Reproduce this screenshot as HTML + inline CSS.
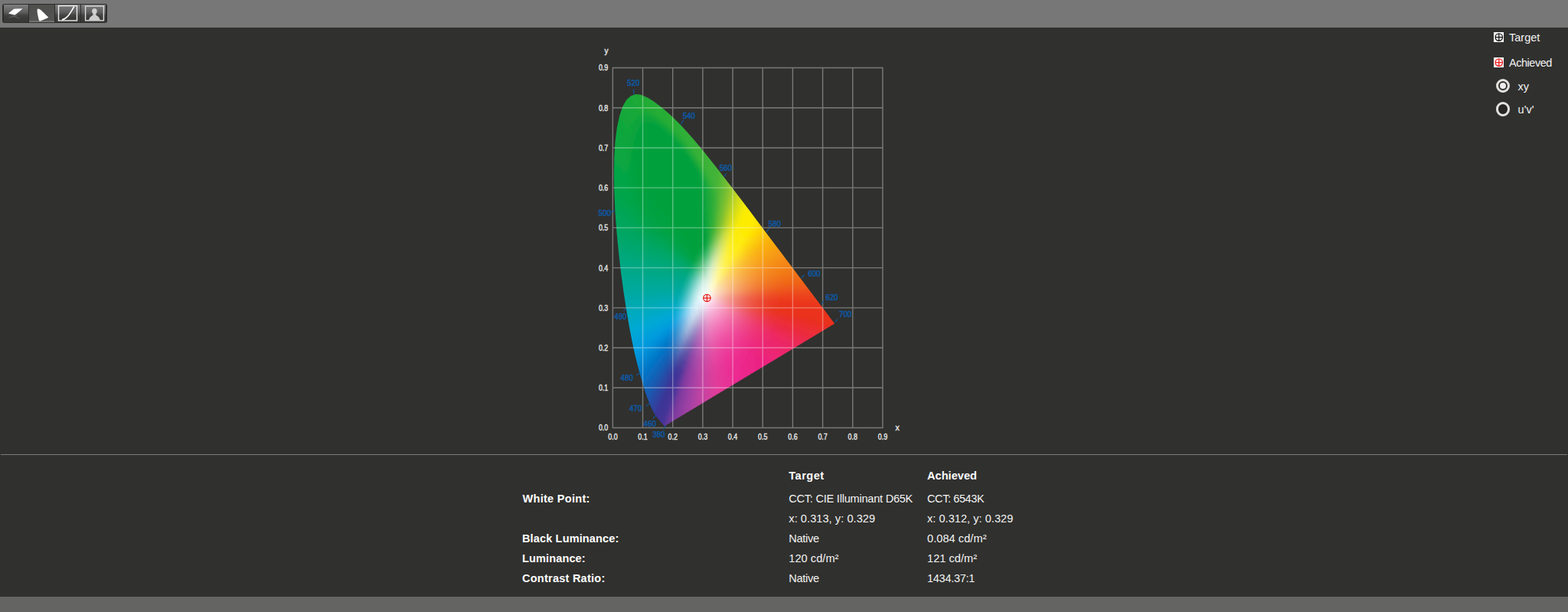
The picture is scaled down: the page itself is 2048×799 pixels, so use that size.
<!DOCTYPE html>
<html lang="en">
<head>
<meta charset="utf-8">
<title>Calibration Results</title>
<style>
html,body{margin:0;padding:0}
body{width:2048px;height:799px;overflow:hidden;background:#30302e;position:relative;font-family:"Liberation Sans","DejaVu Sans",sans-serif;color:#fff}
.hdr{position:absolute;left:0;top:0;width:2048px;height:36px;background:#777}
.ftr{position:absolute;left:0;top:779px;width:2048px;height:20px;background:#646463}
.sep{position:absolute;left:1px;top:593px;width:2046px;height:1px;background:#7c7c7c}
.chart{position:absolute;left:770px;top:50px}
.chart text{font-family:"Liberation Sans","DejaVu Sans",sans-serif}
.ax text{font-size:11.1px;fill:#e8e8e8;stroke:#e8e8e8;stroke-width:.4px}
.wl text{font-size:11.4px;fill:#0f57a0;stroke:#0f57a0;stroke-width:.6px}
.tb{position:absolute;left:3px;top:4.5px;width:136.7px;height:25.3px;border-radius:3px;background:#2c2c2b}
.tb i{position:absolute;top:1.4px;height:22.8px;background:linear-gradient(#7e7e7e 0%,#6c6c6c 25%,#5c5c5c 45%,#434341 60%,#3b3b3a 75%,#383837 100%)}
.tb i.on{background:linear-gradient(#4e4e4c 0%,#545452 85%,#5e5e5c 92%,#8a8a8a 100%)}
.lg{position:absolute;font-size:14.5px;color:#f2f2f2;white-space:nowrap}
.ic{position:absolute}
.rd{position:absolute;width:12.4px;height:12.4px;border:3px solid #e4e2de;border-radius:50%;box-sizing:content-box}
.rd.off{background:#262625}
.rd b{position:absolute;left:2px;top:2px;width:8.4px;height:8.4px;border-radius:50%;background:#ededed}
.t{position:absolute;font-size:14.5px;line-height:20px;color:#f4f4f4;white-space:nowrap}
.b{font-weight:bold;color:#fff}
</style>
</head>
<body>
<div class="hdr"></div>
<div class="tb">
<i style="left:1.7px;width:32.5px"></i><i class="on" style="left:35.3px;width:32.9px"></i><i style="left:69px;width:33px"></i><i style="left:103.2px;width:32.3px"></i>
<svg width="137" height="26" viewBox="3 4.5 137 26" style="position:absolute;left:0;top:0">
<path d="M11 16.9 L17.6 11.6 Q18.3 11 19.3 11 L29.6 10.7 L20.4 18.6 Q19.6 19.2 18.6 19 Z" fill="#fff"/>
<path d="M15.5 19.8 L25.5 23.6 M22.5 19.6 L11.5 22.6" stroke="#6a6a6a" stroke-width="1" fill="none" opacity=".8"/>
<path d="M49.6 10.9 C52.5 10.6 58.5 17.5 63 21.8 Q63.2 22.6 62 23 L52.6 27 Q51.2 27.2 50.9 26 C49.6 21 48.2 14.5 48.7 12 Q48.9 11 49.6 10.9Z" fill="#fff"/>
<rect x="76.5" y="7.1" width="24" height="19.3" fill="none" stroke="#ececec" stroke-width="1.4"/>
<path d="M81 25.4 C87.5 23.8 91.5 17.5 96.8 7.8" fill="none" stroke="#fff" stroke-width="1.6"/>
<rect x="111.6" y="7.5" width="23.8" height="18.8" fill="none" stroke="#dcdcdc" stroke-width="1.4"/>
<ellipse cx="123.4" cy="14.1" rx="3.3" ry="3.6" fill="#cfcfcf"/>
<path d="M115.8 26.2 C116.8 22.4 118.6 20.6 121.4 19.2 L121.6 16.5 H125.2 L125.4 19.2 C128.2 20.6 130 22.4 131 26.2Z" fill="#cdcdcd"/>
</svg>
</div>
<svg class="chart" width="420" height="545" viewBox="770 50 420 545">
<defs><clipPath id="loc"><path d="M868.6 555.9 L868.5 555.9 L868.5 555.9 L868.5 555.9 L868.5 555.9 L868.4 555.9 L868.4 555.9 L868.4 555.9 L868.3 555.9 L868.3 556.0 L868.2 556.0 L868.2 556.0 L868.2 556.0 L868.1 556.0 L868.0 556.0 L868.0 556.0 L867.9 556.0 L867.8 556.0 L867.7 556.0 L867.6 555.9 L867.5 555.8 L867.3 555.7 L867.2 555.6 L867.0 555.4 L866.7 555.2 L866.5 554.9 L866.2 554.6 L865.9 554.2 L865.6 553.8 L865.2 553.3 L864.8 552.8 L864.3 552.3 L863.8 551.6 L863.1 550.9 L862.5 550.1 L861.7 549.3 L860.9 548.3 L860.0 547.2 L859.0 546.0 L857.9 544.6 L856.7 543.0 L855.5 541.2 L854.2 539.0 L852.6 536.2 L850.9 532.7 L849.0 528.3 L846.8 523.1 L844.5 516.8 L842.0 509.2 L839.2 500.0 L836.1 489.2 L832.7 476.6 L829.1 461.9 L825.4 444.9 L821.8 425.8 L818.1 404.5 L814.5 381.0 L811.1 355.9 L808.1 329.9 L805.5 303.5 L803.5 277.3 L802.3 251.9 L801.8 227.9 L802.2 205.5 L803.5 184.9 L805.8 166.7 L809.1 151.4 L813.2 139.2 L818.1 130.6 L823.6 125.4 L829.5 123.1 L835.6 123.3 L841.9 125.5 L848.3 128.8 L854.7 133.0 L861.0 137.7 L867.0 142.5 L873.0 147.7 L878.8 153.0 L884.6 158.7 L890.3 164.6 L896.0 170.7 L901.6 177.0 L907.3 183.5 L912.9 190.2 L918.5 197.0 L924.1 203.9 L929.7 210.9 L935.3 218.0 L940.9 225.2 L946.5 232.4 L952.1 239.7 L957.7 246.9 L963.2 254.2 L968.8 261.5 L974.3 268.8 L979.8 276.1 L985.2 283.3 L990.6 290.4 L995.9 297.4 L1001.1 304.4 L1006.2 311.2 L1011.3 317.9 L1016.2 324.4 L1021.0 330.8 L1025.6 337.0 L1030.2 342.9 L1034.5 348.7 L1038.5 354.1 L1042.3 359.2 L1046.0 364.0 L1049.4 368.6 L1052.7 372.9 L1055.8 377.0 L1058.6 380.7 L1061.1 384.1 L1063.5 387.2 L1065.7 390.2 L1067.7 392.8 L1069.6 395.3 L1071.2 397.5 L1072.7 399.5 L1074.1 401.3 L1075.4 403.0 L1076.6 404.6 L1077.7 406.0 L1078.7 407.3 L1079.6 408.6 L1080.5 409.7 L1081.3 410.8 L1082.0 411.8 L1082.7 412.7 L1083.3 413.5 L1083.8 414.2 L1084.3 414.8 L1084.7 415.4 L1085.1 415.9 L1085.5 416.4 L1085.8 416.8 L1086.1 417.2 L1086.3 417.5 L1086.5 417.7 L1086.7 418.0 L1086.8 418.2 L1087.0 418.4 L1087.1 418.5 L1087.2 418.7 L1087.3 418.8 L1087.4 419.0 L1087.5 419.1 L1087.6 419.3 L1087.8 419.4 L1087.8 419.6 L1087.9 419.7 L1088.0 419.7 L1088.0 419.8 L1088.1 419.8 L1088.1 419.9 L1088.1 419.9 L1088.1 419.9 L1088.1 419.9 L1090.1 422.6 L868.6 555.9Z"/></clipPath>
<filter id="vb" x="-5%" y="-5%" width="110%" height="110%"><feGaussianBlur stdDeviation="0 2"/></filter>
<linearGradient id="g0" gradientUnits="userSpaceOnUse" x1="823" x2="839"><stop offset="0" stop-color="#1aa938"/><stop offset="0.333" stop-color="#1caa37"/><stop offset="0.667" stop-color="#1eab36"/><stop offset="1" stop-color="#21ab35"/></linearGradient><linearGradient id="g1" gradientUnits="userSpaceOnUse" x1="819" x2="847"><stop offset="0" stop-color="#18a938"/><stop offset="0.2" stop-color="#1aa938"/><stop offset="0.4" stop-color="#1caa37"/><stop offset="0.6" stop-color="#1fab36"/><stop offset="0.8" stop-color="#21ac35"/><stop offset="1" stop-color="#24ac34"/></linearGradient><linearGradient id="g2" gradientUnits="userSpaceOnUse" x1="816" x2="853"><stop offset="0" stop-color="#17a839"/><stop offset="0.143" stop-color="#18a938"/><stop offset="0.286" stop-color="#1aa938"/><stop offset="0.429" stop-color="#1caa37"/><stop offset="0.571" stop-color="#1fab36"/><stop offset="0.714" stop-color="#21ab35"/><stop offset="0.857" stop-color="#24ac34"/><stop offset="1" stop-color="#25ad35"/></linearGradient><linearGradient id="g3" gradientUnits="userSpaceOnUse" x1="814" x2="857"><stop offset="0" stop-color="#16a839"/><stop offset="0.125" stop-color="#17a839"/><stop offset="0.25" stop-color="#19a938"/><stop offset="0.375" stop-color="#1baa37"/><stop offset="0.5" stop-color="#1daa36"/><stop offset="0.625" stop-color="#20ab35"/><stop offset="0.75" stop-color="#23ac34"/><stop offset="0.875" stop-color="#24ac34"/><stop offset="1" stop-color="#26ad35"/></linearGradient><linearGradient id="g4" gradientUnits="userSpaceOnUse" x1="812" x2="861"><stop offset="0" stop-color="#15a83a"/><stop offset="0.111" stop-color="#16a839"/><stop offset="0.222" stop-color="#18a938"/><stop offset="0.333" stop-color="#1aa938"/><stop offset="0.444" stop-color="#1caa37"/><stop offset="0.556" stop-color="#1eab36"/><stop offset="0.667" stop-color="#21ab35"/><stop offset="0.778" stop-color="#24ac34"/><stop offset="0.889" stop-color="#25ad35"/><stop offset="1" stop-color="#27ad35"/></linearGradient><linearGradient id="g5" gradientUnits="userSpaceOnUse" x1="810" x2="865"><stop offset="0" stop-color="#14a73a"/><stop offset="0.1" stop-color="#15a83a"/><stop offset="0.2" stop-color="#17a839"/><stop offset="0.3" stop-color="#18a938"/><stop offset="0.4" stop-color="#1aa937"/><stop offset="0.5" stop-color="#1daa36"/><stop offset="0.6" stop-color="#20ab35"/><stop offset="0.7" stop-color="#22ac34"/><stop offset="0.8" stop-color="#24ac34"/><stop offset="0.9" stop-color="#26ad35"/><stop offset="1" stop-color="#28ad35"/></linearGradient><linearGradient id="g6" gradientUnits="userSpaceOnUse" x1="809" x2="869"><stop offset="0" stop-color="#13a73a"/><stop offset="0.1" stop-color="#15a83a"/><stop offset="0.2" stop-color="#16a839"/><stop offset="0.3" stop-color="#18a938"/><stop offset="0.4" stop-color="#1aa937"/><stop offset="0.5" stop-color="#1daa36"/><stop offset="0.6" stop-color="#20ab35"/><stop offset="0.7" stop-color="#23ac34"/><stop offset="0.8" stop-color="#25ad35"/><stop offset="0.9" stop-color="#27ad35"/><stop offset="1" stop-color="#28ae36"/></linearGradient><linearGradient id="g7" gradientUnits="userSpaceOnUse" x1="808" x2="873"><stop offset="0" stop-color="#13a73b"/><stop offset="0.0909" stop-color="#14a73a"/><stop offset="0.182" stop-color="#15a839"/><stop offset="0.273" stop-color="#17a839"/><stop offset="0.364" stop-color="#19a938"/><stop offset="0.455" stop-color="#1baa37"/><stop offset="0.545" stop-color="#1eaa36"/><stop offset="0.636" stop-color="#22ac35"/><stop offset="0.727" stop-color="#24ac34"/><stop offset="0.818" stop-color="#26ad35"/><stop offset="0.909" stop-color="#28ad35"/><stop offset="1" stop-color="#29ae36"/></linearGradient><linearGradient id="g8" gradientUnits="userSpaceOnUse" x1="807" x2="876"><stop offset="0" stop-color="#12a73b"/><stop offset="0.0833" stop-color="#13a73a"/><stop offset="0.167" stop-color="#15a83a"/><stop offset="0.25" stop-color="#16a839"/><stop offset="0.333" stop-color="#18a938"/><stop offset="0.417" stop-color="#17a838"/><stop offset="0.5" stop-color="#17a838"/><stop offset="0.583" stop-color="#1baa36"/><stop offset="0.667" stop-color="#23ac34"/><stop offset="0.75" stop-color="#25ad35"/><stop offset="0.833" stop-color="#26ad35"/><stop offset="0.917" stop-color="#28ae36"/><stop offset="1" stop-color="#2aae36"/></linearGradient><linearGradient id="g9" gradientUnits="userSpaceOnUse" x1="806" x2="879"><stop offset="0" stop-color="#11a73b"/><stop offset="0.0769" stop-color="#12a73b"/><stop offset="0.154" stop-color="#14a73a"/><stop offset="0.231" stop-color="#15a83a"/><stop offset="0.308" stop-color="#17a839"/><stop offset="0.385" stop-color="#15a739"/><stop offset="0.462" stop-color="#13a739"/><stop offset="0.538" stop-color="#14a739"/><stop offset="0.615" stop-color="#1aa937"/><stop offset="0.692" stop-color="#23ac34"/><stop offset="0.769" stop-color="#25ad35"/><stop offset="0.846" stop-color="#27ad35"/><stop offset="0.923" stop-color="#29ae36"/><stop offset="1" stop-color="#2bae36"/></linearGradient><linearGradient id="g10" gradientUnits="userSpaceOnUse" x1="805" x2="882"><stop offset="0" stop-color="#11a73b"/><stop offset="0.0769" stop-color="#12a73b"/><stop offset="0.154" stop-color="#13a73a"/><stop offset="0.231" stop-color="#15a83a"/><stop offset="0.308" stop-color="#15a839"/><stop offset="0.385" stop-color="#11a63a"/><stop offset="0.462" stop-color="#0fa53a"/><stop offset="0.538" stop-color="#0fa53a"/><stop offset="0.615" stop-color="#15a738"/><stop offset="0.692" stop-color="#1fab36"/><stop offset="0.769" stop-color="#26ad35"/><stop offset="0.846" stop-color="#28ad35"/><stop offset="0.923" stop-color="#2aae36"/><stop offset="1" stop-color="#2baf37"/></linearGradient><linearGradient id="g11" gradientUnits="userSpaceOnUse" x1="805" x2="886"><stop offset="0" stop-color="#10a63b"/><stop offset="0.0714" stop-color="#11a73b"/><stop offset="0.143" stop-color="#13a73b"/><stop offset="0.214" stop-color="#14a83a"/><stop offset="0.286" stop-color="#13a73a"/><stop offset="0.357" stop-color="#0fa53b"/><stop offset="0.429" stop-color="#0ca43b"/><stop offset="0.5" stop-color="#0aa43b"/><stop offset="0.571" stop-color="#0da53a"/><stop offset="0.643" stop-color="#15a738"/><stop offset="0.714" stop-color="#21ab36"/><stop offset="0.786" stop-color="#27ad35"/><stop offset="0.857" stop-color="#29ae36"/><stop offset="0.929" stop-color="#2bae36"/><stop offset="1" stop-color="#2caf37"/></linearGradient><linearGradient id="g12" gradientUnits="userSpaceOnUse" x1="804" x2="889"><stop offset="0" stop-color="#10a63c"/><stop offset="0.0667" stop-color="#11a73b"/><stop offset="0.133" stop-color="#12a73b"/><stop offset="0.2" stop-color="#13a73a"/><stop offset="0.267" stop-color="#12a73a"/><stop offset="0.333" stop-color="#0ea53b"/><stop offset="0.4" stop-color="#09a33c"/><stop offset="0.467" stop-color="#07a23c"/><stop offset="0.533" stop-color="#07a23c"/><stop offset="0.6" stop-color="#0ba43b"/><stop offset="0.667" stop-color="#15a738"/><stop offset="0.733" stop-color="#21ab36"/><stop offset="0.8" stop-color="#28ad35"/><stop offset="0.867" stop-color="#29ae36"/><stop offset="0.933" stop-color="#2bae36"/><stop offset="1" stop-color="#2daf37"/></linearGradient><linearGradient id="g13" gradientUnits="userSpaceOnUse" x1="803" x2="892"><stop offset="0" stop-color="#0fa63c"/><stop offset="0.0667" stop-color="#10a63b"/><stop offset="0.133" stop-color="#11a73b"/><stop offset="0.2" stop-color="#13a73a"/><stop offset="0.267" stop-color="#11a63b"/><stop offset="0.333" stop-color="#0ba43c"/><stop offset="0.4" stop-color="#06a23c"/><stop offset="0.467" stop-color="#03a13d"/><stop offset="0.533" stop-color="#02a13d"/><stop offset="0.6" stop-color="#07a23c"/><stop offset="0.667" stop-color="#10a63a"/><stop offset="0.733" stop-color="#1eaa37"/><stop offset="0.8" stop-color="#28ad35"/><stop offset="0.867" stop-color="#2aae36"/><stop offset="0.933" stop-color="#2caf37"/><stop offset="1" stop-color="#2eaf37"/></linearGradient><linearGradient id="g14" gradientUnits="userSpaceOnUse" x1="802" x2="895"><stop offset="0" stop-color="#0fa63c"/><stop offset="0.0625" stop-color="#10a63c"/><stop offset="0.125" stop-color="#11a73b"/><stop offset="0.188" stop-color="#12a73b"/><stop offset="0.25" stop-color="#10a63b"/><stop offset="0.312" stop-color="#0ba43c"/><stop offset="0.375" stop-color="#06a23d"/><stop offset="0.438" stop-color="#01a03e"/><stop offset="0.5" stop-color="#00a03e"/><stop offset="0.562" stop-color="#00a03e"/><stop offset="0.625" stop-color="#05a23d"/><stop offset="0.688" stop-color="#10a63a"/><stop offset="0.75" stop-color="#1faa37"/><stop offset="0.812" stop-color="#29ae36"/><stop offset="0.875" stop-color="#2bae36"/><stop offset="0.938" stop-color="#2daf37"/><stop offset="1" stop-color="#30b037"/></linearGradient><linearGradient id="g15" gradientUnits="userSpaceOnUse" x1="802" x2="898"><stop offset="0" stop-color="#0ea63d"/><stop offset="0.0625" stop-color="#0fa63c"/><stop offset="0.125" stop-color="#10a63b"/><stop offset="0.188" stop-color="#12a73b"/><stop offset="0.25" stop-color="#0ea53b"/><stop offset="0.312" stop-color="#09a33c"/><stop offset="0.375" stop-color="#02a13d"/><stop offset="0.438" stop-color="#00a03e"/><stop offset="0.5" stop-color="#00a03e"/><stop offset="0.562" stop-color="#00a03e"/><stop offset="0.625" stop-color="#01a03e"/><stop offset="0.688" stop-color="#0da43b"/><stop offset="0.75" stop-color="#1daa38"/><stop offset="0.812" stop-color="#29ae36"/><stop offset="0.875" stop-color="#2baf37"/><stop offset="0.938" stop-color="#2eaf37"/><stop offset="1" stop-color="#31b037"/></linearGradient><linearGradient id="g16" gradientUnits="userSpaceOnUse" x1="801" x2="900"><stop offset="0" stop-color="#0da63e"/><stop offset="0.0588" stop-color="#0fa63c"/><stop offset="0.118" stop-color="#10a63c"/><stop offset="0.176" stop-color="#11a73b"/><stop offset="0.235" stop-color="#0fa63b"/><stop offset="0.294" stop-color="#09a33c"/><stop offset="0.353" stop-color="#03a13d"/><stop offset="0.412" stop-color="#00a03e"/><stop offset="0.471" stop-color="#00a03e"/><stop offset="0.529" stop-color="#00a03e"/><stop offset="0.588" stop-color="#00a03e"/><stop offset="0.647" stop-color="#00a03e"/><stop offset="0.706" stop-color="#0ca43b"/><stop offset="0.765" stop-color="#1ca938"/><stop offset="0.824" stop-color="#2aae36"/><stop offset="0.882" stop-color="#2caf37"/><stop offset="0.941" stop-color="#2faf37"/><stop offset="1" stop-color="#32b037"/></linearGradient><linearGradient id="g17" gradientUnits="userSpaceOnUse" x1="801" x2="903"><stop offset="0" stop-color="#0da63e"/><stop offset="0.0588" stop-color="#0ea63d"/><stop offset="0.118" stop-color="#0fa63c"/><stop offset="0.176" stop-color="#11a63b"/><stop offset="0.235" stop-color="#0da53c"/><stop offset="0.294" stop-color="#07a33d"/><stop offset="0.353" stop-color="#00a03e"/><stop offset="0.412" stop-color="#00a03e"/><stop offset="0.471" stop-color="#00a03e"/><stop offset="0.529" stop-color="#00a03e"/><stop offset="0.588" stop-color="#00a03e"/><stop offset="0.647" stop-color="#00a03e"/><stop offset="0.706" stop-color="#09a33c"/><stop offset="0.765" stop-color="#1aa939"/><stop offset="0.824" stop-color="#2bae36"/><stop offset="0.882" stop-color="#2daf37"/><stop offset="0.941" stop-color="#30b037"/><stop offset="1" stop-color="#34b037"/></linearGradient><linearGradient id="g18" gradientUnits="userSpaceOnUse" x1="801" x2="905"><stop offset="0" stop-color="#0ca63f"/><stop offset="0.0556" stop-color="#0da63e"/><stop offset="0.111" stop-color="#0fa63c"/><stop offset="0.167" stop-color="#10a63c"/><stop offset="0.222" stop-color="#0da53c"/><stop offset="0.278" stop-color="#07a33d"/><stop offset="0.333" stop-color="#00a03e"/><stop offset="0.389" stop-color="#00a03e"/><stop offset="0.444" stop-color="#00a03e"/><stop offset="0.5" stop-color="#00a03e"/><stop offset="0.556" stop-color="#00a03e"/><stop offset="0.611" stop-color="#00a03e"/><stop offset="0.667" stop-color="#00a03e"/><stop offset="0.722" stop-color="#09a33c"/><stop offset="0.778" stop-color="#1ba939"/><stop offset="0.833" stop-color="#2bae36"/><stop offset="0.889" stop-color="#2daf37"/><stop offset="0.944" stop-color="#31b037"/><stop offset="1" stop-color="#34b137"/></linearGradient><linearGradient id="g19" gradientUnits="userSpaceOnUse" x1="800" x2="908"><stop offset="0" stop-color="#0ba640"/><stop offset="0.0556" stop-color="#0da63e"/><stop offset="0.111" stop-color="#0ea63d"/><stop offset="0.167" stop-color="#10a63c"/><stop offset="0.222" stop-color="#0ca53c"/><stop offset="0.278" stop-color="#06a23d"/><stop offset="0.333" stop-color="#00a03e"/><stop offset="0.389" stop-color="#00a03e"/><stop offset="0.444" stop-color="#00a03e"/><stop offset="0.5" stop-color="#00a03e"/><stop offset="0.556" stop-color="#00a03e"/><stop offset="0.611" stop-color="#00a03e"/><stop offset="0.667" stop-color="#00a03e"/><stop offset="0.722" stop-color="#06a23d"/><stop offset="0.778" stop-color="#19a839"/><stop offset="0.833" stop-color="#2caf37"/><stop offset="0.889" stop-color="#2faf37"/><stop offset="0.944" stop-color="#32b037"/><stop offset="1" stop-color="#36b137"/></linearGradient><linearGradient id="g20" gradientUnits="userSpaceOnUse" x1="800" x2="911"><stop offset="0" stop-color="#0ba640"/><stop offset="0.0526" stop-color="#0ca63f"/><stop offset="0.105" stop-color="#0ea63d"/><stop offset="0.158" stop-color="#0fa63c"/><stop offset="0.211" stop-color="#0ca53c"/><stop offset="0.263" stop-color="#06a23d"/><stop offset="0.316" stop-color="#00a03e"/><stop offset="0.368" stop-color="#00a03e"/><stop offset="0.421" stop-color="#00a03e"/><stop offset="0.474" stop-color="#00a03e"/><stop offset="0.526" stop-color="#00a03e"/><stop offset="0.579" stop-color="#00a03e"/><stop offset="0.632" stop-color="#00a03e"/><stop offset="0.684" stop-color="#00a03e"/><stop offset="0.737" stop-color="#09a33c"/><stop offset="0.789" stop-color="#1ca939"/><stop offset="0.842" stop-color="#2daf37"/><stop offset="0.895" stop-color="#30b037"/><stop offset="0.947" stop-color="#34b137"/><stop offset="1" stop-color="#37b137"/></linearGradient><linearGradient id="g21" gradientUnits="userSpaceOnUse" x1="800" x2="914"><stop offset="0" stop-color="#0aa641"/><stop offset="0.0526" stop-color="#0ca63f"/><stop offset="0.105" stop-color="#0da63e"/><stop offset="0.158" stop-color="#0fa63c"/><stop offset="0.211" stop-color="#0aa43c"/><stop offset="0.263" stop-color="#04a23d"/><stop offset="0.316" stop-color="#00a03e"/><stop offset="0.368" stop-color="#00a03e"/><stop offset="0.421" stop-color="#00a03e"/><stop offset="0.474" stop-color="#00a03e"/><stop offset="0.526" stop-color="#00a03e"/><stop offset="0.579" stop-color="#00a03e"/><stop offset="0.632" stop-color="#00a03e"/><stop offset="0.684" stop-color="#00a03e"/><stop offset="0.737" stop-color="#07a23d"/><stop offset="0.789" stop-color="#1ca939"/><stop offset="0.842" stop-color="#2eaf37"/><stop offset="0.895" stop-color="#32b037"/><stop offset="0.947" stop-color="#35b137"/><stop offset="1" stop-color="#39b237"/></linearGradient><linearGradient id="g22" gradientUnits="userSpaceOnUse" x1="800" x2="915"><stop offset="0" stop-color="#0aa641"/><stop offset="0.05" stop-color="#0ba640"/><stop offset="0.1" stop-color="#0ca63f"/><stop offset="0.15" stop-color="#0ea63d"/><stop offset="0.2" stop-color="#0ba43d"/><stop offset="0.25" stop-color="#05a23d"/><stop offset="0.3" stop-color="#00a03e"/><stop offset="0.35" stop-color="#00a03e"/><stop offset="0.4" stop-color="#00a03e"/><stop offset="0.45" stop-color="#00a03e"/><stop offset="0.5" stop-color="#00a03e"/><stop offset="0.55" stop-color="#00a03e"/><stop offset="0.6" stop-color="#00a03e"/><stop offset="0.65" stop-color="#00a03e"/><stop offset="0.7" stop-color="#00a03e"/><stop offset="0.75" stop-color="#06a23d"/><stop offset="0.8" stop-color="#1aa93a"/><stop offset="0.85" stop-color="#2eaf37"/><stop offset="0.9" stop-color="#32b037"/><stop offset="0.95" stop-color="#36b137"/><stop offset="1" stop-color="#39b237"/></linearGradient><linearGradient id="g23" gradientUnits="userSpaceOnUse" x1="799" x2="918"><stop offset="0" stop-color="#09a642"/><stop offset="0.05" stop-color="#0aa641"/><stop offset="0.1" stop-color="#0ca63f"/><stop offset="0.15" stop-color="#0da63e"/><stop offset="0.2" stop-color="#0aa43d"/><stop offset="0.25" stop-color="#05a23d"/><stop offset="0.3" stop-color="#00a03e"/><stop offset="0.35" stop-color="#00a03e"/><stop offset="0.4" stop-color="#00a03e"/><stop offset="0.45" stop-color="#00a03e"/><stop offset="0.5" stop-color="#00a03e"/><stop offset="0.55" stop-color="#00a03e"/><stop offset="0.6" stop-color="#00a03e"/><stop offset="0.65" stop-color="#00a03e"/><stop offset="0.7" stop-color="#00a03e"/><stop offset="0.75" stop-color="#04a13d"/><stop offset="0.8" stop-color="#19a83a"/><stop offset="0.85" stop-color="#30b037"/><stop offset="0.9" stop-color="#34b037"/><stop offset="0.95" stop-color="#37b137"/><stop offset="1" stop-color="#3ab237"/></linearGradient><linearGradient id="g24" gradientUnits="userSpaceOnUse" x1="799" x2="921"><stop offset="0" stop-color="#09a642"/><stop offset="0.0476" stop-color="#0aa641"/><stop offset="0.0952" stop-color="#0ba640"/><stop offset="0.143" stop-color="#0ca63f"/><stop offset="0.19" stop-color="#0aa43d"/><stop offset="0.238" stop-color="#05a23d"/><stop offset="0.286" stop-color="#00a03e"/><stop offset="0.333" stop-color="#00a03e"/><stop offset="0.381" stop-color="#00a03e"/><stop offset="0.429" stop-color="#00a03e"/><stop offset="0.476" stop-color="#00a03e"/><stop offset="0.524" stop-color="#00a03e"/><stop offset="0.571" stop-color="#00a03e"/><stop offset="0.619" stop-color="#00a03e"/><stop offset="0.667" stop-color="#00a03e"/><stop offset="0.714" stop-color="#00a03e"/><stop offset="0.762" stop-color="#08a33d"/><stop offset="0.81" stop-color="#1eaa39"/><stop offset="0.857" stop-color="#32b037"/><stop offset="0.905" stop-color="#35b137"/><stop offset="0.952" stop-color="#39b237"/><stop offset="1" stop-color="#3cb237"/></linearGradient><linearGradient id="g25" gradientUnits="userSpaceOnUse" x1="799" x2="923"><stop offset="0" stop-color="#08a643"/><stop offset="0.0476" stop-color="#09a642"/><stop offset="0.0952" stop-color="#0ba640"/><stop offset="0.143" stop-color="#0ca63f"/><stop offset="0.19" stop-color="#09a43e"/><stop offset="0.238" stop-color="#04a23d"/><stop offset="0.286" stop-color="#00a03e"/><stop offset="0.333" stop-color="#00a03e"/><stop offset="0.381" stop-color="#00a03e"/><stop offset="0.429" stop-color="#00a03e"/><stop offset="0.476" stop-color="#00a03e"/><stop offset="0.524" stop-color="#00a03e"/><stop offset="0.571" stop-color="#00a03e"/><stop offset="0.619" stop-color="#00a03e"/><stop offset="0.667" stop-color="#00a03e"/><stop offset="0.714" stop-color="#00a03e"/><stop offset="0.762" stop-color="#05a23d"/><stop offset="0.81" stop-color="#1ca93a"/><stop offset="0.857" stop-color="#33b037"/><stop offset="0.905" stop-color="#36b137"/><stop offset="0.952" stop-color="#3ab237"/><stop offset="1" stop-color="#3db237"/></linearGradient><linearGradient id="g26" gradientUnits="userSpaceOnUse" x1="799" x2="926"><stop offset="0" stop-color="#08a643"/><stop offset="0.0455" stop-color="#09a642"/><stop offset="0.0909" stop-color="#0aa641"/><stop offset="0.136" stop-color="#0ba640"/><stop offset="0.182" stop-color="#09a43e"/><stop offset="0.227" stop-color="#04a23e"/><stop offset="0.273" stop-color="#00a03e"/><stop offset="0.318" stop-color="#00a03e"/><stop offset="0.364" stop-color="#00a03e"/><stop offset="0.409" stop-color="#00a03e"/><stop offset="0.455" stop-color="#00a03e"/><stop offset="0.5" stop-color="#00a03e"/><stop offset="0.545" stop-color="#00a03e"/><stop offset="0.591" stop-color="#00a03e"/><stop offset="0.636" stop-color="#00a03e"/><stop offset="0.682" stop-color="#00a03e"/><stop offset="0.727" stop-color="#00a03e"/><stop offset="0.773" stop-color="#0aa33c"/><stop offset="0.818" stop-color="#22ab39"/><stop offset="0.864" stop-color="#35b137"/><stop offset="0.909" stop-color="#38b137"/><stop offset="0.955" stop-color="#3bb237"/><stop offset="1" stop-color="#3eb337"/></linearGradient><linearGradient id="g27" gradientUnits="userSpaceOnUse" x1="799" x2="928"><stop offset="0" stop-color="#07a544"/><stop offset="0.0455" stop-color="#08a643"/><stop offset="0.0909" stop-color="#09a642"/><stop offset="0.136" stop-color="#0ba640"/><stop offset="0.182" stop-color="#08a43f"/><stop offset="0.227" stop-color="#04a23e"/><stop offset="0.273" stop-color="#00a03e"/><stop offset="0.318" stop-color="#00a03e"/><stop offset="0.364" stop-color="#00a03e"/><stop offset="0.409" stop-color="#00a03e"/><stop offset="0.455" stop-color="#00a03e"/><stop offset="0.5" stop-color="#00a03e"/><stop offset="0.545" stop-color="#00a03e"/><stop offset="0.591" stop-color="#00a03e"/><stop offset="0.636" stop-color="#00a03e"/><stop offset="0.682" stop-color="#00a03e"/><stop offset="0.727" stop-color="#00a03e"/><stop offset="0.773" stop-color="#07a23d"/><stop offset="0.818" stop-color="#20aa39"/><stop offset="0.864" stop-color="#35b137"/><stop offset="0.909" stop-color="#39b237"/><stop offset="0.955" stop-color="#3cb237"/><stop offset="1" stop-color="#3fb337"/></linearGradient><linearGradient id="g28" gradientUnits="userSpaceOnUse" x1="799" x2="930"><stop offset="0" stop-color="#07a544"/><stop offset="0.0455" stop-color="#08a643"/><stop offset="0.0909" stop-color="#09a642"/><stop offset="0.136" stop-color="#0aa641"/><stop offset="0.182" stop-color="#07a43f"/><stop offset="0.227" stop-color="#03a13e"/><stop offset="0.273" stop-color="#00a03e"/><stop offset="0.318" stop-color="#00a03e"/><stop offset="0.364" stop-color="#00a03e"/><stop offset="0.409" stop-color="#00a03e"/><stop offset="0.455" stop-color="#00a03e"/><stop offset="0.5" stop-color="#00a03e"/><stop offset="0.545" stop-color="#00a03e"/><stop offset="0.591" stop-color="#00a03e"/><stop offset="0.636" stop-color="#00a03e"/><stop offset="0.682" stop-color="#00a03e"/><stop offset="0.727" stop-color="#00a03e"/><stop offset="0.773" stop-color="#05a23d"/><stop offset="0.818" stop-color="#1faa3a"/><stop offset="0.864" stop-color="#36b137"/><stop offset="0.909" stop-color="#3ab237"/><stop offset="0.955" stop-color="#3db337"/><stop offset="1" stop-color="#40b337"/></linearGradient><linearGradient id="g29" gradientUnits="userSpaceOnUse" x1="799" x2="933"><stop offset="0" stop-color="#06a545"/><stop offset="0.0435" stop-color="#07a544"/><stop offset="0.087" stop-color="#08a643"/><stop offset="0.13" stop-color="#09a642"/><stop offset="0.174" stop-color="#07a43f"/><stop offset="0.217" stop-color="#03a23e"/><stop offset="0.261" stop-color="#00a03e"/><stop offset="0.304" stop-color="#00a03e"/><stop offset="0.348" stop-color="#00a03e"/><stop offset="0.391" stop-color="#00a03e"/><stop offset="0.435" stop-color="#00a03e"/><stop offset="0.478" stop-color="#00a03e"/><stop offset="0.522" stop-color="#00a03e"/><stop offset="0.565" stop-color="#00a03e"/><stop offset="0.609" stop-color="#00a03e"/><stop offset="0.652" stop-color="#00a03e"/><stop offset="0.696" stop-color="#00a03e"/><stop offset="0.739" stop-color="#00a03e"/><stop offset="0.783" stop-color="#0ba43c"/><stop offset="0.826" stop-color="#26ac39"/><stop offset="0.87" stop-color="#38b137"/><stop offset="0.913" stop-color="#3cb237"/><stop offset="0.957" stop-color="#3fb337"/><stop offset="1" stop-color="#41b337"/></linearGradient><linearGradient id="g30" gradientUnits="userSpaceOnUse" x1="798" x2="935"><stop offset="0" stop-color="#06a545"/><stop offset="0.0435" stop-color="#07a544"/><stop offset="0.087" stop-color="#08a643"/><stop offset="0.13" stop-color="#09a642"/><stop offset="0.174" stop-color="#07a440"/><stop offset="0.217" stop-color="#03a23e"/><stop offset="0.261" stop-color="#00a03e"/><stop offset="0.304" stop-color="#00a03e"/><stop offset="0.348" stop-color="#00a03e"/><stop offset="0.391" stop-color="#00a03e"/><stop offset="0.435" stop-color="#00a03e"/><stop offset="0.478" stop-color="#00a03e"/><stop offset="0.522" stop-color="#00a03e"/><stop offset="0.565" stop-color="#00a03e"/><stop offset="0.609" stop-color="#00a03e"/><stop offset="0.652" stop-color="#00a03e"/><stop offset="0.696" stop-color="#00a03e"/><stop offset="0.739" stop-color="#00a03e"/><stop offset="0.783" stop-color="#08a33d"/><stop offset="0.826" stop-color="#25ac39"/><stop offset="0.87" stop-color="#39b237"/><stop offset="0.913" stop-color="#3db237"/><stop offset="0.957" stop-color="#40b337"/><stop offset="1" stop-color="#42b437"/></linearGradient><linearGradient id="g31" gradientUnits="userSpaceOnUse" x1="798" x2="938"><stop offset="0" stop-color="#05a546"/><stop offset="0.0417" stop-color="#06a545"/><stop offset="0.0833" stop-color="#07a544"/><stop offset="0.125" stop-color="#08a643"/><stop offset="0.167" stop-color="#07a441"/><stop offset="0.208" stop-color="#04a23f"/><stop offset="0.25" stop-color="#00a03e"/><stop offset="0.292" stop-color="#00a03e"/><stop offset="0.333" stop-color="#00a03e"/><stop offset="0.375" stop-color="#00a03e"/><stop offset="0.417" stop-color="#00a03e"/><stop offset="0.458" stop-color="#00a03e"/><stop offset="0.5" stop-color="#00a03e"/><stop offset="0.542" stop-color="#00a03e"/><stop offset="0.583" stop-color="#00a03e"/><stop offset="0.625" stop-color="#00a03e"/><stop offset="0.667" stop-color="#00a03e"/><stop offset="0.708" stop-color="#00a03e"/><stop offset="0.75" stop-color="#00a03e"/><stop offset="0.792" stop-color="#0fa53c"/><stop offset="0.833" stop-color="#2dae38"/><stop offset="0.875" stop-color="#3bb237"/><stop offset="0.917" stop-color="#3eb337"/><stop offset="0.958" stop-color="#41b337"/><stop offset="1" stop-color="#44b437"/></linearGradient><linearGradient id="g32" gradientUnits="userSpaceOnUse" x1="798" x2="940"><stop offset="0" stop-color="#05a546"/><stop offset="0.0417" stop-color="#06a545"/><stop offset="0.0833" stop-color="#07a544"/><stop offset="0.125" stop-color="#08a643"/><stop offset="0.167" stop-color="#06a441"/><stop offset="0.208" stop-color="#03a23f"/><stop offset="0.25" stop-color="#00a03e"/><stop offset="0.292" stop-color="#00a03e"/><stop offset="0.333" stop-color="#00a03e"/><stop offset="0.375" stop-color="#00a03e"/><stop offset="0.417" stop-color="#00a03e"/><stop offset="0.458" stop-color="#00a03e"/><stop offset="0.5" stop-color="#00a03e"/><stop offset="0.542" stop-color="#00a03e"/><stop offset="0.583" stop-color="#00a03e"/><stop offset="0.625" stop-color="#00a03e"/><stop offset="0.667" stop-color="#00a03e"/><stop offset="0.708" stop-color="#00a03e"/><stop offset="0.75" stop-color="#00a03e"/><stop offset="0.792" stop-color="#0ea43c"/><stop offset="0.833" stop-color="#2dae38"/><stop offset="0.875" stop-color="#3cb237"/><stop offset="0.917" stop-color="#3fb337"/><stop offset="0.958" stop-color="#42b437"/><stop offset="1" stop-color="#4ab536"/></linearGradient><linearGradient id="g33" gradientUnits="userSpaceOnUse" x1="798" x2="942"><stop offset="0" stop-color="#04a547"/><stop offset="0.0417" stop-color="#05a546"/><stop offset="0.0833" stop-color="#06a545"/><stop offset="0.125" stop-color="#07a544"/><stop offset="0.167" stop-color="#06a441"/><stop offset="0.208" stop-color="#03a23f"/><stop offset="0.25" stop-color="#00a03e"/><stop offset="0.292" stop-color="#00a03e"/><stop offset="0.333" stop-color="#00a03e"/><stop offset="0.375" stop-color="#00a03e"/><stop offset="0.417" stop-color="#00a03e"/><stop offset="0.458" stop-color="#00a03e"/><stop offset="0.5" stop-color="#00a03e"/><stop offset="0.542" stop-color="#00a03e"/><stop offset="0.583" stop-color="#00a03e"/><stop offset="0.625" stop-color="#00a03e"/><stop offset="0.667" stop-color="#00a03e"/><stop offset="0.708" stop-color="#00a03e"/><stop offset="0.75" stop-color="#00a03e"/><stop offset="0.792" stop-color="#0ea43c"/><stop offset="0.833" stop-color="#2eae38"/><stop offset="0.875" stop-color="#3db237"/><stop offset="0.917" stop-color="#40b337"/><stop offset="0.958" stop-color="#43b437"/><stop offset="1" stop-color="#52b736"/></linearGradient><linearGradient id="g34" gradientUnits="userSpaceOnUse" x1="798" x2="944"><stop offset="0" stop-color="#04a547"/><stop offset="0.04" stop-color="#05a546"/><stop offset="0.08" stop-color="#06a545"/><stop offset="0.12" stop-color="#07a544"/><stop offset="0.16" stop-color="#06a442"/><stop offset="0.2" stop-color="#03a23f"/><stop offset="0.24" stop-color="#00a03e"/><stop offset="0.28" stop-color="#00a03e"/><stop offset="0.32" stop-color="#00a03e"/><stop offset="0.36" stop-color="#00a03e"/><stop offset="0.4" stop-color="#00a03e"/><stop offset="0.44" stop-color="#00a03e"/><stop offset="0.48" stop-color="#00a03e"/><stop offset="0.52" stop-color="#00a03e"/><stop offset="0.56" stop-color="#00a03e"/><stop offset="0.6" stop-color="#00a03e"/><stop offset="0.64" stop-color="#00a03e"/><stop offset="0.68" stop-color="#00a03e"/><stop offset="0.72" stop-color="#00a03e"/><stop offset="0.76" stop-color="#00a03e"/><stop offset="0.8" stop-color="#16a73b"/><stop offset="0.84" stop-color="#32af38"/><stop offset="0.88" stop-color="#3eb337"/><stop offset="0.92" stop-color="#41b337"/><stop offset="0.96" stop-color="#45b437"/><stop offset="1" stop-color="#5ab935"/></linearGradient><linearGradient id="g35" gradientUnits="userSpaceOnUse" x1="798" x2="947"><stop offset="0" stop-color="#03a548"/><stop offset="0.04" stop-color="#04a547"/><stop offset="0.08" stop-color="#05a546"/><stop offset="0.12" stop-color="#06a545"/><stop offset="0.16" stop-color="#05a442"/><stop offset="0.2" stop-color="#03a23f"/><stop offset="0.24" stop-color="#00a03e"/><stop offset="0.28" stop-color="#00a03e"/><stop offset="0.32" stop-color="#00a03e"/><stop offset="0.36" stop-color="#00a03e"/><stop offset="0.4" stop-color="#00a03e"/><stop offset="0.44" stop-color="#00a03e"/><stop offset="0.48" stop-color="#00a03e"/><stop offset="0.52" stop-color="#00a03e"/><stop offset="0.56" stop-color="#00a03e"/><stop offset="0.6" stop-color="#00a03e"/><stop offset="0.64" stop-color="#00a03e"/><stop offset="0.68" stop-color="#00a03e"/><stop offset="0.72" stop-color="#00a03e"/><stop offset="0.76" stop-color="#00a03e"/><stop offset="0.8" stop-color="#1ba83b"/><stop offset="0.84" stop-color="#36b038"/><stop offset="0.88" stop-color="#40b337"/><stop offset="0.92" stop-color="#43b437"/><stop offset="0.96" stop-color="#51b736"/><stop offset="1" stop-color="#65bb34"/></linearGradient><linearGradient id="g36" gradientUnits="userSpaceOnUse" x1="798" x2="949"><stop offset="0" stop-color="#03a548"/><stop offset="0.0385" stop-color="#04a547"/><stop offset="0.0769" stop-color="#04a547"/><stop offset="0.115" stop-color="#05a546"/><stop offset="0.154" stop-color="#05a443"/><stop offset="0.192" stop-color="#03a240"/><stop offset="0.231" stop-color="#00a03e"/><stop offset="0.269" stop-color="#00a03e"/><stop offset="0.308" stop-color="#00a03e"/><stop offset="0.346" stop-color="#00a03e"/><stop offset="0.385" stop-color="#00a03e"/><stop offset="0.423" stop-color="#00a03e"/><stop offset="0.462" stop-color="#00a03e"/><stop offset="0.5" stop-color="#00a03e"/><stop offset="0.538" stop-color="#00a03e"/><stop offset="0.577" stop-color="#00a03e"/><stop offset="0.615" stop-color="#00a03e"/><stop offset="0.654" stop-color="#00a03e"/><stop offset="0.692" stop-color="#00a03e"/><stop offset="0.731" stop-color="#00a03e"/><stop offset="0.769" stop-color="#05a23d"/><stop offset="0.808" stop-color="#23ab3a"/><stop offset="0.846" stop-color="#3ab137"/><stop offset="0.885" stop-color="#41b337"/><stop offset="0.923" stop-color="#44b437"/><stop offset="0.962" stop-color="#5ab935"/><stop offset="1" stop-color="#6ebd33"/></linearGradient><linearGradient id="g37" gradientUnits="userSpaceOnUse" x1="798" x2="951"><stop offset="0" stop-color="#02a549"/><stop offset="0.0385" stop-color="#03a548"/><stop offset="0.0769" stop-color="#04a547"/><stop offset="0.115" stop-color="#05a546"/><stop offset="0.154" stop-color="#05a444"/><stop offset="0.192" stop-color="#03a240"/><stop offset="0.231" stop-color="#00a03e"/><stop offset="0.269" stop-color="#00a03e"/><stop offset="0.308" stop-color="#00a03e"/><stop offset="0.346" stop-color="#00a03e"/><stop offset="0.385" stop-color="#00a03e"/><stop offset="0.423" stop-color="#00a03e"/><stop offset="0.462" stop-color="#00a03e"/><stop offset="0.5" stop-color="#00a03e"/><stop offset="0.538" stop-color="#00a03e"/><stop offset="0.577" stop-color="#00a03e"/><stop offset="0.615" stop-color="#00a03e"/><stop offset="0.654" stop-color="#00a03e"/><stop offset="0.692" stop-color="#00a03e"/><stop offset="0.731" stop-color="#00a03e"/><stop offset="0.769" stop-color="#08a23d"/><stop offset="0.808" stop-color="#24ab3a"/><stop offset="0.846" stop-color="#3ab237"/><stop offset="0.885" stop-color="#42b437"/><stop offset="0.923" stop-color="#4db636"/><stop offset="0.962" stop-color="#62ba34"/><stop offset="1" stop-color="#76be33"/></linearGradient><linearGradient id="g38" gradientUnits="userSpaceOnUse" x1="798" x2="954"><stop offset="0" stop-color="#02a549"/><stop offset="0.0385" stop-color="#03a548"/><stop offset="0.0769" stop-color="#03a548"/><stop offset="0.115" stop-color="#04a547"/><stop offset="0.154" stop-color="#04a444"/><stop offset="0.192" stop-color="#03a240"/><stop offset="0.231" stop-color="#00a03e"/><stop offset="0.269" stop-color="#00a03e"/><stop offset="0.308" stop-color="#00a03e"/><stop offset="0.346" stop-color="#00a03e"/><stop offset="0.385" stop-color="#00a03e"/><stop offset="0.423" stop-color="#00a03e"/><stop offset="0.462" stop-color="#00a03e"/><stop offset="0.5" stop-color="#00a03e"/><stop offset="0.538" stop-color="#00a03e"/><stop offset="0.577" stop-color="#00a03e"/><stop offset="0.615" stop-color="#00a03e"/><stop offset="0.654" stop-color="#00a03e"/><stop offset="0.692" stop-color="#00a03e"/><stop offset="0.731" stop-color="#00a03e"/><stop offset="0.769" stop-color="#0ca43c"/><stop offset="0.808" stop-color="#2aad39"/><stop offset="0.846" stop-color="#3eb237"/><stop offset="0.885" stop-color="#44b437"/><stop offset="0.923" stop-color="#58b835"/><stop offset="0.962" stop-color="#6ebd33"/><stop offset="1" stop-color="#84c230"/></linearGradient><linearGradient id="g39" gradientUnits="userSpaceOnUse" x1="798" x2="956"><stop offset="0" stop-color="#01a54a"/><stop offset="0.037" stop-color="#02a549"/><stop offset="0.0741" stop-color="#03a548"/><stop offset="0.111" stop-color="#04a547"/><stop offset="0.148" stop-color="#04a445"/><stop offset="0.185" stop-color="#03a341"/><stop offset="0.222" stop-color="#00a03e"/><stop offset="0.259" stop-color="#00a03e"/><stop offset="0.296" stop-color="#00a03e"/><stop offset="0.333" stop-color="#00a03e"/><stop offset="0.37" stop-color="#00a03e"/><stop offset="0.407" stop-color="#00a03e"/><stop offset="0.444" stop-color="#00a03e"/><stop offset="0.481" stop-color="#00a03e"/><stop offset="0.519" stop-color="#00a03e"/><stop offset="0.556" stop-color="#00a03e"/><stop offset="0.593" stop-color="#00a03e"/><stop offset="0.63" stop-color="#00a03e"/><stop offset="0.667" stop-color="#00a03e"/><stop offset="0.704" stop-color="#00a03e"/><stop offset="0.741" stop-color="#05a13d"/><stop offset="0.778" stop-color="#14a63c"/><stop offset="0.815" stop-color="#30af39"/><stop offset="0.852" stop-color="#41b337"/><stop offset="0.889" stop-color="#4cb636"/><stop offset="0.926" stop-color="#62ba34"/><stop offset="0.963" stop-color="#76bf33"/><stop offset="1" stop-color="#91c62d"/></linearGradient><linearGradient id="g40" gradientUnits="userSpaceOnUse" x1="798" x2="958"><stop offset="0" stop-color="#01a54a"/><stop offset="0.037" stop-color="#02a549"/><stop offset="0.0741" stop-color="#02a549"/><stop offset="0.111" stop-color="#03a548"/><stop offset="0.148" stop-color="#04a445"/><stop offset="0.185" stop-color="#03a342"/><stop offset="0.222" stop-color="#00a03e"/><stop offset="0.259" stop-color="#00a03e"/><stop offset="0.296" stop-color="#00a03e"/><stop offset="0.333" stop-color="#00a03e"/><stop offset="0.37" stop-color="#00a03e"/><stop offset="0.407" stop-color="#00a03e"/><stop offset="0.444" stop-color="#00a03e"/><stop offset="0.481" stop-color="#00a03e"/><stop offset="0.519" stop-color="#00a03e"/><stop offset="0.556" stop-color="#00a03e"/><stop offset="0.593" stop-color="#00a03e"/><stop offset="0.63" stop-color="#00a03e"/><stop offset="0.667" stop-color="#00a03e"/><stop offset="0.704" stop-color="#00a03e"/><stop offset="0.741" stop-color="#07a23d"/><stop offset="0.778" stop-color="#17a73b"/><stop offset="0.815" stop-color="#32af38"/><stop offset="0.852" stop-color="#42b337"/><stop offset="0.889" stop-color="#54b736"/><stop offset="0.926" stop-color="#6abc34"/><stop offset="0.963" stop-color="#80c131"/><stop offset="1" stop-color="#9fcb29"/></linearGradient><linearGradient id="g41" gradientUnits="userSpaceOnUse" x1="798" x2="961"><stop offset="0" stop-color="#01a54a"/><stop offset="0.0357" stop-color="#01a54a"/><stop offset="0.0714" stop-color="#02a549"/><stop offset="0.107" stop-color="#03a548"/><stop offset="0.143" stop-color="#03a546"/><stop offset="0.179" stop-color="#03a343"/><stop offset="0.214" stop-color="#01a13f"/><stop offset="0.25" stop-color="#00a03e"/><stop offset="0.286" stop-color="#00a03e"/><stop offset="0.321" stop-color="#00a03e"/><stop offset="0.357" stop-color="#00a03e"/><stop offset="0.393" stop-color="#00a03e"/><stop offset="0.429" stop-color="#00a03e"/><stop offset="0.464" stop-color="#00a03e"/><stop offset="0.5" stop-color="#00a03e"/><stop offset="0.536" stop-color="#00a03e"/><stop offset="0.571" stop-color="#00a03e"/><stop offset="0.607" stop-color="#00a03e"/><stop offset="0.643" stop-color="#00a03e"/><stop offset="0.679" stop-color="#00a03e"/><stop offset="0.714" stop-color="#01a03e"/><stop offset="0.75" stop-color="#10a53c"/><stop offset="0.786" stop-color="#25ab3a"/><stop offset="0.821" stop-color="#3ab138"/><stop offset="0.857" stop-color="#4cb636"/><stop offset="0.893" stop-color="#63ba34"/><stop offset="0.929" stop-color="#78bf32"/><stop offset="0.964" stop-color="#94c72c"/><stop offset="1" stop-color="#b1d124"/></linearGradient><linearGradient id="g42" gradientUnits="userSpaceOnUse" x1="799" x2="963"><stop offset="0" stop-color="#00a54b"/><stop offset="0.0357" stop-color="#01a54a"/><stop offset="0.0714" stop-color="#02a549"/><stop offset="0.107" stop-color="#02a549"/><stop offset="0.143" stop-color="#03a446"/><stop offset="0.179" stop-color="#02a343"/><stop offset="0.214" stop-color="#01a13f"/><stop offset="0.25" stop-color="#00a03e"/><stop offset="0.286" stop-color="#00a03e"/><stop offset="0.321" stop-color="#00a03e"/><stop offset="0.357" stop-color="#00a03e"/><stop offset="0.393" stop-color="#00a03e"/><stop offset="0.429" stop-color="#00a03e"/><stop offset="0.464" stop-color="#00a03e"/><stop offset="0.5" stop-color="#00a03e"/><stop offset="0.536" stop-color="#00a03e"/><stop offset="0.571" stop-color="#00a03e"/><stop offset="0.607" stop-color="#00a03e"/><stop offset="0.643" stop-color="#00a03e"/><stop offset="0.679" stop-color="#00a03e"/><stop offset="0.714" stop-color="#05a13d"/><stop offset="0.75" stop-color="#14a63c"/><stop offset="0.786" stop-color="#29ac39"/><stop offset="0.821" stop-color="#3db238"/><stop offset="0.857" stop-color="#55b736"/><stop offset="0.893" stop-color="#6bbc34"/><stop offset="0.929" stop-color="#82c231"/><stop offset="0.964" stop-color="#a2cc28"/><stop offset="1" stop-color="#bfd520"/></linearGradient><linearGradient id="g43" gradientUnits="userSpaceOnUse" x1="799" x2="965"><stop offset="0" stop-color="#00a54c"/><stop offset="0.0357" stop-color="#00a54b"/><stop offset="0.0714" stop-color="#01a54a"/><stop offset="0.107" stop-color="#02a549"/><stop offset="0.143" stop-color="#02a447"/><stop offset="0.179" stop-color="#02a343"/><stop offset="0.214" stop-color="#01a13f"/><stop offset="0.25" stop-color="#01a13f"/><stop offset="0.286" stop-color="#00a03e"/><stop offset="0.321" stop-color="#00a03e"/><stop offset="0.357" stop-color="#00a03e"/><stop offset="0.393" stop-color="#00a03e"/><stop offset="0.429" stop-color="#00a03e"/><stop offset="0.464" stop-color="#00a03e"/><stop offset="0.5" stop-color="#00a03e"/><stop offset="0.536" stop-color="#00a03e"/><stop offset="0.571" stop-color="#00a03e"/><stop offset="0.607" stop-color="#00a03e"/><stop offset="0.643" stop-color="#00a03e"/><stop offset="0.679" stop-color="#00a03e"/><stop offset="0.714" stop-color="#08a23d"/><stop offset="0.75" stop-color="#18a73b"/><stop offset="0.786" stop-color="#2dad39"/><stop offset="0.821" stop-color="#3fb338"/><stop offset="0.857" stop-color="#5db935"/><stop offset="0.893" stop-color="#74be33"/><stop offset="0.929" stop-color="#90c62d"/><stop offset="0.964" stop-color="#b0d025"/><stop offset="1" stop-color="#cbd91d"/></linearGradient><linearGradient id="g44" gradientUnits="userSpaceOnUse" x1="799" x2="968"><stop offset="0" stop-color="#00a54d"/><stop offset="0.0345" stop-color="#00a54b"/><stop offset="0.069" stop-color="#01a54a"/><stop offset="0.103" stop-color="#01a54a"/><stop offset="0.138" stop-color="#02a548"/><stop offset="0.172" stop-color="#02a344"/><stop offset="0.207" stop-color="#01a140"/><stop offset="0.241" stop-color="#01a13f"/><stop offset="0.276" stop-color="#00a03e"/><stop offset="0.31" stop-color="#00a03e"/><stop offset="0.345" stop-color="#00a03e"/><stop offset="0.379" stop-color="#00a03e"/><stop offset="0.414" stop-color="#00a03e"/><stop offset="0.448" stop-color="#00a03e"/><stop offset="0.483" stop-color="#00a03e"/><stop offset="0.517" stop-color="#00a03e"/><stop offset="0.552" stop-color="#00a03e"/><stop offset="0.586" stop-color="#00a03e"/><stop offset="0.621" stop-color="#00a03e"/><stop offset="0.655" stop-color="#00a03e"/><stop offset="0.69" stop-color="#01a03e"/><stop offset="0.724" stop-color="#12a53c"/><stop offset="0.759" stop-color="#22aa3a"/><stop offset="0.793" stop-color="#38b038"/><stop offset="0.828" stop-color="#52b736"/><stop offset="0.862" stop-color="#6cbc33"/><stop offset="0.897" stop-color="#85c330"/><stop offset="0.931" stop-color="#a5cd27"/><stop offset="0.966" stop-color="#c3d61f"/><stop offset="1" stop-color="#d7de16"/></linearGradient><linearGradient id="g45" gradientUnits="userSpaceOnUse" x1="799" x2="970"><stop offset="0" stop-color="#00a54f"/><stop offset="0.0345" stop-color="#00a54d"/><stop offset="0.069" stop-color="#00a54b"/><stop offset="0.103" stop-color="#01a54a"/><stop offset="0.138" stop-color="#01a548"/><stop offset="0.172" stop-color="#02a345"/><stop offset="0.207" stop-color="#01a241"/><stop offset="0.241" stop-color="#01a140"/><stop offset="0.276" stop-color="#01a13f"/><stop offset="0.31" stop-color="#00a03e"/><stop offset="0.345" stop-color="#00a03e"/><stop offset="0.379" stop-color="#00a03e"/><stop offset="0.414" stop-color="#00a03e"/><stop offset="0.448" stop-color="#00a03e"/><stop offset="0.483" stop-color="#00a03e"/><stop offset="0.517" stop-color="#00a03e"/><stop offset="0.552" stop-color="#00a03e"/><stop offset="0.586" stop-color="#00a03e"/><stop offset="0.621" stop-color="#00a03e"/><stop offset="0.655" stop-color="#00a03e"/><stop offset="0.69" stop-color="#04a13d"/><stop offset="0.724" stop-color="#15a73b"/><stop offset="0.759" stop-color="#26ab3a"/><stop offset="0.793" stop-color="#3bb138"/><stop offset="0.828" stop-color="#5cb935"/><stop offset="0.862" stop-color="#75be33"/><stop offset="0.897" stop-color="#93c72c"/><stop offset="0.931" stop-color="#b3d123"/><stop offset="0.966" stop-color="#ceda1b"/><stop offset="1" stop-color="#e0e212"/></linearGradient><linearGradient id="g46" gradientUnits="userSpaceOnUse" x1="799" x2="972"><stop offset="0" stop-color="#00a550"/><stop offset="0.0345" stop-color="#00a54f"/><stop offset="0.069" stop-color="#00a54c"/><stop offset="0.103" stop-color="#00a54b"/><stop offset="0.138" stop-color="#01a549"/><stop offset="0.172" stop-color="#01a345"/><stop offset="0.207" stop-color="#01a241"/><stop offset="0.241" stop-color="#01a140"/><stop offset="0.276" stop-color="#01a13f"/><stop offset="0.31" stop-color="#00a03e"/><stop offset="0.345" stop-color="#00a03e"/><stop offset="0.379" stop-color="#00a03e"/><stop offset="0.414" stop-color="#00a03e"/><stop offset="0.448" stop-color="#00a03e"/><stop offset="0.483" stop-color="#00a03e"/><stop offset="0.517" stop-color="#00a03e"/><stop offset="0.552" stop-color="#00a03e"/><stop offset="0.586" stop-color="#00a03e"/><stop offset="0.621" stop-color="#00a03e"/><stop offset="0.655" stop-color="#00a03e"/><stop offset="0.69" stop-color="#07a23d"/><stop offset="0.724" stop-color="#19a83b"/><stop offset="0.759" stop-color="#2bad39"/><stop offset="0.793" stop-color="#44b337"/><stop offset="0.828" stop-color="#66bb34"/><stop offset="0.862" stop-color="#7ec032"/><stop offset="0.897" stop-color="#a1cc28"/><stop offset="0.931" stop-color="#c2d620"/><stop offset="0.966" stop-color="#d7de16"/><stop offset="1" stop-color="#e9e50d"/></linearGradient><linearGradient id="g47" gradientUnits="userSpaceOnUse" x1="799" x2="974"><stop offset="0" stop-color="#00a552"/><stop offset="0.0333" stop-color="#00a550"/><stop offset="0.0667" stop-color="#00a54e"/><stop offset="0.1" stop-color="#00a54c"/><stop offset="0.133" stop-color="#00a54a"/><stop offset="0.167" stop-color="#01a446"/><stop offset="0.2" stop-color="#01a243"/><stop offset="0.233" stop-color="#01a141"/><stop offset="0.267" stop-color="#01a140"/><stop offset="0.3" stop-color="#01a13f"/><stop offset="0.333" stop-color="#00a03e"/><stop offset="0.367" stop-color="#00a03e"/><stop offset="0.4" stop-color="#00a03e"/><stop offset="0.433" stop-color="#00a03e"/><stop offset="0.467" stop-color="#00a03e"/><stop offset="0.5" stop-color="#00a03e"/><stop offset="0.533" stop-color="#00a03e"/><stop offset="0.567" stop-color="#00a03e"/><stop offset="0.6" stop-color="#00a03e"/><stop offset="0.633" stop-color="#00a03e"/><stop offset="0.667" stop-color="#00a03e"/><stop offset="0.7" stop-color="#10a53c"/><stop offset="0.733" stop-color="#23aa3a"/><stop offset="0.767" stop-color="#34af39"/><stop offset="0.8" stop-color="#56b835"/><stop offset="0.833" stop-color="#73be33"/><stop offset="0.867" stop-color="#91c72d"/><stop offset="0.9" stop-color="#b3d124"/><stop offset="0.933" stop-color="#cedb1b"/><stop offset="0.967" stop-color="#e1e211"/><stop offset="1" stop-color="#f3e909"/></linearGradient><linearGradient id="g48" gradientUnits="userSpaceOnUse" x1="799" x2="977"><stop offset="0" stop-color="#00a553"/><stop offset="0.0333" stop-color="#00a552"/><stop offset="0.0667" stop-color="#00a550"/><stop offset="0.1" stop-color="#00a54e"/><stop offset="0.133" stop-color="#00a54a"/><stop offset="0.167" stop-color="#01a447"/><stop offset="0.2" stop-color="#01a243"/><stop offset="0.233" stop-color="#01a241"/><stop offset="0.267" stop-color="#01a140"/><stop offset="0.3" stop-color="#01a13f"/><stop offset="0.333" stop-color="#00a03e"/><stop offset="0.367" stop-color="#00a03e"/><stop offset="0.4" stop-color="#00a03e"/><stop offset="0.433" stop-color="#00a03e"/><stop offset="0.467" stop-color="#00a03e"/><stop offset="0.5" stop-color="#00a03e"/><stop offset="0.533" stop-color="#00a03e"/><stop offset="0.567" stop-color="#00a03e"/><stop offset="0.6" stop-color="#00a03e"/><stop offset="0.633" stop-color="#00a03e"/><stop offset="0.667" stop-color="#03a13e"/><stop offset="0.7" stop-color="#17a73b"/><stop offset="0.733" stop-color="#29ac3a"/><stop offset="0.767" stop-color="#40b237"/><stop offset="0.8" stop-color="#67bb34"/><stop offset="0.833" stop-color="#81c131"/><stop offset="0.867" stop-color="#a5cd27"/><stop offset="0.9" stop-color="#c6d71e"/><stop offset="0.933" stop-color="#dbe014"/><stop offset="0.967" stop-color="#eee70b"/><stop offset="1" stop-color="#faec05"/></linearGradient><linearGradient id="g49" gradientUnits="userSpaceOnUse" x1="799" x2="979"><stop offset="0" stop-color="#00a555"/><stop offset="0.0333" stop-color="#00a553"/><stop offset="0.0667" stop-color="#00a551"/><stop offset="0.1" stop-color="#00a54f"/><stop offset="0.133" stop-color="#00a54c"/><stop offset="0.167" stop-color="#00a448"/><stop offset="0.2" stop-color="#01a344"/><stop offset="0.233" stop-color="#01a242"/><stop offset="0.267" stop-color="#01a141"/><stop offset="0.3" stop-color="#01a13f"/><stop offset="0.333" stop-color="#00a03e"/><stop offset="0.367" stop-color="#00a03e"/><stop offset="0.4" stop-color="#00a03e"/><stop offset="0.433" stop-color="#00a03e"/><stop offset="0.467" stop-color="#00a03e"/><stop offset="0.5" stop-color="#00a03e"/><stop offset="0.533" stop-color="#00a03e"/><stop offset="0.567" stop-color="#00a03e"/><stop offset="0.6" stop-color="#00a03e"/><stop offset="0.633" stop-color="#00a03e"/><stop offset="0.667" stop-color="#07a23d"/><stop offset="0.7" stop-color="#1ba83b"/><stop offset="0.733" stop-color="#2eae39"/><stop offset="0.767" stop-color="#4cb536"/><stop offset="0.8" stop-color="#70bd33"/><stop offset="0.833" stop-color="#8fc62d"/><stop offset="0.867" stop-color="#b4d223"/><stop offset="0.9" stop-color="#d1db1a"/><stop offset="0.933" stop-color="#e5e310"/><stop offset="0.967" stop-color="#f7eb06"/><stop offset="1" stop-color="#fbec04"/></linearGradient><linearGradient id="g50" gradientUnits="userSpaceOnUse" x1="800" x2="981"><stop offset="0" stop-color="#00a556"/><stop offset="0.0323" stop-color="#00a554"/><stop offset="0.0645" stop-color="#00a553"/><stop offset="0.0968" stop-color="#00a551"/><stop offset="0.129" stop-color="#00a54e"/><stop offset="0.161" stop-color="#00a449"/><stop offset="0.194" stop-color="#00a345"/><stop offset="0.226" stop-color="#01a243"/><stop offset="0.258" stop-color="#01a241"/><stop offset="0.29" stop-color="#01a140"/><stop offset="0.323" stop-color="#01a13f"/><stop offset="0.355" stop-color="#00a03e"/><stop offset="0.387" stop-color="#00a03e"/><stop offset="0.419" stop-color="#00a03e"/><stop offset="0.452" stop-color="#00a03e"/><stop offset="0.484" stop-color="#00a03e"/><stop offset="0.516" stop-color="#00a03e"/><stop offset="0.548" stop-color="#00a03e"/><stop offset="0.581" stop-color="#00a03e"/><stop offset="0.613" stop-color="#00a03e"/><stop offset="0.645" stop-color="#00a03e"/><stop offset="0.677" stop-color="#12a63c"/><stop offset="0.71" stop-color="#27ac3a"/><stop offset="0.742" stop-color="#3cb138"/><stop offset="0.774" stop-color="#64bb34"/><stop offset="0.806" stop-color="#80c131"/><stop offset="0.839" stop-color="#a5cd27"/><stop offset="0.871" stop-color="#c8d81e"/><stop offset="0.903" stop-color="#dde014"/><stop offset="0.935" stop-color="#f0e80a"/><stop offset="0.968" stop-color="#fbec04"/><stop offset="1" stop-color="#fcec03"/></linearGradient><linearGradient id="g51" gradientUnits="userSpaceOnUse" x1="800" x2="983"><stop offset="0" stop-color="#00a658"/><stop offset="0.0323" stop-color="#00a556"/><stop offset="0.0645" stop-color="#00a554"/><stop offset="0.0968" stop-color="#00a552"/><stop offset="0.129" stop-color="#00a54f"/><stop offset="0.161" stop-color="#00a44a"/><stop offset="0.194" stop-color="#00a346"/><stop offset="0.226" stop-color="#00a243"/><stop offset="0.258" stop-color="#01a242"/><stop offset="0.29" stop-color="#01a141"/><stop offset="0.323" stop-color="#01a13f"/><stop offset="0.355" stop-color="#00a03e"/><stop offset="0.387" stop-color="#00a03e"/><stop offset="0.419" stop-color="#00a03e"/><stop offset="0.452" stop-color="#00a03e"/><stop offset="0.484" stop-color="#00a03e"/><stop offset="0.516" stop-color="#00a03e"/><stop offset="0.548" stop-color="#00a03e"/><stop offset="0.581" stop-color="#00a03e"/><stop offset="0.613" stop-color="#00a03e"/><stop offset="0.645" stop-color="#01a03e"/><stop offset="0.677" stop-color="#17a73b"/><stop offset="0.71" stop-color="#2cad39"/><stop offset="0.742" stop-color="#48b437"/><stop offset="0.774" stop-color="#6ebd33"/><stop offset="0.806" stop-color="#8fc62d"/><stop offset="0.839" stop-color="#b5d223"/><stop offset="0.871" stop-color="#d2dc19"/><stop offset="0.903" stop-color="#e6e40f"/><stop offset="0.935" stop-color="#f9ec05"/><stop offset="0.968" stop-color="#fbec04"/><stop offset="1" stop-color="#fdeb02"/></linearGradient><linearGradient id="g52" gradientUnits="userSpaceOnUse" x1="800" x2="986"><stop offset="0" stop-color="#00a659"/><stop offset="0.0323" stop-color="#00a557"/><stop offset="0.0645" stop-color="#00a556"/><stop offset="0.0968" stop-color="#00a554"/><stop offset="0.129" stop-color="#00a551"/><stop offset="0.161" stop-color="#00a44c"/><stop offset="0.194" stop-color="#00a347"/><stop offset="0.226" stop-color="#00a244"/><stop offset="0.258" stop-color="#01a243"/><stop offset="0.29" stop-color="#01a241"/><stop offset="0.323" stop-color="#01a140"/><stop offset="0.355" stop-color="#01a13f"/><stop offset="0.387" stop-color="#00a03e"/><stop offset="0.419" stop-color="#00a03e"/><stop offset="0.452" stop-color="#00a03e"/><stop offset="0.484" stop-color="#00a03e"/><stop offset="0.516" stop-color="#00a03e"/><stop offset="0.548" stop-color="#00a03e"/><stop offset="0.581" stop-color="#00a03e"/><stop offset="0.613" stop-color="#00a03e"/><stop offset="0.645" stop-color="#07a23d"/><stop offset="0.677" stop-color="#1ea93b"/><stop offset="0.71" stop-color="#34af39"/><stop offset="0.742" stop-color="#5bb935"/><stop offset="0.774" stop-color="#7bc032"/><stop offset="0.806" stop-color="#a4cc28"/><stop offset="0.839" stop-color="#c9d81e"/><stop offset="0.871" stop-color="#dfe113"/><stop offset="0.903" stop-color="#f3e908"/><stop offset="0.935" stop-color="#fbec04"/><stop offset="0.968" stop-color="#fcec03"/><stop offset="1" stop-color="#feeb01"/></linearGradient><linearGradient id="g53" gradientUnits="userSpaceOnUse" x1="800" x2="988"><stop offset="0" stop-color="#00a65a"/><stop offset="0.0312" stop-color="#00a659"/><stop offset="0.0625" stop-color="#00a557"/><stop offset="0.0938" stop-color="#00a556"/><stop offset="0.125" stop-color="#00a553"/><stop offset="0.156" stop-color="#00a44f"/><stop offset="0.188" stop-color="#00a44a"/><stop offset="0.219" stop-color="#00a346"/><stop offset="0.25" stop-color="#00a244"/><stop offset="0.281" stop-color="#01a242"/><stop offset="0.312" stop-color="#01a241"/><stop offset="0.344" stop-color="#01a140"/><stop offset="0.375" stop-color="#00a03e"/><stop offset="0.406" stop-color="#00a03e"/><stop offset="0.438" stop-color="#00a03e"/><stop offset="0.469" stop-color="#00a03e"/><stop offset="0.5" stop-color="#00a03e"/><stop offset="0.531" stop-color="#00a03e"/><stop offset="0.562" stop-color="#00a03e"/><stop offset="0.594" stop-color="#00a03e"/><stop offset="0.625" stop-color="#00a03e"/><stop offset="0.656" stop-color="#14a63c"/><stop offset="0.688" stop-color="#2bad39"/><stop offset="0.719" stop-color="#48b437"/><stop offset="0.75" stop-color="#70bd33"/><stop offset="0.781" stop-color="#93c72c"/><stop offset="0.812" stop-color="#bad422"/><stop offset="0.844" stop-color="#d6de17"/><stop offset="0.875" stop-color="#ece60c"/><stop offset="0.906" stop-color="#faec05"/><stop offset="0.938" stop-color="#fcec03"/><stop offset="0.969" stop-color="#fdeb02"/><stop offset="1" stop-color="#feeb01"/></linearGradient><linearGradient id="g54" gradientUnits="userSpaceOnUse" x1="800" x2="990"><stop offset="0" stop-color="#00a65c"/><stop offset="0.0312" stop-color="#00a65a"/><stop offset="0.0625" stop-color="#00a659"/><stop offset="0.0938" stop-color="#00a557"/><stop offset="0.125" stop-color="#00a555"/><stop offset="0.156" stop-color="#00a550"/><stop offset="0.188" stop-color="#00a44b"/><stop offset="0.219" stop-color="#00a347"/><stop offset="0.25" stop-color="#00a345"/><stop offset="0.281" stop-color="#00a243"/><stop offset="0.312" stop-color="#01a242"/><stop offset="0.344" stop-color="#01a140"/><stop offset="0.375" stop-color="#01a13f"/><stop offset="0.406" stop-color="#00a03e"/><stop offset="0.438" stop-color="#00a03e"/><stop offset="0.469" stop-color="#00a03e"/><stop offset="0.5" stop-color="#00a03e"/><stop offset="0.531" stop-color="#00a03e"/><stop offset="0.562" stop-color="#00a03e"/><stop offset="0.594" stop-color="#00a03e"/><stop offset="0.625" stop-color="#00a03e"/><stop offset="0.656" stop-color="#19a83b"/><stop offset="0.688" stop-color="#30ae39"/><stop offset="0.719" stop-color="#56b735"/><stop offset="0.75" stop-color="#7abf32"/><stop offset="0.781" stop-color="#a3cc28"/><stop offset="0.812" stop-color="#cad91e"/><stop offset="0.844" stop-color="#e1e212"/><stop offset="0.875" stop-color="#f6ea07"/><stop offset="0.906" stop-color="#fbec04"/><stop offset="0.938" stop-color="#fdeb02"/><stop offset="0.969" stop-color="#feeb01"/><stop offset="1" stop-color="#ffea00"/></linearGradient><linearGradient id="g55" gradientUnits="userSpaceOnUse" x1="801" x2="992"><stop offset="0" stop-color="#00a65d"/><stop offset="0.0312" stop-color="#00a65c"/><stop offset="0.0625" stop-color="#00a65a"/><stop offset="0.0938" stop-color="#00a659"/><stop offset="0.125" stop-color="#00a556"/><stop offset="0.156" stop-color="#00a552"/><stop offset="0.188" stop-color="#00a44d"/><stop offset="0.219" stop-color="#00a349"/><stop offset="0.25" stop-color="#00a346"/><stop offset="0.281" stop-color="#00a244"/><stop offset="0.312" stop-color="#01a242"/><stop offset="0.344" stop-color="#01a140"/><stop offset="0.375" stop-color="#01a13f"/><stop offset="0.406" stop-color="#00a03e"/><stop offset="0.438" stop-color="#00a03e"/><stop offset="0.469" stop-color="#00a03e"/><stop offset="0.5" stop-color="#00a03e"/><stop offset="0.531" stop-color="#00a03e"/><stop offset="0.562" stop-color="#00a03e"/><stop offset="0.594" stop-color="#00a03e"/><stop offset="0.625" stop-color="#06a23d"/><stop offset="0.656" stop-color="#20aa3a"/><stop offset="0.688" stop-color="#38b038"/><stop offset="0.719" stop-color="#67bb34"/><stop offset="0.75" stop-color="#8ac42f"/><stop offset="0.781" stop-color="#b5d225"/><stop offset="0.812" stop-color="#d5dd1a"/><stop offset="0.844" stop-color="#ece60d"/><stop offset="0.875" stop-color="#fbec05"/><stop offset="0.906" stop-color="#fcec03"/><stop offset="0.938" stop-color="#fdeb02"/><stop offset="0.969" stop-color="#ffeb00"/><stop offset="1" stop-color="#fee401"/></linearGradient><linearGradient id="g56" gradientUnits="userSpaceOnUse" x1="801" x2="995"><stop offset="0" stop-color="#00a65f"/><stop offset="0.0303" stop-color="#00a65d"/><stop offset="0.0606" stop-color="#00a65c"/><stop offset="0.0909" stop-color="#00a65a"/><stop offset="0.121" stop-color="#00a558"/><stop offset="0.152" stop-color="#00a554"/><stop offset="0.182" stop-color="#00a44f"/><stop offset="0.212" stop-color="#00a34b"/><stop offset="0.242" stop-color="#00a348"/><stop offset="0.273" stop-color="#00a345"/><stop offset="0.303" stop-color="#00a243"/><stop offset="0.333" stop-color="#01a242"/><stop offset="0.364" stop-color="#01a140"/><stop offset="0.394" stop-color="#00a03e"/><stop offset="0.424" stop-color="#00a03e"/><stop offset="0.455" stop-color="#00a03e"/><stop offset="0.485" stop-color="#00a03e"/><stop offset="0.515" stop-color="#00a03e"/><stop offset="0.545" stop-color="#00a03e"/><stop offset="0.576" stop-color="#00a03e"/><stop offset="0.606" stop-color="#00a03e"/><stop offset="0.636" stop-color="#17a73b"/><stop offset="0.667" stop-color="#31ae39"/><stop offset="0.697" stop-color="#5ab835"/><stop offset="0.727" stop-color="#7ec032"/><stop offset="0.758" stop-color="#accf29"/><stop offset="0.788" stop-color="#d0dc20"/><stop offset="0.818" stop-color="#e7e512"/><stop offset="0.848" stop-color="#faec06"/><stop offset="0.879" stop-color="#fcec03"/><stop offset="0.909" stop-color="#fdeb02"/><stop offset="0.939" stop-color="#ffeb00"/><stop offset="0.97" stop-color="#ffe501"/><stop offset="1" stop-color="#fedd03"/></linearGradient><linearGradient id="g57" gradientUnits="userSpaceOnUse" x1="801" x2="997"><stop offset="0" stop-color="#00a660"/><stop offset="0.0303" stop-color="#00a65f"/><stop offset="0.0606" stop-color="#00a65d"/><stop offset="0.0909" stop-color="#00a65c"/><stop offset="0.121" stop-color="#00a65a"/><stop offset="0.152" stop-color="#00a556"/><stop offset="0.182" stop-color="#00a452"/><stop offset="0.212" stop-color="#00a44d"/><stop offset="0.242" stop-color="#00a34a"/><stop offset="0.273" stop-color="#00a347"/><stop offset="0.303" stop-color="#00a244"/><stop offset="0.333" stop-color="#01a242"/><stop offset="0.364" stop-color="#01a141"/><stop offset="0.394" stop-color="#01a13f"/><stop offset="0.424" stop-color="#00a03e"/><stop offset="0.455" stop-color="#00a03e"/><stop offset="0.485" stop-color="#00a03e"/><stop offset="0.515" stop-color="#00a03e"/><stop offset="0.545" stop-color="#00a03e"/><stop offset="0.576" stop-color="#00a03e"/><stop offset="0.606" stop-color="#00a03e"/><stop offset="0.636" stop-color="#1da93b"/><stop offset="0.667" stop-color="#38b038"/><stop offset="0.697" stop-color="#69bc34"/><stop offset="0.727" stop-color="#91c731"/><stop offset="0.758" stop-color="#bed62a"/><stop offset="0.788" stop-color="#dbe01d"/><stop offset="0.818" stop-color="#f2e90d"/><stop offset="0.848" stop-color="#fbec05"/><stop offset="0.879" stop-color="#fdec03"/><stop offset="0.909" stop-color="#feeb01"/><stop offset="0.939" stop-color="#ffe801"/><stop offset="0.97" stop-color="#fedf03"/><stop offset="1" stop-color="#fdd704"/></linearGradient><linearGradient id="g58" gradientUnits="userSpaceOnUse" x1="801" x2="999"><stop offset="0" stop-color="#00a661"/><stop offset="0.0303" stop-color="#00a660"/><stop offset="0.0606" stop-color="#00a65f"/><stop offset="0.0909" stop-color="#00a65d"/><stop offset="0.121" stop-color="#00a65c"/><stop offset="0.152" stop-color="#00a558"/><stop offset="0.182" stop-color="#00a554"/><stop offset="0.212" stop-color="#00a44f"/><stop offset="0.242" stop-color="#00a44c"/><stop offset="0.273" stop-color="#00a349"/><stop offset="0.303" stop-color="#00a345"/><stop offset="0.333" stop-color="#00a243"/><stop offset="0.364" stop-color="#01a241"/><stop offset="0.394" stop-color="#01a13f"/><stop offset="0.424" stop-color="#00a03e"/><stop offset="0.455" stop-color="#00a03e"/><stop offset="0.485" stop-color="#00a03e"/><stop offset="0.515" stop-color="#00a03e"/><stop offset="0.545" stop-color="#00a03e"/><stop offset="0.576" stop-color="#00a03e"/><stop offset="0.606" stop-color="#05a23d"/><stop offset="0.636" stop-color="#23ab3a"/><stop offset="0.667" stop-color="#45b337"/><stop offset="0.697" stop-color="#76bf36"/><stop offset="0.727" stop-color="#a4ce33"/><stop offset="0.758" stop-color="#cedc2b"/><stop offset="0.788" stop-color="#e6e51a"/><stop offset="0.818" stop-color="#faec09"/><stop offset="0.848" stop-color="#fcec05"/><stop offset="0.879" stop-color="#fdeb02"/><stop offset="0.909" stop-color="#ffeb00"/><stop offset="0.939" stop-color="#fee202"/><stop offset="0.97" stop-color="#fdd904"/><stop offset="1" stop-color="#fdd006"/></linearGradient><linearGradient id="g59" gradientUnits="userSpaceOnUse" x1="802" x2="1002"><stop offset="0" stop-color="#00a663"/><stop offset="0.0294" stop-color="#00a662"/><stop offset="0.0588" stop-color="#00a660"/><stop offset="0.0882" stop-color="#00a65f"/><stop offset="0.118" stop-color="#00a65d"/><stop offset="0.147" stop-color="#00a55a"/><stop offset="0.176" stop-color="#00a556"/><stop offset="0.206" stop-color="#00a452"/><stop offset="0.235" stop-color="#00a44f"/><stop offset="0.265" stop-color="#00a34b"/><stop offset="0.294" stop-color="#00a348"/><stop offset="0.324" stop-color="#00a244"/><stop offset="0.353" stop-color="#01a242"/><stop offset="0.382" stop-color="#01a140"/><stop offset="0.412" stop-color="#00a03f"/><stop offset="0.441" stop-color="#00a03e"/><stop offset="0.471" stop-color="#00a03e"/><stop offset="0.5" stop-color="#00a03e"/><stop offset="0.529" stop-color="#00a03e"/><stop offset="0.559" stop-color="#00a03e"/><stop offset="0.588" stop-color="#00a03e"/><stop offset="0.618" stop-color="#1ca83b"/><stop offset="0.647" stop-color="#3ab138"/><stop offset="0.676" stop-color="#70be39"/><stop offset="0.706" stop-color="#9ecc39"/><stop offset="0.735" stop-color="#cadb33"/><stop offset="0.765" stop-color="#e3e421"/><stop offset="0.794" stop-color="#faec0d"/><stop offset="0.824" stop-color="#fcec06"/><stop offset="0.853" stop-color="#fdeb03"/><stop offset="0.882" stop-color="#ffeb01"/><stop offset="0.912" stop-color="#fee302"/><stop offset="0.941" stop-color="#feda04"/><stop offset="0.971" stop-color="#fdd106"/><stop offset="1" stop-color="#fcc807"/></linearGradient><linearGradient id="g60" gradientUnits="userSpaceOnUse" x1="802" x2="1004"><stop offset="0" stop-color="#00a664"/><stop offset="0.0294" stop-color="#00a663"/><stop offset="0.0588" stop-color="#00a662"/><stop offset="0.0882" stop-color="#00a660"/><stop offset="0.118" stop-color="#00a65f"/><stop offset="0.147" stop-color="#00a55c"/><stop offset="0.176" stop-color="#00a558"/><stop offset="0.206" stop-color="#00a454"/><stop offset="0.235" stop-color="#00a451"/><stop offset="0.265" stop-color="#00a44e"/><stop offset="0.294" stop-color="#00a34a"/><stop offset="0.324" stop-color="#00a346"/><stop offset="0.353" stop-color="#00a243"/><stop offset="0.382" stop-color="#01a241"/><stop offset="0.412" stop-color="#01a13f"/><stop offset="0.441" stop-color="#00a03e"/><stop offset="0.471" stop-color="#00a03e"/><stop offset="0.5" stop-color="#00a03e"/><stop offset="0.529" stop-color="#00a03e"/><stop offset="0.559" stop-color="#00a03e"/><stop offset="0.588" stop-color="#01a03e"/><stop offset="0.618" stop-color="#22aa3a"/><stop offset="0.647" stop-color="#4cb63a"/><stop offset="0.676" stop-color="#80c340"/><stop offset="0.706" stop-color="#b2d33e"/><stop offset="0.735" stop-color="#d7e032"/><stop offset="0.765" stop-color="#eee81c"/><stop offset="0.794" stop-color="#fbec0b"/><stop offset="0.824" stop-color="#fdec06"/><stop offset="0.853" stop-color="#feeb03"/><stop offset="0.882" stop-color="#ffe702"/><stop offset="0.912" stop-color="#fedd04"/><stop offset="0.941" stop-color="#fdd305"/><stop offset="0.971" stop-color="#fcca07"/><stop offset="1" stop-color="#fbc109"/></linearGradient><linearGradient id="g61" gradientUnits="userSpaceOnUse" x1="802" x2="1006"><stop offset="0" stop-color="#00a667"/><stop offset="0.0294" stop-color="#00a665"/><stop offset="0.0588" stop-color="#00a663"/><stop offset="0.0882" stop-color="#00a662"/><stop offset="0.118" stop-color="#00a660"/><stop offset="0.147" stop-color="#00a65e"/><stop offset="0.176" stop-color="#00a55b"/><stop offset="0.206" stop-color="#00a557"/><stop offset="0.235" stop-color="#00a453"/><stop offset="0.265" stop-color="#00a450"/><stop offset="0.294" stop-color="#00a44c"/><stop offset="0.324" stop-color="#00a348"/><stop offset="0.353" stop-color="#00a244"/><stop offset="0.382" stop-color="#01a242"/><stop offset="0.412" stop-color="#01a140"/><stop offset="0.441" stop-color="#00a03e"/><stop offset="0.471" stop-color="#00a03e"/><stop offset="0.5" stop-color="#00a03e"/><stop offset="0.529" stop-color="#00a03e"/><stop offset="0.559" stop-color="#00a03e"/><stop offset="0.588" stop-color="#06a23d"/><stop offset="0.618" stop-color="#2bad3b"/><stop offset="0.647" stop-color="#61bc40"/><stop offset="0.676" stop-color="#94ca47"/><stop offset="0.706" stop-color="#c5da43"/><stop offset="0.735" stop-color="#e2e42f"/><stop offset="0.765" stop-color="#f9ed15"/><stop offset="0.794" stop-color="#fcec0a"/><stop offset="0.824" stop-color="#feec06"/><stop offset="0.853" stop-color="#ffeb03"/><stop offset="0.882" stop-color="#fee004"/><stop offset="0.912" stop-color="#fdd605"/><stop offset="0.941" stop-color="#fccc07"/><stop offset="0.971" stop-color="#fcc308"/><stop offset="1" stop-color="#fbbb0a"/></linearGradient><linearGradient id="g62" gradientUnits="userSpaceOnUse" x1="802" x2="1008"><stop offset="0" stop-color="#00a669"/><stop offset="0.0286" stop-color="#00a667"/><stop offset="0.0571" stop-color="#00a665"/><stop offset="0.0857" stop-color="#00a664"/><stop offset="0.114" stop-color="#00a662"/><stop offset="0.143" stop-color="#00a660"/><stop offset="0.171" stop-color="#00a55e"/><stop offset="0.2" stop-color="#00a55a"/><stop offset="0.229" stop-color="#00a557"/><stop offset="0.257" stop-color="#00a454"/><stop offset="0.286" stop-color="#00a450"/><stop offset="0.314" stop-color="#00a44c"/><stop offset="0.343" stop-color="#00a348"/><stop offset="0.371" stop-color="#00a244"/><stop offset="0.4" stop-color="#01a241"/><stop offset="0.429" stop-color="#01a13f"/><stop offset="0.457" stop-color="#00a03e"/><stop offset="0.486" stop-color="#00a03e"/><stop offset="0.514" stop-color="#00a03e"/><stop offset="0.543" stop-color="#00a03e"/><stop offset="0.571" stop-color="#00a03e"/><stop offset="0.6" stop-color="#1ea93c"/><stop offset="0.629" stop-color="#4eb743"/><stop offset="0.657" stop-color="#88c74c"/><stop offset="0.686" stop-color="#bad74d"/><stop offset="0.714" stop-color="#dce33d"/><stop offset="0.743" stop-color="#f3eb22"/><stop offset="0.771" stop-color="#fbed0e"/><stop offset="0.8" stop-color="#fdec09"/><stop offset="0.829" stop-color="#ffeb06"/><stop offset="0.857" stop-color="#fee205"/><stop offset="0.886" stop-color="#fdd806"/><stop offset="0.914" stop-color="#fcce07"/><stop offset="0.943" stop-color="#fcc508"/><stop offset="0.971" stop-color="#fbbc0a"/><stop offset="1" stop-color="#fab40c"/></linearGradient><linearGradient id="g63" gradientUnits="userSpaceOnUse" x1="803" x2="1011"><stop offset="0" stop-color="#00a66b"/><stop offset="0.0286" stop-color="#00a669"/><stop offset="0.0571" stop-color="#00a668"/><stop offset="0.0857" stop-color="#00a666"/><stop offset="0.114" stop-color="#00a664"/><stop offset="0.143" stop-color="#00a662"/><stop offset="0.171" stop-color="#00a65f"/><stop offset="0.2" stop-color="#00a55c"/><stop offset="0.229" stop-color="#00a559"/><stop offset="0.257" stop-color="#00a556"/><stop offset="0.286" stop-color="#00a452"/><stop offset="0.314" stop-color="#00a44e"/><stop offset="0.343" stop-color="#00a349"/><stop offset="0.371" stop-color="#00a244"/><stop offset="0.4" stop-color="#01a242"/><stop offset="0.429" stop-color="#01a13f"/><stop offset="0.457" stop-color="#00a03e"/><stop offset="0.486" stop-color="#00a03e"/><stop offset="0.514" stop-color="#00a03e"/><stop offset="0.543" stop-color="#00a03e"/><stop offset="0.571" stop-color="#03a13e"/><stop offset="0.6" stop-color="#34b043"/><stop offset="0.629" stop-color="#72c24e"/><stop offset="0.657" stop-color="#a5d156"/><stop offset="0.686" stop-color="#d2e04e"/><stop offset="0.714" stop-color="#eae833"/><stop offset="0.743" stop-color="#fbed18"/><stop offset="0.771" stop-color="#fdec0d"/><stop offset="0.8" stop-color="#feec09"/><stop offset="0.829" stop-color="#fee507"/><stop offset="0.857" stop-color="#fdda08"/><stop offset="0.886" stop-color="#fdcf08"/><stop offset="0.914" stop-color="#fcc509"/><stop offset="0.943" stop-color="#fbbc0a"/><stop offset="0.971" stop-color="#fab30c"/><stop offset="1" stop-color="#faae0d"/></linearGradient><linearGradient id="g64" gradientUnits="userSpaceOnUse" x1="803" x2="1013"><stop offset="0" stop-color="#00a76d"/><stop offset="0.0286" stop-color="#00a76c"/><stop offset="0.0571" stop-color="#00a66a"/><stop offset="0.0857" stop-color="#00a668"/><stop offset="0.114" stop-color="#00a666"/><stop offset="0.143" stop-color="#00a664"/><stop offset="0.171" stop-color="#00a662"/><stop offset="0.2" stop-color="#00a65f"/><stop offset="0.229" stop-color="#00a55c"/><stop offset="0.257" stop-color="#00a559"/><stop offset="0.286" stop-color="#00a555"/><stop offset="0.314" stop-color="#00a451"/><stop offset="0.343" stop-color="#00a44c"/><stop offset="0.371" stop-color="#00a347"/><stop offset="0.4" stop-color="#01a243"/><stop offset="0.429" stop-color="#01a140"/><stop offset="0.457" stop-color="#00a03e"/><stop offset="0.486" stop-color="#00a03e"/><stop offset="0.514" stop-color="#00a03e"/><stop offset="0.543" stop-color="#00a03e"/><stop offset="0.571" stop-color="#0fa541"/><stop offset="0.6" stop-color="#47b74c"/><stop offset="0.629" stop-color="#89c959"/><stop offset="0.657" stop-color="#bbd95e"/><stop offset="0.686" stop-color="#dee44c"/><stop offset="0.714" stop-color="#f5ec2c"/><stop offset="0.743" stop-color="#fced14"/><stop offset="0.771" stop-color="#feec0e"/><stop offset="0.8" stop-color="#ffea0a"/><stop offset="0.829" stop-color="#fede0a"/><stop offset="0.857" stop-color="#fdd30a"/><stop offset="0.886" stop-color="#fcc80a"/><stop offset="0.914" stop-color="#fbbe0b"/><stop offset="0.943" stop-color="#fab40c"/><stop offset="0.971" stop-color="#faaf0d"/><stop offset="1" stop-color="#f9aa0e"/></linearGradient><linearGradient id="g65" gradientUnits="userSpaceOnUse" x1="803" x2="1015"><stop offset="0" stop-color="#00a770"/><stop offset="0.0278" stop-color="#00a76e"/><stop offset="0.0556" stop-color="#00a76c"/><stop offset="0.0833" stop-color="#00a66b"/><stop offset="0.111" stop-color="#00a669"/><stop offset="0.139" stop-color="#00a667"/><stop offset="0.167" stop-color="#00a665"/><stop offset="0.194" stop-color="#00a663"/><stop offset="0.222" stop-color="#00a660"/><stop offset="0.25" stop-color="#00a55d"/><stop offset="0.278" stop-color="#00a559"/><stop offset="0.306" stop-color="#00a555"/><stop offset="0.333" stop-color="#00a450"/><stop offset="0.361" stop-color="#00a34b"/><stop offset="0.389" stop-color="#00a345"/><stop offset="0.417" stop-color="#01a242"/><stop offset="0.444" stop-color="#01a13f"/><stop offset="0.472" stop-color="#00a03e"/><stop offset="0.5" stop-color="#00a03e"/><stop offset="0.528" stop-color="#00a03e"/><stop offset="0.556" stop-color="#05a242"/><stop offset="0.583" stop-color="#3ab34e"/><stop offset="0.611" stop-color="#7bc75d"/><stop offset="0.639" stop-color="#afd667"/><stop offset="0.667" stop-color="#d9e35c"/><stop offset="0.694" stop-color="#efeb3b"/><stop offset="0.722" stop-color="#fcee1e"/><stop offset="0.75" stop-color="#fded12"/><stop offset="0.778" stop-color="#ffec0e"/><stop offset="0.806" stop-color="#fee00d"/><stop offset="0.833" stop-color="#fdd50c"/><stop offset="0.861" stop-color="#fcca0c"/><stop offset="0.889" stop-color="#fbbf0c"/><stop offset="0.917" stop-color="#fab50d"/><stop offset="0.944" stop-color="#faaf0d"/><stop offset="0.972" stop-color="#f9aa0e"/><stop offset="1" stop-color="#f8a60f"/></linearGradient><linearGradient id="g66" gradientUnits="userSpaceOnUse" x1="803" x2="1017"><stop offset="0" stop-color="#00a772"/><stop offset="0.0278" stop-color="#00a770"/><stop offset="0.0556" stop-color="#00a76f"/><stop offset="0.0833" stop-color="#00a76d"/><stop offset="0.111" stop-color="#00a76c"/><stop offset="0.139" stop-color="#00a66a"/><stop offset="0.167" stop-color="#00a668"/><stop offset="0.194" stop-color="#00a666"/><stop offset="0.222" stop-color="#00a663"/><stop offset="0.25" stop-color="#00a660"/><stop offset="0.278" stop-color="#00a55d"/><stop offset="0.306" stop-color="#00a558"/><stop offset="0.333" stop-color="#00a454"/><stop offset="0.361" stop-color="#00a44e"/><stop offset="0.389" stop-color="#00a348"/><stop offset="0.417" stop-color="#01a243"/><stop offset="0.444" stop-color="#01a13f"/><stop offset="0.472" stop-color="#00a03e"/><stop offset="0.5" stop-color="#00a03e"/><stop offset="0.528" stop-color="#01a03e"/><stop offset="0.556" stop-color="#10a64a"/><stop offset="0.583" stop-color="#51bb5a"/><stop offset="0.611" stop-color="#93ce6a"/><stop offset="0.639" stop-color="#c4de71"/><stop offset="0.667" stop-color="#e3e858"/><stop offset="0.694" stop-color="#faef32"/><stop offset="0.722" stop-color="#fced19"/><stop offset="0.75" stop-color="#feed14"/><stop offset="0.778" stop-color="#fee511"/><stop offset="0.806" stop-color="#fdd910"/><stop offset="0.833" stop-color="#fccd0f"/><stop offset="0.861" stop-color="#fbc20e"/><stop offset="0.889" stop-color="#fab70e"/><stop offset="0.917" stop-color="#fab00e"/><stop offset="0.944" stop-color="#f9ab0e"/><stop offset="0.972" stop-color="#f8a60f"/><stop offset="1" stop-color="#f8a210"/></linearGradient><linearGradient id="g67" gradientUnits="userSpaceOnUse" x1="804" x2="1020"><stop offset="0" stop-color="#00a774"/><stop offset="0.0278" stop-color="#00a773"/><stop offset="0.0556" stop-color="#00a771"/><stop offset="0.0833" stop-color="#00a770"/><stop offset="0.111" stop-color="#00a76e"/><stop offset="0.139" stop-color="#00a76c"/><stop offset="0.167" stop-color="#00a66a"/><stop offset="0.194" stop-color="#00a668"/><stop offset="0.222" stop-color="#00a666"/><stop offset="0.25" stop-color="#00a663"/><stop offset="0.278" stop-color="#00a660"/><stop offset="0.306" stop-color="#00a55b"/><stop offset="0.333" stop-color="#00a556"/><stop offset="0.361" stop-color="#00a450"/><stop offset="0.389" stop-color="#00a34a"/><stop offset="0.417" stop-color="#00a243"/><stop offset="0.444" stop-color="#01a13f"/><stop offset="0.472" stop-color="#00a03e"/><stop offset="0.5" stop-color="#00a03e"/><stop offset="0.528" stop-color="#09a445"/><stop offset="0.556" stop-color="#30b157"/><stop offset="0.583" stop-color="#75c76b"/><stop offset="0.611" stop-color="#afd87a"/><stop offset="0.639" stop-color="#dae56e"/><stop offset="0.667" stop-color="#f1ed49"/><stop offset="0.694" stop-color="#fcee27"/><stop offset="0.722" stop-color="#feed1a"/><stop offset="0.75" stop-color="#ffe815"/><stop offset="0.778" stop-color="#fedc14"/><stop offset="0.806" stop-color="#fccf12"/><stop offset="0.833" stop-color="#fbc311"/><stop offset="0.861" stop-color="#fab810"/><stop offset="0.889" stop-color="#fab010"/><stop offset="0.917" stop-color="#f9ab0f"/><stop offset="0.944" stop-color="#f8a610"/><stop offset="0.972" stop-color="#f8a110"/><stop offset="1" stop-color="#f79d11"/></linearGradient><linearGradient id="g68" gradientUnits="userSpaceOnUse" x1="804" x2="1022"><stop offset="0" stop-color="#00a776"/><stop offset="0.027" stop-color="#00a775"/><stop offset="0.0541" stop-color="#00a774"/><stop offset="0.0811" stop-color="#00a772"/><stop offset="0.108" stop-color="#00a771"/><stop offset="0.135" stop-color="#00a76f"/><stop offset="0.162" stop-color="#00a76d"/><stop offset="0.189" stop-color="#00a66b"/><stop offset="0.216" stop-color="#00a669"/><stop offset="0.243" stop-color="#00a667"/><stop offset="0.27" stop-color="#00a664"/><stop offset="0.297" stop-color="#00a660"/><stop offset="0.324" stop-color="#00a55c"/><stop offset="0.351" stop-color="#00a556"/><stop offset="0.378" stop-color="#00a450"/><stop offset="0.405" stop-color="#00a348"/><stop offset="0.432" stop-color="#01a242"/><stop offset="0.459" stop-color="#00a03e"/><stop offset="0.486" stop-color="#00a03e"/><stop offset="0.514" stop-color="#09a345"/><stop offset="0.541" stop-color="#24ad59"/><stop offset="0.568" stop-color="#68c46e"/><stop offset="0.595" stop-color="#a7d680"/><stop offset="0.622" stop-color="#d3e47d"/><stop offset="0.649" stop-color="#ecec5b"/><stop offset="0.676" stop-color="#fcf035"/><stop offset="0.703" stop-color="#fdee20"/><stop offset="0.73" stop-color="#ffeb1a"/><stop offset="0.757" stop-color="#fede18"/><stop offset="0.784" stop-color="#fdd116"/><stop offset="0.811" stop-color="#fcc515"/><stop offset="0.838" stop-color="#fbb913"/><stop offset="0.865" stop-color="#fab112"/><stop offset="0.892" stop-color="#f9ab11"/><stop offset="0.919" stop-color="#f8a611"/><stop offset="0.946" stop-color="#f8a111"/><stop offset="0.973" stop-color="#f79d12"/><stop offset="1" stop-color="#f79913"/></linearGradient><linearGradient id="g69" gradientUnits="userSpaceOnUse" x1="805" x2="1024"><stop offset="0" stop-color="#00a778"/><stop offset="0.027" stop-color="#00a777"/><stop offset="0.0541" stop-color="#00a776"/><stop offset="0.0811" stop-color="#00a774"/><stop offset="0.108" stop-color="#00a773"/><stop offset="0.135" stop-color="#00a771"/><stop offset="0.162" stop-color="#00a770"/><stop offset="0.189" stop-color="#00a76e"/><stop offset="0.216" stop-color="#00a76c"/><stop offset="0.243" stop-color="#00a66a"/><stop offset="0.27" stop-color="#00a667"/><stop offset="0.297" stop-color="#00a664"/><stop offset="0.324" stop-color="#00a65f"/><stop offset="0.351" stop-color="#00a559"/><stop offset="0.378" stop-color="#00a453"/><stop offset="0.405" stop-color="#00a34a"/><stop offset="0.432" stop-color="#00a243"/><stop offset="0.459" stop-color="#00a03e"/><stop offset="0.486" stop-color="#02a140"/><stop offset="0.514" stop-color="#18a950"/><stop offset="0.541" stop-color="#3eb769"/><stop offset="0.568" stop-color="#87ce7e"/><stop offset="0.595" stop-color="#bfdf8d"/><stop offset="0.622" stop-color="#e2e978"/><stop offset="0.649" stop-color="#f8f04f"/><stop offset="0.676" stop-color="#fdef2b"/><stop offset="0.703" stop-color="#ffee22"/><stop offset="0.73" stop-color="#fee31e"/><stop offset="0.757" stop-color="#fdd61c"/><stop offset="0.784" stop-color="#fcc819"/><stop offset="0.811" stop-color="#fbbc17"/><stop offset="0.838" stop-color="#fab215"/><stop offset="0.865" stop-color="#f9ac14"/><stop offset="0.892" stop-color="#f8a612"/><stop offset="0.919" stop-color="#f8a112"/><stop offset="0.946" stop-color="#f79d12"/><stop offset="0.973" stop-color="#f79913"/><stop offset="1" stop-color="#f69514"/></linearGradient><linearGradient id="g70" gradientUnits="userSpaceOnUse" x1="805" x2="1027"><stop offset="0" stop-color="#00a87b"/><stop offset="0.027" stop-color="#00a779"/><stop offset="0.0541" stop-color="#00a778"/><stop offset="0.0811" stop-color="#00a777"/><stop offset="0.108" stop-color="#00a776"/><stop offset="0.135" stop-color="#00a774"/><stop offset="0.162" stop-color="#00a772"/><stop offset="0.189" stop-color="#00a771"/><stop offset="0.216" stop-color="#00a76f"/><stop offset="0.243" stop-color="#00a76d"/><stop offset="0.27" stop-color="#00a66a"/><stop offset="0.297" stop-color="#00a667"/><stop offset="0.324" stop-color="#00a663"/><stop offset="0.351" stop-color="#00a55d"/><stop offset="0.378" stop-color="#00a556"/><stop offset="0.405" stop-color="#00a44d"/><stop offset="0.432" stop-color="#00a244"/><stop offset="0.459" stop-color="#01a13f"/><stop offset="0.486" stop-color="#0ca547"/><stop offset="0.514" stop-color="#2cb05f"/><stop offset="0.541" stop-color="#61c37a"/><stop offset="0.568" stop-color="#a8d98e"/><stop offset="0.595" stop-color="#d4e690"/><stop offset="0.622" stop-color="#edee6d"/><stop offset="0.649" stop-color="#fcf142"/><stop offset="0.676" stop-color="#feee2a"/><stop offset="0.703" stop-color="#fee725"/><stop offset="0.73" stop-color="#fdd922"/><stop offset="0.757" stop-color="#fccb1f"/><stop offset="0.784" stop-color="#fbbe1c"/><stop offset="0.811" stop-color="#fab419"/><stop offset="0.838" stop-color="#f9ad17"/><stop offset="0.865" stop-color="#f8a715"/><stop offset="0.892" stop-color="#f8a114"/><stop offset="0.919" stop-color="#f79c13"/><stop offset="0.946" stop-color="#f79713"/><stop offset="0.973" stop-color="#f69414"/><stop offset="1" stop-color="#f69015"/></linearGradient><linearGradient id="g71" gradientUnits="userSpaceOnUse" x1="805" x2="1029"><stop offset="0" stop-color="#00a87d"/><stop offset="0.0263" stop-color="#00a87c"/><stop offset="0.0526" stop-color="#00a87b"/><stop offset="0.0789" stop-color="#00a77a"/><stop offset="0.105" stop-color="#00a778"/><stop offset="0.132" stop-color="#00a777"/><stop offset="0.158" stop-color="#00a776"/><stop offset="0.184" stop-color="#00a774"/><stop offset="0.211" stop-color="#00a772"/><stop offset="0.237" stop-color="#00a770"/><stop offset="0.263" stop-color="#00a76e"/><stop offset="0.289" stop-color="#00a76c"/><stop offset="0.316" stop-color="#00a669"/><stop offset="0.342" stop-color="#00a664"/><stop offset="0.368" stop-color="#00a55d"/><stop offset="0.395" stop-color="#00a555"/><stop offset="0.421" stop-color="#00a34b"/><stop offset="0.447" stop-color="#01a242"/><stop offset="0.474" stop-color="#0ca447"/><stop offset="0.5" stop-color="#2cb05f"/><stop offset="0.526" stop-color="#52bf7c"/><stop offset="0.553" stop-color="#9cd693"/><stop offset="0.579" stop-color="#cee69e"/><stop offset="0.605" stop-color="#eaed7f"/><stop offset="0.632" stop-color="#fcf252"/><stop offset="0.658" stop-color="#feef32"/><stop offset="0.684" stop-color="#ffe92c"/><stop offset="0.711" stop-color="#fddb28"/><stop offset="0.737" stop-color="#fccd25"/><stop offset="0.763" stop-color="#fbc021"/><stop offset="0.789" stop-color="#fab51e"/><stop offset="0.816" stop-color="#f9ae1b"/><stop offset="0.842" stop-color="#f8a718"/><stop offset="0.868" stop-color="#f8a116"/><stop offset="0.895" stop-color="#f79c15"/><stop offset="0.921" stop-color="#f69714"/><stop offset="0.947" stop-color="#f69314"/><stop offset="0.974" stop-color="#f58f15"/><stop offset="1" stop-color="#f58c16"/></linearGradient><linearGradient id="g72" gradientUnits="userSpaceOnUse" x1="806" x2="1031"><stop offset="0" stop-color="#00a87f"/><stop offset="0.0263" stop-color="#00a87e"/><stop offset="0.0526" stop-color="#00a87d"/><stop offset="0.0789" stop-color="#00a87c"/><stop offset="0.105" stop-color="#00a87b"/><stop offset="0.132" stop-color="#00a779"/><stop offset="0.158" stop-color="#00a778"/><stop offset="0.184" stop-color="#00a777"/><stop offset="0.211" stop-color="#00a775"/><stop offset="0.237" stop-color="#00a773"/><stop offset="0.263" stop-color="#00a771"/><stop offset="0.289" stop-color="#00a76f"/><stop offset="0.316" stop-color="#00a76c"/><stop offset="0.342" stop-color="#00a668"/><stop offset="0.368" stop-color="#00a662"/><stop offset="0.395" stop-color="#00a559"/><stop offset="0.421" stop-color="#00a44e"/><stop offset="0.447" stop-color="#03a345"/><stop offset="0.474" stop-color="#1caa53"/><stop offset="0.5" stop-color="#43b971"/><stop offset="0.526" stop-color="#74cb8e"/><stop offset="0.553" stop-color="#bae0a3"/><stop offset="0.579" stop-color="#deeb9b"/><stop offset="0.605" stop-color="#f5f172"/><stop offset="0.632" stop-color="#fdf148"/><stop offset="0.658" stop-color="#ffef35"/><stop offset="0.684" stop-color="#fee130"/><stop offset="0.711" stop-color="#fdd22c"/><stop offset="0.737" stop-color="#fbc428"/><stop offset="0.763" stop-color="#fab824"/><stop offset="0.789" stop-color="#f9b020"/><stop offset="0.816" stop-color="#f9a91c"/><stop offset="0.842" stop-color="#f8a219"/><stop offset="0.868" stop-color="#f79c17"/><stop offset="0.895" stop-color="#f69716"/><stop offset="0.921" stop-color="#f69215"/><stop offset="0.947" stop-color="#f58e16"/><stop offset="0.974" stop-color="#f58b16"/><stop offset="1" stop-color="#f58916"/></linearGradient><linearGradient id="g73" gradientUnits="userSpaceOnUse" x1="806" x2="1034"><stop offset="0" stop-color="#00a881"/><stop offset="0.0263" stop-color="#00a880"/><stop offset="0.0526" stop-color="#00a880"/><stop offset="0.0789" stop-color="#00a87e"/><stop offset="0.105" stop-color="#00a87d"/><stop offset="0.132" stop-color="#00a87c"/><stop offset="0.158" stop-color="#00a87b"/><stop offset="0.184" stop-color="#00a779"/><stop offset="0.211" stop-color="#00a778"/><stop offset="0.237" stop-color="#00a776"/><stop offset="0.263" stop-color="#00a774"/><stop offset="0.289" stop-color="#00a772"/><stop offset="0.316" stop-color="#00a770"/><stop offset="0.342" stop-color="#00a76c"/><stop offset="0.368" stop-color="#00a666"/><stop offset="0.395" stop-color="#00a55e"/><stop offset="0.421" stop-color="#00a452"/><stop offset="0.447" stop-color="#0da74d"/><stop offset="0.474" stop-color="#31b263"/><stop offset="0.5" stop-color="#5cc284"/><stop offset="0.526" stop-color="#97d7a0"/><stop offset="0.553" stop-color="#cee7b1"/><stop offset="0.579" stop-color="#ebef93"/><stop offset="0.605" stop-color="#fcf364"/><stop offset="0.632" stop-color="#fef040"/><stop offset="0.658" stop-color="#fee639"/><stop offset="0.684" stop-color="#fdd735"/><stop offset="0.711" stop-color="#fcc830"/><stop offset="0.737" stop-color="#faba2b"/><stop offset="0.763" stop-color="#f9b226"/><stop offset="0.789" stop-color="#f9aa21"/><stop offset="0.816" stop-color="#f8a31d"/><stop offset="0.842" stop-color="#f79c1a"/><stop offset="0.868" stop-color="#f69618"/><stop offset="0.895" stop-color="#f69117"/><stop offset="0.921" stop-color="#f58c17"/><stop offset="0.947" stop-color="#f58a16"/><stop offset="0.974" stop-color="#f48716"/><stop offset="1" stop-color="#f48516"/></linearGradient><linearGradient id="g74" gradientUnits="userSpaceOnUse" x1="806" x2="1036"><stop offset="0" stop-color="#00a884"/><stop offset="0.0256" stop-color="#00a883"/><stop offset="0.0513" stop-color="#00a882"/><stop offset="0.0769" stop-color="#00a881"/><stop offset="0.103" stop-color="#00a880"/><stop offset="0.128" stop-color="#00a87f"/><stop offset="0.154" stop-color="#00a87e"/><stop offset="0.179" stop-color="#00a87d"/><stop offset="0.205" stop-color="#00a87b"/><stop offset="0.231" stop-color="#00a77a"/><stop offset="0.256" stop-color="#00a778"/><stop offset="0.282" stop-color="#00a776"/><stop offset="0.308" stop-color="#00a774"/><stop offset="0.333" stop-color="#00a772"/><stop offset="0.359" stop-color="#00a76d"/><stop offset="0.385" stop-color="#00a667"/><stop offset="0.41" stop-color="#00a55c"/><stop offset="0.436" stop-color="#0ca856"/><stop offset="0.462" stop-color="#31b364"/><stop offset="0.487" stop-color="#5cc284"/><stop offset="0.513" stop-color="#89d3a3"/><stop offset="0.538" stop-color="#cbe7b7"/><stop offset="0.564" stop-color="#e8efa3"/><stop offset="0.59" stop-color="#fcf475"/><stop offset="0.615" stop-color="#fef14b"/><stop offset="0.641" stop-color="#fee842"/><stop offset="0.667" stop-color="#fdd93d"/><stop offset="0.692" stop-color="#fcc937"/><stop offset="0.718" stop-color="#fbbc32"/><stop offset="0.744" stop-color="#fab32c"/><stop offset="0.769" stop-color="#f9ab27"/><stop offset="0.795" stop-color="#f8a322"/><stop offset="0.821" stop-color="#f79c1e"/><stop offset="0.846" stop-color="#f6961b"/><stop offset="0.872" stop-color="#f59019"/><stop offset="0.897" stop-color="#f58c18"/><stop offset="0.923" stop-color="#f48917"/><stop offset="0.949" stop-color="#f48616"/><stop offset="0.974" stop-color="#f48416"/><stop offset="1" stop-color="#f38117"/></linearGradient><linearGradient id="g75" gradientUnits="userSpaceOnUse" x1="807" x2="1038"><stop offset="0" stop-color="#00a886"/><stop offset="0.0256" stop-color="#00a885"/><stop offset="0.0513" stop-color="#00a884"/><stop offset="0.0769" stop-color="#00a883"/><stop offset="0.103" stop-color="#00a883"/><stop offset="0.128" stop-color="#00a882"/><stop offset="0.154" stop-color="#00a881"/><stop offset="0.179" stop-color="#00a87f"/><stop offset="0.205" stop-color="#00a87e"/><stop offset="0.231" stop-color="#00a87d"/><stop offset="0.256" stop-color="#00a87b"/><stop offset="0.282" stop-color="#00a77a"/><stop offset="0.308" stop-color="#00a778"/><stop offset="0.333" stop-color="#00a776"/><stop offset="0.359" stop-color="#00a771"/><stop offset="0.385" stop-color="#00a66b"/><stop offset="0.41" stop-color="#02a763"/><stop offset="0.436" stop-color="#1dae65"/><stop offset="0.462" stop-color="#49bc76"/><stop offset="0.487" stop-color="#77cc98"/><stop offset="0.513" stop-color="#abdfb4"/><stop offset="0.538" stop-color="#d9ecbb"/><stop offset="0.564" stop-color="#f2f298"/><stop offset="0.59" stop-color="#fdf46a"/><stop offset="0.615" stop-color="#ffef4d"/><stop offset="0.641" stop-color="#fedf47"/><stop offset="0.667" stop-color="#fccf41"/><stop offset="0.692" stop-color="#fbc03b"/><stop offset="0.718" stop-color="#fab734"/><stop offset="0.744" stop-color="#f9ae2e"/><stop offset="0.769" stop-color="#f8a528"/><stop offset="0.795" stop-color="#f79e24"/><stop offset="0.821" stop-color="#f69720"/><stop offset="0.846" stop-color="#f5901d"/><stop offset="0.872" stop-color="#f58c1a"/><stop offset="0.897" stop-color="#f48818"/><stop offset="0.923" stop-color="#f48517"/><stop offset="0.949" stop-color="#f48217"/><stop offset="0.974" stop-color="#f38017"/><stop offset="1" stop-color="#f37e17"/></linearGradient><linearGradient id="g76" gradientUnits="userSpaceOnUse" x1="807" x2="1040"><stop offset="0" stop-color="#00a888"/><stop offset="0.0256" stop-color="#00a887"/><stop offset="0.0513" stop-color="#00a886"/><stop offset="0.0769" stop-color="#00a886"/><stop offset="0.103" stop-color="#00a885"/><stop offset="0.128" stop-color="#00a884"/><stop offset="0.154" stop-color="#00a883"/><stop offset="0.179" stop-color="#00a882"/><stop offset="0.205" stop-color="#00a881"/><stop offset="0.231" stop-color="#00a880"/><stop offset="0.256" stop-color="#00a87f"/><stop offset="0.282" stop-color="#00a87d"/><stop offset="0.308" stop-color="#00a87b"/><stop offset="0.333" stop-color="#00a77a"/><stop offset="0.359" stop-color="#00a776"/><stop offset="0.385" stop-color="#00a771"/><stop offset="0.41" stop-color="#0aaa6d"/><stop offset="0.436" stop-color="#2eb575"/><stop offset="0.462" stop-color="#5ec487"/><stop offset="0.487" stop-color="#8dd4a8"/><stop offset="0.513" stop-color="#c3e7c2"/><stop offset="0.538" stop-color="#e4f0b9"/><stop offset="0.564" stop-color="#fbf68d"/><stop offset="0.59" stop-color="#fef361"/><stop offset="0.615" stop-color="#fee753"/><stop offset="0.641" stop-color="#fdd64d"/><stop offset="0.667" stop-color="#fbc646"/><stop offset="0.692" stop-color="#fabb3e"/><stop offset="0.718" stop-color="#f9b137"/><stop offset="0.744" stop-color="#f8a830"/><stop offset="0.769" stop-color="#f7a02a"/><stop offset="0.795" stop-color="#f69825"/><stop offset="0.821" stop-color="#f59121"/><stop offset="0.846" stop-color="#f58c1d"/><stop offset="0.872" stop-color="#f4881a"/><stop offset="0.897" stop-color="#f48418"/><stop offset="0.923" stop-color="#f38117"/><stop offset="0.949" stop-color="#f37e17"/><stop offset="0.974" stop-color="#f37c17"/><stop offset="1" stop-color="#f27a17"/></linearGradient><linearGradient id="g77" gradientUnits="userSpaceOnUse" x1="808" x2="1042"><stop offset="0" stop-color="#00a88a"/><stop offset="0.0256" stop-color="#00a889"/><stop offset="0.0513" stop-color="#00a889"/><stop offset="0.0769" stop-color="#00a888"/><stop offset="0.103" stop-color="#00a887"/><stop offset="0.128" stop-color="#00a887"/><stop offset="0.154" stop-color="#00a886"/><stop offset="0.179" stop-color="#00a885"/><stop offset="0.205" stop-color="#00a884"/><stop offset="0.231" stop-color="#00a883"/><stop offset="0.256" stop-color="#00a882"/><stop offset="0.282" stop-color="#00a880"/><stop offset="0.308" stop-color="#00a87f"/><stop offset="0.333" stop-color="#00a87d"/><stop offset="0.359" stop-color="#00a87b"/><stop offset="0.385" stop-color="#01a776"/><stop offset="0.41" stop-color="#19af7b"/><stop offset="0.436" stop-color="#46be88"/><stop offset="0.462" stop-color="#79ce9b"/><stop offset="0.487" stop-color="#a5debb"/><stop offset="0.513" stop-color="#d9eecc"/><stop offset="0.538" stop-color="#f0f3b1"/><stop offset="0.564" stop-color="#fef583"/><stop offset="0.59" stop-color="#ffee60"/><stop offset="0.615" stop-color="#fddd59"/><stop offset="0.641" stop-color="#fccc51"/><stop offset="0.667" stop-color="#fbbf49"/><stop offset="0.692" stop-color="#f9b540"/><stop offset="0.718" stop-color="#f8ab39"/><stop offset="0.744" stop-color="#f7a231"/><stop offset="0.769" stop-color="#f69a2b"/><stop offset="0.795" stop-color="#f59226"/><stop offset="0.821" stop-color="#f58d21"/><stop offset="0.846" stop-color="#f4871d"/><stop offset="0.872" stop-color="#f4831a"/><stop offset="0.897" stop-color="#f38018"/><stop offset="0.923" stop-color="#f37d17"/><stop offset="0.949" stop-color="#f27a17"/><stop offset="0.974" stop-color="#f27817"/><stop offset="1" stop-color="#f27717"/></linearGradient><linearGradient id="g78" gradientUnits="userSpaceOnUse" x1="808" x2="1045"><stop offset="0" stop-color="#00a88c"/><stop offset="0.025" stop-color="#00a88c"/><stop offset="0.05" stop-color="#00a88b"/><stop offset="0.075" stop-color="#00a88a"/><stop offset="0.1" stop-color="#00a88a"/><stop offset="0.125" stop-color="#00a889"/><stop offset="0.15" stop-color="#00a889"/><stop offset="0.175" stop-color="#00a888"/><stop offset="0.2" stop-color="#00a887"/><stop offset="0.225" stop-color="#00a886"/><stop offset="0.25" stop-color="#00a885"/><stop offset="0.275" stop-color="#00a884"/><stop offset="0.3" stop-color="#00a883"/><stop offset="0.325" stop-color="#00a882"/><stop offset="0.35" stop-color="#00a880"/><stop offset="0.375" stop-color="#01a87d"/><stop offset="0.4" stop-color="#1ab084"/><stop offset="0.425" stop-color="#48bf94"/><stop offset="0.45" stop-color="#7cd0a5"/><stop offset="0.475" stop-color="#aadfbe"/><stop offset="0.5" stop-color="#d7efd3"/><stop offset="0.525" stop-color="#f0f4bc"/><stop offset="0.55" stop-color="#fef690"/><stop offset="0.575" stop-color="#ffee6b"/><stop offset="0.6" stop-color="#fddd63"/><stop offset="0.625" stop-color="#fccb5a"/><stop offset="0.65" stop-color="#fac051"/><stop offset="0.675" stop-color="#f9b548"/><stop offset="0.7" stop-color="#f8ab3f"/><stop offset="0.725" stop-color="#f7a237"/><stop offset="0.75" stop-color="#f69931"/><stop offset="0.775" stop-color="#f5922a"/><stop offset="0.8" stop-color="#f58c24"/><stop offset="0.825" stop-color="#f4861f"/><stop offset="0.85" stop-color="#f3821c"/><stop offset="0.875" stop-color="#f37e19"/><stop offset="0.9" stop-color="#f27a18"/><stop offset="0.925" stop-color="#f27817"/><stop offset="0.95" stop-color="#f27617"/><stop offset="0.975" stop-color="#f27417"/><stop offset="1" stop-color="#f17217"/></linearGradient><linearGradient id="g79" gradientUnits="userSpaceOnUse" x1="808" x2="1047"><stop offset="0" stop-color="#00a88e"/><stop offset="0.025" stop-color="#00a88e"/><stop offset="0.05" stop-color="#00a88d"/><stop offset="0.075" stop-color="#00a88d"/><stop offset="0.1" stop-color="#00a88c"/><stop offset="0.125" stop-color="#00a88c"/><stop offset="0.15" stop-color="#00a88b"/><stop offset="0.175" stop-color="#00a88b"/><stop offset="0.2" stop-color="#00a88a"/><stop offset="0.225" stop-color="#00a889"/><stop offset="0.25" stop-color="#00a888"/><stop offset="0.275" stop-color="#00a887"/><stop offset="0.3" stop-color="#00a886"/><stop offset="0.325" stop-color="#00a885"/><stop offset="0.35" stop-color="#00a884"/><stop offset="0.375" stop-color="#07aa85"/><stop offset="0.4" stop-color="#2ab692"/><stop offset="0.425" stop-color="#5dc7a5"/><stop offset="0.45" stop-color="#91d8b6"/><stop offset="0.475" stop-color="#bde6cd"/><stop offset="0.5" stop-color="#e0f1d4"/><stop offset="0.525" stop-color="#f8f7b5"/><stop offset="0.55" stop-color="#fff689"/><stop offset="0.575" stop-color="#fee672"/><stop offset="0.6" stop-color="#fcd369"/><stop offset="0.625" stop-color="#fbc65e"/><stop offset="0.65" stop-color="#faba54"/><stop offset="0.675" stop-color="#f8af4a"/><stop offset="0.7" stop-color="#f7a541"/><stop offset="0.725" stop-color="#f69c39"/><stop offset="0.75" stop-color="#f59431"/><stop offset="0.775" stop-color="#f58d2a"/><stop offset="0.8" stop-color="#f48724"/><stop offset="0.825" stop-color="#f3811f"/><stop offset="0.85" stop-color="#f37d1c"/><stop offset="0.875" stop-color="#f27919"/><stop offset="0.9" stop-color="#f27618"/><stop offset="0.925" stop-color="#f27417"/><stop offset="0.95" stop-color="#f17218"/><stop offset="0.975" stop-color="#f17018"/><stop offset="1" stop-color="#f16e18"/></linearGradient><linearGradient id="g80" gradientUnits="userSpaceOnUse" x1="808" x2="1049"><stop offset="0" stop-color="#00a990"/><stop offset="0.0244" stop-color="#00a990"/><stop offset="0.0488" stop-color="#00a890"/><stop offset="0.0732" stop-color="#00a88f"/><stop offset="0.0976" stop-color="#00a88f"/><stop offset="0.122" stop-color="#00a88f"/><stop offset="0.146" stop-color="#00a88e"/><stop offset="0.171" stop-color="#00a88e"/><stop offset="0.195" stop-color="#00a88d"/><stop offset="0.22" stop-color="#00a88c"/><stop offset="0.244" stop-color="#00a88c"/><stop offset="0.268" stop-color="#00a88b"/><stop offset="0.293" stop-color="#00a88a"/><stop offset="0.317" stop-color="#00a889"/><stop offset="0.341" stop-color="#00a888"/><stop offset="0.366" stop-color="#06aa8a"/><stop offset="0.39" stop-color="#29b698"/><stop offset="0.415" stop-color="#5cc7ac"/><stop offset="0.439" stop-color="#91d9c0"/><stop offset="0.463" stop-color="#bee7ce"/><stop offset="0.488" stop-color="#ddf1db"/><stop offset="0.512" stop-color="#f6f7c4"/><stop offset="0.537" stop-color="#fff79a"/><stop offset="0.561" stop-color="#fee77e"/><stop offset="0.585" stop-color="#fcd474"/><stop offset="0.61" stop-color="#fbc869"/><stop offset="0.634" stop-color="#fabc5e"/><stop offset="0.659" stop-color="#f8b153"/><stop offset="0.683" stop-color="#f7a649"/><stop offset="0.707" stop-color="#f69d3f"/><stop offset="0.732" stop-color="#f59536"/><stop offset="0.756" stop-color="#f48d2f"/><stop offset="0.78" stop-color="#f48628"/><stop offset="0.805" stop-color="#f38022"/><stop offset="0.829" stop-color="#f27b1e"/><stop offset="0.854" stop-color="#f2771b"/><stop offset="0.878" stop-color="#f17419"/><stop offset="0.902" stop-color="#f17118"/><stop offset="0.927" stop-color="#f16f18"/><stop offset="0.951" stop-color="#f16d18"/><stop offset="0.976" stop-color="#f06c18"/><stop offset="1" stop-color="#f06a18"/></linearGradient><linearGradient id="g81" gradientUnits="userSpaceOnUse" x1="809" x2="1051"><stop offset="0" stop-color="#00a993"/><stop offset="0.0244" stop-color="#00a992"/><stop offset="0.0488" stop-color="#00a992"/><stop offset="0.0732" stop-color="#00a992"/><stop offset="0.0976" stop-color="#00a991"/><stop offset="0.122" stop-color="#00a991"/><stop offset="0.146" stop-color="#00a991"/><stop offset="0.171" stop-color="#00a990"/><stop offset="0.195" stop-color="#00a890"/><stop offset="0.22" stop-color="#00a88f"/><stop offset="0.244" stop-color="#00a88f"/><stop offset="0.268" stop-color="#00a88e"/><stop offset="0.293" stop-color="#00a88e"/><stop offset="0.317" stop-color="#00a88d"/><stop offset="0.341" stop-color="#00a88c"/><stop offset="0.366" stop-color="#13af94"/><stop offset="0.39" stop-color="#40bea7"/><stop offset="0.415" stop-color="#76d0bd"/><stop offset="0.439" stop-color="#aae2d0"/><stop offset="0.463" stop-color="#d2eedd"/><stop offset="0.488" stop-color="#e8f4db"/><stop offset="0.512" stop-color="#fefab9"/><stop offset="0.537" stop-color="#fef092"/><stop offset="0.561" stop-color="#fddc84"/><stop offset="0.585" stop-color="#fbce78"/><stop offset="0.61" stop-color="#fac16c"/><stop offset="0.634" stop-color="#f9b560"/><stop offset="0.659" stop-color="#f8aa54"/><stop offset="0.683" stop-color="#f6a049"/><stop offset="0.707" stop-color="#f5973f"/><stop offset="0.732" stop-color="#f58f36"/><stop offset="0.756" stop-color="#f4872e"/><stop offset="0.78" stop-color="#f38027"/><stop offset="0.805" stop-color="#f27b22"/><stop offset="0.829" stop-color="#f2761e"/><stop offset="0.854" stop-color="#f1721b"/><stop offset="0.878" stop-color="#f16e19"/><stop offset="0.902" stop-color="#f06c18"/><stop offset="0.927" stop-color="#f06a18"/><stop offset="0.951" stop-color="#f06918"/><stop offset="0.976" stop-color="#f06718"/><stop offset="1" stop-color="#f06618"/></linearGradient><linearGradient id="g82" gradientUnits="userSpaceOnUse" x1="809" x2="1054"><stop offset="0" stop-color="#00a995"/><stop offset="0.0244" stop-color="#00a995"/><stop offset="0.0488" stop-color="#00a994"/><stop offset="0.0732" stop-color="#00a994"/><stop offset="0.0976" stop-color="#00a994"/><stop offset="0.122" stop-color="#00a994"/><stop offset="0.146" stop-color="#00a993"/><stop offset="0.171" stop-color="#00a993"/><stop offset="0.195" stop-color="#00a993"/><stop offset="0.22" stop-color="#00a992"/><stop offset="0.244" stop-color="#00a992"/><stop offset="0.268" stop-color="#00a992"/><stop offset="0.293" stop-color="#00a991"/><stop offset="0.317" stop-color="#00a991"/><stop offset="0.341" stop-color="#03aa91"/><stop offset="0.366" stop-color="#23b49f"/><stop offset="0.39" stop-color="#56c6b5"/><stop offset="0.415" stop-color="#8fd9cb"/><stop offset="0.439" stop-color="#c0e9de"/><stop offset="0.463" stop-color="#ddf2e5"/><stop offset="0.488" stop-color="#f5f8d7"/><stop offset="0.512" stop-color="#fff9b2"/><stop offset="0.537" stop-color="#fde495"/><stop offset="0.561" stop-color="#fcd488"/><stop offset="0.585" stop-color="#fac77b"/><stop offset="0.61" stop-color="#f9b96d"/><stop offset="0.634" stop-color="#f8ae60"/><stop offset="0.659" stop-color="#f7a353"/><stop offset="0.683" stop-color="#f69947"/><stop offset="0.707" stop-color="#f4903d"/><stop offset="0.732" stop-color="#f48834"/><stop offset="0.756" stop-color="#f3802c"/><stop offset="0.78" stop-color="#f27a26"/><stop offset="0.805" stop-color="#f17421"/><stop offset="0.829" stop-color="#f16f1d"/><stop offset="0.854" stop-color="#f06c1a"/><stop offset="0.878" stop-color="#f06919"/><stop offset="0.902" stop-color="#f06718"/><stop offset="0.927" stop-color="#f06518"/><stop offset="0.951" stop-color="#ef6419"/><stop offset="0.976" stop-color="#ef6219"/><stop offset="1" stop-color="#ef6119"/></linearGradient><linearGradient id="g83" gradientUnits="userSpaceOnUse" x1="809" x2="1056"><stop offset="0" stop-color="#00a997"/><stop offset="0.0238" stop-color="#00a997"/><stop offset="0.0476" stop-color="#00a997"/><stop offset="0.0714" stop-color="#00a997"/><stop offset="0.0952" stop-color="#00a996"/><stop offset="0.119" stop-color="#00a996"/><stop offset="0.143" stop-color="#00a996"/><stop offset="0.167" stop-color="#00a996"/><stop offset="0.19" stop-color="#00a996"/><stop offset="0.214" stop-color="#00a996"/><stop offset="0.238" stop-color="#00a995"/><stop offset="0.262" stop-color="#00a995"/><stop offset="0.286" stop-color="#00a995"/><stop offset="0.31" stop-color="#00a995"/><stop offset="0.333" stop-color="#03aa95"/><stop offset="0.357" stop-color="#22b4a2"/><stop offset="0.381" stop-color="#54c5b7"/><stop offset="0.405" stop-color="#8dd8ce"/><stop offset="0.429" stop-color="#bfe9e2"/><stop offset="0.452" stop-color="#e1f4ec"/><stop offset="0.476" stop-color="#f1f8e1"/><stop offset="0.5" stop-color="#fffac1"/><stop offset="0.524" stop-color="#fde5a3"/><stop offset="0.548" stop-color="#fcd695"/><stop offset="0.571" stop-color="#fac886"/><stop offset="0.595" stop-color="#f9bb77"/><stop offset="0.619" stop-color="#f8af69"/><stop offset="0.643" stop-color="#f7a45b"/><stop offset="0.667" stop-color="#f5994f"/><stop offset="0.69" stop-color="#f48f43"/><stop offset="0.714" stop-color="#f3873a"/><stop offset="0.738" stop-color="#f27f31"/><stop offset="0.762" stop-color="#f2782a"/><stop offset="0.786" stop-color="#f17224"/><stop offset="0.81" stop-color="#f06d20"/><stop offset="0.833" stop-color="#f0681c"/><stop offset="0.857" stop-color="#f0651a"/><stop offset="0.881" stop-color="#ef6319"/><stop offset="0.905" stop-color="#ef6119"/><stop offset="0.929" stop-color="#ef6019"/><stop offset="0.952" stop-color="#ef5f19"/><stop offset="0.976" stop-color="#ef5e19"/><stop offset="1" stop-color="#ef5d19"/></linearGradient><linearGradient id="g84" gradientUnits="userSpaceOnUse" x1="810" x2="1058"><stop offset="0" stop-color="#00a999"/><stop offset="0.0238" stop-color="#00a999"/><stop offset="0.0476" stop-color="#00a999"/><stop offset="0.0714" stop-color="#00a999"/><stop offset="0.0952" stop-color="#00a999"/><stop offset="0.119" stop-color="#00a999"/><stop offset="0.143" stop-color="#00a999"/><stop offset="0.167" stop-color="#00a999"/><stop offset="0.19" stop-color="#00a999"/><stop offset="0.214" stop-color="#00a999"/><stop offset="0.238" stop-color="#00a999"/><stop offset="0.262" stop-color="#00a999"/><stop offset="0.286" stop-color="#00a999"/><stop offset="0.31" stop-color="#00a998"/><stop offset="0.333" stop-color="#0cad9d"/><stop offset="0.357" stop-color="#36bbae"/><stop offset="0.381" stop-color="#6ecec4"/><stop offset="0.405" stop-color="#a6e1db"/><stop offset="0.429" stop-color="#d4f0ec"/><stop offset="0.452" stop-color="#e4f5ec"/><stop offset="0.476" stop-color="#fefcdc"/><stop offset="0.5" stop-color="#fef1be"/><stop offset="0.524" stop-color="#fcdda7"/><stop offset="0.548" stop-color="#fbcf97"/><stop offset="0.571" stop-color="#f9c187"/><stop offset="0.595" stop-color="#f8b476"/><stop offset="0.619" stop-color="#f7a867"/><stop offset="0.643" stop-color="#f59c5a"/><stop offset="0.667" stop-color="#f4914d"/><stop offset="0.69" stop-color="#f38842"/><stop offset="0.714" stop-color="#f27f38"/><stop offset="0.738" stop-color="#f17730"/><stop offset="0.762" stop-color="#f17029"/><stop offset="0.786" stop-color="#f06a24"/><stop offset="0.81" stop-color="#f0661f"/><stop offset="0.833" stop-color="#ef621c"/><stop offset="0.857" stop-color="#ef5f1a"/><stop offset="0.881" stop-color="#ef5d1a"/><stop offset="0.905" stop-color="#ee5c1a"/><stop offset="0.929" stop-color="#ee5b1a"/><stop offset="0.952" stop-color="#ee5a1a"/><stop offset="0.976" stop-color="#ee591a"/><stop offset="1" stop-color="#ee581a"/></linearGradient><linearGradient id="g85" gradientUnits="userSpaceOnUse" x1="810" x2="1061"><stop offset="0" stop-color="#00a99b"/><stop offset="0.0238" stop-color="#00a99b"/><stop offset="0.0476" stop-color="#00a99b"/><stop offset="0.0714" stop-color="#00a99b"/><stop offset="0.0952" stop-color="#00a99c"/><stop offset="0.119" stop-color="#00a99c"/><stop offset="0.143" stop-color="#00a99c"/><stop offset="0.167" stop-color="#00a99c"/><stop offset="0.19" stop-color="#00a99c"/><stop offset="0.214" stop-color="#00a99c"/><stop offset="0.238" stop-color="#00a99c"/><stop offset="0.262" stop-color="#00a99c"/><stop offset="0.286" stop-color="#00a99c"/><stop offset="0.31" stop-color="#00a99d"/><stop offset="0.333" stop-color="#19b1a6"/><stop offset="0.357" stop-color="#4bc2b9"/><stop offset="0.381" stop-color="#85d6d0"/><stop offset="0.405" stop-color="#bbe8e5"/><stop offset="0.429" stop-color="#e4f6f4"/><stop offset="0.452" stop-color="#e8f7ee"/><stop offset="0.476" stop-color="#fffbda"/><stop offset="0.5" stop-color="#fde6bc"/><stop offset="0.524" stop-color="#fbd6aa"/><stop offset="0.548" stop-color="#fac797"/><stop offset="0.571" stop-color="#f8b985"/><stop offset="0.595" stop-color="#f7ab74"/><stop offset="0.619" stop-color="#f59e65"/><stop offset="0.643" stop-color="#f49357"/><stop offset="0.667" stop-color="#f3884b"/><stop offset="0.69" stop-color="#f27e40"/><stop offset="0.714" stop-color="#f17537"/><stop offset="0.738" stop-color="#f06e2f"/><stop offset="0.762" stop-color="#f06828"/><stop offset="0.786" stop-color="#ef6223"/><stop offset="0.81" stop-color="#ef5e1f"/><stop offset="0.833" stop-color="#ee5b1c"/><stop offset="0.857" stop-color="#ee581b"/><stop offset="0.881" stop-color="#ee571a"/><stop offset="0.905" stop-color="#ee561a"/><stop offset="0.929" stop-color="#ee551a"/><stop offset="0.952" stop-color="#ee541a"/><stop offset="0.976" stop-color="#ee531a"/><stop offset="1" stop-color="#ed521b"/></linearGradient><linearGradient id="g86" gradientUnits="userSpaceOnUse" x1="811" x2="1062"><stop offset="0" stop-color="#00a99e"/><stop offset="0.0238" stop-color="#00a99e"/><stop offset="0.0476" stop-color="#00a99e"/><stop offset="0.0714" stop-color="#00a99e"/><stop offset="0.0952" stop-color="#00a99e"/><stop offset="0.119" stop-color="#00a99e"/><stop offset="0.143" stop-color="#00a99f"/><stop offset="0.167" stop-color="#00a99f"/><stop offset="0.19" stop-color="#00a99f"/><stop offset="0.214" stop-color="#00a9a0"/><stop offset="0.238" stop-color="#00a9a0"/><stop offset="0.262" stop-color="#00a9a0"/><stop offset="0.286" stop-color="#00a9a1"/><stop offset="0.31" stop-color="#05aba3"/><stop offset="0.333" stop-color="#29b7b1"/><stop offset="0.357" stop-color="#5fc9c5"/><stop offset="0.381" stop-color="#9adddb"/><stop offset="0.405" stop-color="#cdeeed"/><stop offset="0.429" stop-color="#e8f7f7"/><stop offset="0.452" stop-color="#fafcf2"/><stop offset="0.476" stop-color="#fef3db"/><stop offset="0.5" stop-color="#fcdfc0"/><stop offset="0.524" stop-color="#fbcfab"/><stop offset="0.548" stop-color="#f9c097"/><stop offset="0.571" stop-color="#f7b185"/><stop offset="0.595" stop-color="#f6a374"/><stop offset="0.619" stop-color="#f49664"/><stop offset="0.643" stop-color="#f38a57"/><stop offset="0.667" stop-color="#f27f4a"/><stop offset="0.69" stop-color="#f17540"/><stop offset="0.714" stop-color="#f06d36"/><stop offset="0.738" stop-color="#ef662f"/><stop offset="0.762" stop-color="#ef5f28"/><stop offset="0.786" stop-color="#ee5a23"/><stop offset="0.81" stop-color="#ee561f"/><stop offset="0.833" stop-color="#ee531d"/><stop offset="0.857" stop-color="#ed511b"/><stop offset="0.881" stop-color="#ed501b"/><stop offset="0.905" stop-color="#ed4f1b"/><stop offset="0.929" stop-color="#ed4f1b"/><stop offset="0.952" stop-color="#ed4e1b"/><stop offset="0.976" stop-color="#ed4e1b"/><stop offset="1" stop-color="#ed4d1b"/></linearGradient><linearGradient id="g87" gradientUnits="userSpaceOnUse" x1="811" x2="1065"><stop offset="0" stop-color="#00a9a1"/><stop offset="0.0233" stop-color="#00a9a1"/><stop offset="0.0465" stop-color="#00a9a1"/><stop offset="0.0698" stop-color="#00a9a1"/><stop offset="0.093" stop-color="#00a9a2"/><stop offset="0.116" stop-color="#00a9a2"/><stop offset="0.14" stop-color="#00a9a2"/><stop offset="0.163" stop-color="#00a9a3"/><stop offset="0.186" stop-color="#00a9a3"/><stop offset="0.209" stop-color="#00a9a4"/><stop offset="0.233" stop-color="#00a9a4"/><stop offset="0.256" stop-color="#00a9a5"/><stop offset="0.279" stop-color="#00a9a6"/><stop offset="0.302" stop-color="#06aba9"/><stop offset="0.326" stop-color="#2ab7b6"/><stop offset="0.349" stop-color="#60cac9"/><stop offset="0.372" stop-color="#9adddd"/><stop offset="0.395" stop-color="#cdeeee"/><stop offset="0.419" stop-color="#e9f8f8"/><stop offset="0.442" stop-color="#f7fcf8"/><stop offset="0.465" stop-color="#fef3e6"/><stop offset="0.488" stop-color="#fcdfc9"/><stop offset="0.512" stop-color="#facdb3"/><stop offset="0.535" stop-color="#f8bd9f"/><stop offset="0.558" stop-color="#f7ad8c"/><stop offset="0.581" stop-color="#f59e7a"/><stop offset="0.605" stop-color="#f4916b"/><stop offset="0.628" stop-color="#f3845c"/><stop offset="0.651" stop-color="#f17950"/><stop offset="0.674" stop-color="#f06f45"/><stop offset="0.698" stop-color="#ef673b"/><stop offset="0.721" stop-color="#ef5f32"/><stop offset="0.744" stop-color="#ee592b"/><stop offset="0.767" stop-color="#ed5426"/><stop offset="0.791" stop-color="#ed5022"/><stop offset="0.814" stop-color="#ed4d1f"/><stop offset="0.837" stop-color="#ec4a1d"/><stop offset="0.86" stop-color="#ec491c"/><stop offset="0.884" stop-color="#ec491c"/><stop offset="0.907" stop-color="#ec481c"/><stop offset="0.93" stop-color="#ec481c"/><stop offset="0.953" stop-color="#ec481c"/><stop offset="0.977" stop-color="#ec471c"/><stop offset="1" stop-color="#ec471c"/></linearGradient><linearGradient id="g88" gradientUnits="userSpaceOnUse" x1="812" x2="1067"><stop offset="0" stop-color="#00a9a4"/><stop offset="0.0233" stop-color="#00a9a4"/><stop offset="0.0465" stop-color="#00a9a4"/><stop offset="0.0698" stop-color="#00a9a5"/><stop offset="0.093" stop-color="#00a9a5"/><stop offset="0.116" stop-color="#00a9a6"/><stop offset="0.14" stop-color="#00a9a6"/><stop offset="0.163" stop-color="#00a9a7"/><stop offset="0.186" stop-color="#00a9a8"/><stop offset="0.209" stop-color="#00a9a8"/><stop offset="0.233" stop-color="#00a9a9"/><stop offset="0.256" stop-color="#00a9aa"/><stop offset="0.279" stop-color="#00a9ab"/><stop offset="0.302" stop-color="#11afb2"/><stop offset="0.326" stop-color="#3ebec1"/><stop offset="0.349" stop-color="#78d2d5"/><stop offset="0.372" stop-color="#b0e5e7"/><stop offset="0.395" stop-color="#def4f5"/><stop offset="0.419" stop-color="#ecf9fa"/><stop offset="0.442" stop-color="#fffcfa"/><stop offset="0.465" stop-color="#fce6e0"/><stop offset="0.488" stop-color="#fad0c6"/><stop offset="0.512" stop-color="#f8beb0"/><stop offset="0.535" stop-color="#f7ad9b"/><stop offset="0.558" stop-color="#f59e89"/><stop offset="0.581" stop-color="#f48f78"/><stop offset="0.605" stop-color="#f28268"/><stop offset="0.628" stop-color="#f1775a"/><stop offset="0.651" stop-color="#f06c4d"/><stop offset="0.674" stop-color="#ef6343"/><stop offset="0.698" stop-color="#ee5b39"/><stop offset="0.721" stop-color="#ee5531"/><stop offset="0.744" stop-color="#ed4f2a"/><stop offset="0.767" stop-color="#ec4b25"/><stop offset="0.791" stop-color="#ec4821"/><stop offset="0.814" stop-color="#ec451e"/><stop offset="0.837" stop-color="#ec441d"/><stop offset="0.86" stop-color="#ec431c"/><stop offset="0.884" stop-color="#ec431c"/><stop offset="0.907" stop-color="#ec431c"/><stop offset="0.93" stop-color="#ec431c"/><stop offset="0.953" stop-color="#ec431c"/><stop offset="0.977" stop-color="#ec431c"/><stop offset="1" stop-color="#ec431c"/></linearGradient><linearGradient id="g89" gradientUnits="userSpaceOnUse" x1="812" x2="1069"><stop offset="0" stop-color="#00a9a7"/><stop offset="0.0233" stop-color="#00a9a7"/><stop offset="0.0465" stop-color="#00a9a8"/><stop offset="0.0698" stop-color="#00a9a8"/><stop offset="0.093" stop-color="#00a9a9"/><stop offset="0.116" stop-color="#00a9aa"/><stop offset="0.14" stop-color="#00a9aa"/><stop offset="0.163" stop-color="#00a9ab"/><stop offset="0.186" stop-color="#00a9ac"/><stop offset="0.209" stop-color="#00a9ad"/><stop offset="0.233" stop-color="#00a9ae"/><stop offset="0.256" stop-color="#00aaaf"/><stop offset="0.279" stop-color="#01aab1"/><stop offset="0.302" stop-color="#1bb3ba"/><stop offset="0.326" stop-color="#4ec4cb"/><stop offset="0.349" stop-color="#89d7dd"/><stop offset="0.372" stop-color="#bfeaed"/><stop offset="0.395" stop-color="#e7f7f9"/><stop offset="0.419" stop-color="#f0fafc"/><stop offset="0.442" stop-color="#fef3f8"/><stop offset="0.465" stop-color="#fbdbdc"/><stop offset="0.488" stop-color="#f9c7c1"/><stop offset="0.512" stop-color="#f7b4ab"/><stop offset="0.535" stop-color="#f5a297"/><stop offset="0.558" stop-color="#f49285"/><stop offset="0.581" stop-color="#f28374"/><stop offset="0.605" stop-color="#f17765"/><stop offset="0.628" stop-color="#f06c57"/><stop offset="0.651" stop-color="#ef624b"/><stop offset="0.674" stop-color="#ee5a40"/><stop offset="0.698" stop-color="#ed5337"/><stop offset="0.721" stop-color="#ed4d2f"/><stop offset="0.744" stop-color="#ec4829"/><stop offset="0.767" stop-color="#ec4424"/><stop offset="0.791" stop-color="#eb4120"/><stop offset="0.814" stop-color="#eb3f1e"/><stop offset="0.837" stop-color="#eb3f1c"/><stop offset="0.86" stop-color="#eb3f1c"/><stop offset="0.884" stop-color="#eb3f1c"/><stop offset="0.907" stop-color="#eb3f1c"/><stop offset="0.93" stop-color="#eb3f1c"/><stop offset="0.953" stop-color="#eb3f1c"/><stop offset="0.977" stop-color="#eb401c"/><stop offset="1" stop-color="#eb401c"/></linearGradient><linearGradient id="g90" gradientUnits="userSpaceOnUse" x1="813" x2="1071"><stop offset="0" stop-color="#00a9aa"/><stop offset="0.0233" stop-color="#00a9ab"/><stop offset="0.0465" stop-color="#00a9ab"/><stop offset="0.0698" stop-color="#00a9ac"/><stop offset="0.093" stop-color="#00a9ad"/><stop offset="0.116" stop-color="#00a9ae"/><stop offset="0.14" stop-color="#00aaae"/><stop offset="0.163" stop-color="#00aaaf"/><stop offset="0.186" stop-color="#00aab1"/><stop offset="0.209" stop-color="#00aab2"/><stop offset="0.233" stop-color="#00aab3"/><stop offset="0.256" stop-color="#00aab5"/><stop offset="0.279" stop-color="#07acb8"/><stop offset="0.302" stop-color="#2cb9c5"/><stop offset="0.326" stop-color="#64cbd6"/><stop offset="0.349" stop-color="#9edfe6"/><stop offset="0.372" stop-color="#d1eff4"/><stop offset="0.395" stop-color="#e6f7fb"/><stop offset="0.419" stop-color="#f4f3f9"/><stop offset="0.442" stop-color="#fde5f1"/><stop offset="0.465" stop-color="#fbd0dd"/><stop offset="0.488" stop-color="#f9bec2"/><stop offset="0.512" stop-color="#f6aca9"/><stop offset="0.535" stop-color="#f49b91"/><stop offset="0.558" stop-color="#f38c7f"/><stop offset="0.581" stop-color="#f27e6f"/><stop offset="0.605" stop-color="#f07160"/><stop offset="0.628" stop-color="#ef6553"/><stop offset="0.651" stop-color="#ee5a47"/><stop offset="0.674" stop-color="#ed513d"/><stop offset="0.698" stop-color="#ec4a34"/><stop offset="0.721" stop-color="#ec432d"/><stop offset="0.744" stop-color="#eb3e27"/><stop offset="0.767" stop-color="#eb3c23"/><stop offset="0.791" stop-color="#eb3a1f"/><stop offset="0.814" stop-color="#eb391d"/><stop offset="0.837" stop-color="#eb391c"/><stop offset="0.86" stop-color="#eb391c"/><stop offset="0.884" stop-color="#eb3a1c"/><stop offset="0.907" stop-color="#eb3a1c"/><stop offset="0.93" stop-color="#eb3b1c"/><stop offset="0.953" stop-color="#eb3b1c"/><stop offset="0.977" stop-color="#eb3c1c"/><stop offset="1" stop-color="#eb3c1c"/></linearGradient><linearGradient id="g91" gradientUnits="userSpaceOnUse" x1="813" x2="1074"><stop offset="0" stop-color="#00a9ad"/><stop offset="0.0227" stop-color="#00a9ae"/><stop offset="0.0455" stop-color="#00aaaf"/><stop offset="0.0682" stop-color="#00aaaf"/><stop offset="0.0909" stop-color="#00aab0"/><stop offset="0.114" stop-color="#00aab1"/><stop offset="0.136" stop-color="#00aab2"/><stop offset="0.159" stop-color="#00aab4"/><stop offset="0.182" stop-color="#00aab5"/><stop offset="0.205" stop-color="#00aab6"/><stop offset="0.227" stop-color="#00aab8"/><stop offset="0.25" stop-color="#00aaba"/><stop offset="0.273" stop-color="#07acbe"/><stop offset="0.295" stop-color="#2db9ca"/><stop offset="0.318" stop-color="#63cbd9"/><stop offset="0.341" stop-color="#9ddee9"/><stop offset="0.364" stop-color="#ceeff5"/><stop offset="0.386" stop-color="#e3f3fb"/><stop offset="0.409" stop-color="#edecf5"/><stop offset="0.432" stop-color="#fce0ef"/><stop offset="0.455" stop-color="#fbcde1"/><stop offset="0.477" stop-color="#f9bccf"/><stop offset="0.5" stop-color="#f7acb7"/><stop offset="0.523" stop-color="#f59b9f"/><stop offset="0.545" stop-color="#f38c89"/><stop offset="0.568" stop-color="#f17e74"/><stop offset="0.591" stop-color="#f07163"/><stop offset="0.614" stop-color="#ef6756"/><stop offset="0.636" stop-color="#ee5c4a"/><stop offset="0.659" stop-color="#ed5340"/><stop offset="0.682" stop-color="#ec4b37"/><stop offset="0.705" stop-color="#ec452f"/><stop offset="0.727" stop-color="#eb3f29"/><stop offset="0.75" stop-color="#eb3b24"/><stop offset="0.773" stop-color="#ea3820"/><stop offset="0.795" stop-color="#ea351e"/><stop offset="0.818" stop-color="#ea341c"/><stop offset="0.841" stop-color="#ea341c"/><stop offset="0.864" stop-color="#ea341c"/><stop offset="0.886" stop-color="#ea341c"/><stop offset="0.909" stop-color="#ea351c"/><stop offset="0.932" stop-color="#ea361c"/><stop offset="0.955" stop-color="#ea361c"/><stop offset="0.977" stop-color="#ea371c"/><stop offset="1" stop-color="#ea381c"/></linearGradient><linearGradient id="g92" gradientUnits="userSpaceOnUse" x1="814" x2="1076"><stop offset="0" stop-color="#00aab1"/><stop offset="0.0227" stop-color="#00aab1"/><stop offset="0.0455" stop-color="#00aab2"/><stop offset="0.0682" stop-color="#00aab3"/><stop offset="0.0909" stop-color="#00aab4"/><stop offset="0.114" stop-color="#00aab5"/><stop offset="0.136" stop-color="#00aab7"/><stop offset="0.159" stop-color="#00aab8"/><stop offset="0.182" stop-color="#00aaba"/><stop offset="0.205" stop-color="#00aabc"/><stop offset="0.227" stop-color="#00aabe"/><stop offset="0.25" stop-color="#00aac0"/><stop offset="0.273" stop-color="#12b0c6"/><stop offset="0.295" stop-color="#3fbfd4"/><stop offset="0.318" stop-color="#79d2e3"/><stop offset="0.341" stop-color="#b0e4f1"/><stop offset="0.364" stop-color="#dbf1fa"/><stop offset="0.386" stop-color="#e3ecf6"/><stop offset="0.409" stop-color="#f2e3f1"/><stop offset="0.432" stop-color="#fbcee6"/><stop offset="0.455" stop-color="#fac1db"/><stop offset="0.477" stop-color="#f8b2cb"/><stop offset="0.5" stop-color="#f7a2b8"/><stop offset="0.523" stop-color="#f593a1"/><stop offset="0.545" stop-color="#f3858b"/><stop offset="0.568" stop-color="#f17777"/><stop offset="0.591" stop-color="#f06b65"/><stop offset="0.614" stop-color="#ee6054"/><stop offset="0.636" stop-color="#ed5646"/><stop offset="0.659" stop-color="#ed4f3c"/><stop offset="0.682" stop-color="#ec4834"/><stop offset="0.705" stop-color="#eb422d"/><stop offset="0.727" stop-color="#eb3d27"/><stop offset="0.75" stop-color="#ea3922"/><stop offset="0.773" stop-color="#ea361f"/><stop offset="0.795" stop-color="#ea351d"/><stop offset="0.818" stop-color="#ea341c"/><stop offset="0.841" stop-color="#ea341c"/><stop offset="0.864" stop-color="#ea341c"/><stop offset="0.886" stop-color="#ea341c"/><stop offset="0.909" stop-color="#ea341c"/><stop offset="0.932" stop-color="#ea341c"/><stop offset="0.955" stop-color="#ea341c"/><stop offset="0.977" stop-color="#ea341c"/><stop offset="1" stop-color="#ea341c"/></linearGradient><linearGradient id="g93" gradientUnits="userSpaceOnUse" x1="814" x2="1078"><stop offset="0" stop-color="#00aab4"/><stop offset="0.0227" stop-color="#00aab5"/><stop offset="0.0455" stop-color="#00aab6"/><stop offset="0.0682" stop-color="#00aab7"/><stop offset="0.0909" stop-color="#00aab8"/><stop offset="0.114" stop-color="#00aaba"/><stop offset="0.136" stop-color="#00aabb"/><stop offset="0.159" stop-color="#00aabd"/><stop offset="0.182" stop-color="#00aabf"/><stop offset="0.205" stop-color="#00aac0"/><stop offset="0.227" stop-color="#00aac2"/><stop offset="0.25" stop-color="#01aac5"/><stop offset="0.273" stop-color="#1bb2ce"/><stop offset="0.295" stop-color="#4cc3dc"/><stop offset="0.318" stop-color="#86d6ea"/><stop offset="0.341" stop-color="#bbe6f5"/><stop offset="0.364" stop-color="#dbecf8"/><stop offset="0.386" stop-color="#e0e3f1"/><stop offset="0.409" stop-color="#f1d7eb"/><stop offset="0.432" stop-color="#fac3e1"/><stop offset="0.455" stop-color="#f9b7d6"/><stop offset="0.477" stop-color="#f7a9c8"/><stop offset="0.5" stop-color="#f69ab8"/><stop offset="0.523" stop-color="#f58ca4"/><stop offset="0.545" stop-color="#f37e8f"/><stop offset="0.568" stop-color="#f1727b"/><stop offset="0.591" stop-color="#f06669"/><stop offset="0.614" stop-color="#ee5c59"/><stop offset="0.636" stop-color="#ed524a"/><stop offset="0.659" stop-color="#ec4a3c"/><stop offset="0.682" stop-color="#eb4331"/><stop offset="0.705" stop-color="#eb3f2b"/><stop offset="0.727" stop-color="#ea3b25"/><stop offset="0.75" stop-color="#ea3821"/><stop offset="0.773" stop-color="#ea351e"/><stop offset="0.795" stop-color="#ea341d"/><stop offset="0.818" stop-color="#ea331c"/><stop offset="0.841" stop-color="#ea331c"/><stop offset="0.864" stop-color="#ea341c"/><stop offset="0.886" stop-color="#ea341c"/><stop offset="0.909" stop-color="#ea341c"/><stop offset="0.932" stop-color="#ea341c"/><stop offset="0.955" stop-color="#ea341c"/><stop offset="0.977" stop-color="#ea341c"/><stop offset="1" stop-color="#ea341c"/></linearGradient><linearGradient id="g94" gradientUnits="userSpaceOnUse" x1="815" x2="1081"><stop offset="0" stop-color="#00aab7"/><stop offset="0.0222" stop-color="#00aab8"/><stop offset="0.0444" stop-color="#00aab9"/><stop offset="0.0667" stop-color="#00aabb"/><stop offset="0.0889" stop-color="#00aabc"/><stop offset="0.111" stop-color="#00aabe"/><stop offset="0.133" stop-color="#00aabf"/><stop offset="0.156" stop-color="#00aac1"/><stop offset="0.178" stop-color="#00aac3"/><stop offset="0.2" stop-color="#00a9c5"/><stop offset="0.222" stop-color="#00a9c7"/><stop offset="0.244" stop-color="#02aacb"/><stop offset="0.267" stop-color="#20b4d4"/><stop offset="0.289" stop-color="#52c4e2"/><stop offset="0.311" stop-color="#8ad5ee"/><stop offset="0.333" stop-color="#bde3f6"/><stop offset="0.356" stop-color="#d7e8f5"/><stop offset="0.378" stop-color="#dbd9ec"/><stop offset="0.4" stop-color="#edcee7"/><stop offset="0.422" stop-color="#f8bddd"/><stop offset="0.444" stop-color="#f8b1d5"/><stop offset="0.467" stop-color="#f7a4c9"/><stop offset="0.489" stop-color="#f697bb"/><stop offset="0.511" stop-color="#f589ac"/><stop offset="0.533" stop-color="#f37d9a"/><stop offset="0.556" stop-color="#f27186"/><stop offset="0.578" stop-color="#f06573"/><stop offset="0.6" stop-color="#ef5b63"/><stop offset="0.622" stop-color="#ee5255"/><stop offset="0.644" stop-color="#ed4a47"/><stop offset="0.667" stop-color="#ec433b"/><stop offset="0.689" stop-color="#eb3e30"/><stop offset="0.711" stop-color="#ea3927"/><stop offset="0.733" stop-color="#ea3622"/><stop offset="0.756" stop-color="#ea341f"/><stop offset="0.778" stop-color="#ea331d"/><stop offset="0.8" stop-color="#ea331c"/><stop offset="0.822" stop-color="#ea331c"/><stop offset="0.844" stop-color="#ea331c"/><stop offset="0.867" stop-color="#ea331c"/><stop offset="0.889" stop-color="#ea331c"/><stop offset="0.911" stop-color="#ea331c"/><stop offset="0.933" stop-color="#ea331c"/><stop offset="0.956" stop-color="#ea341c"/><stop offset="0.978" stop-color="#ea341c"/><stop offset="1" stop-color="#ea341c"/></linearGradient><linearGradient id="g95" gradientUnits="userSpaceOnUse" x1="815" x2="1083"><stop offset="0" stop-color="#00aaba"/><stop offset="0.0222" stop-color="#00aabc"/><stop offset="0.0444" stop-color="#00aabd"/><stop offset="0.0667" stop-color="#00aabe"/><stop offset="0.0889" stop-color="#00aac0"/><stop offset="0.111" stop-color="#00aac1"/><stop offset="0.133" stop-color="#00aac3"/><stop offset="0.156" stop-color="#00a9c5"/><stop offset="0.178" stop-color="#00a9c7"/><stop offset="0.2" stop-color="#00a9c9"/><stop offset="0.222" stop-color="#00a9cc"/><stop offset="0.244" stop-color="#06abd1"/><stop offset="0.267" stop-color="#2ab6dd"/><stop offset="0.289" stop-color="#5ec6e7"/><stop offset="0.311" stop-color="#95d6f1"/><stop offset="0.333" stop-color="#c4e1f3"/><stop offset="0.356" stop-color="#d3e0f0"/><stop offset="0.378" stop-color="#d6cee7"/><stop offset="0.4" stop-color="#ecc0e0"/><stop offset="0.422" stop-color="#f7b3d8"/><stop offset="0.444" stop-color="#f7a7d0"/><stop offset="0.467" stop-color="#f69bc5"/><stop offset="0.489" stop-color="#f58fb8"/><stop offset="0.511" stop-color="#f482aa"/><stop offset="0.533" stop-color="#f3769c"/><stop offset="0.556" stop-color="#f26b89"/><stop offset="0.578" stop-color="#f06078"/><stop offset="0.6" stop-color="#ef5767"/><stop offset="0.622" stop-color="#ee4e58"/><stop offset="0.644" stop-color="#ed474b"/><stop offset="0.667" stop-color="#ec4040"/><stop offset="0.689" stop-color="#eb3b36"/><stop offset="0.711" stop-color="#ea372d"/><stop offset="0.733" stop-color="#ea3425"/><stop offset="0.756" stop-color="#e9321f"/><stop offset="0.778" stop-color="#e9311d"/><stop offset="0.8" stop-color="#e9311c"/><stop offset="0.822" stop-color="#ea321c"/><stop offset="0.844" stop-color="#ea331c"/><stop offset="0.867" stop-color="#ea331c"/><stop offset="0.889" stop-color="#ea331c"/><stop offset="0.911" stop-color="#ea331c"/><stop offset="0.933" stop-color="#ea331c"/><stop offset="0.956" stop-color="#ea331c"/><stop offset="0.978" stop-color="#ea331c"/><stop offset="1" stop-color="#ea331c"/></linearGradient><linearGradient id="g96" gradientUnits="userSpaceOnUse" x1="815" x2="1086"><stop offset="0" stop-color="#00aabe"/><stop offset="0.0217" stop-color="#00aabf"/><stop offset="0.0435" stop-color="#00aac0"/><stop offset="0.0652" stop-color="#00aac1"/><stop offset="0.087" stop-color="#00aac3"/><stop offset="0.109" stop-color="#00a9c4"/><stop offset="0.13" stop-color="#00a9c6"/><stop offset="0.152" stop-color="#00a9c8"/><stop offset="0.174" stop-color="#00a9cb"/><stop offset="0.196" stop-color="#00a9ce"/><stop offset="0.217" stop-color="#00a8d1"/><stop offset="0.239" stop-color="#06aad7"/><stop offset="0.261" stop-color="#29b4df"/><stop offset="0.283" stop-color="#5cc2e8"/><stop offset="0.304" stop-color="#92d0ef"/><stop offset="0.326" stop-color="#c0ddf1"/><stop offset="0.348" stop-color="#cedaed"/><stop offset="0.37" stop-color="#cdc6e2"/><stop offset="0.391" stop-color="#e5b8dc"/><stop offset="0.413" stop-color="#f4add5"/><stop offset="0.435" stop-color="#f7a2ce"/><stop offset="0.457" stop-color="#f697c5"/><stop offset="0.478" stop-color="#f58bba"/><stop offset="0.5" stop-color="#f480ad"/><stop offset="0.522" stop-color="#f374a0"/><stop offset="0.543" stop-color="#f26994"/><stop offset="0.565" stop-color="#f15f83"/><stop offset="0.587" stop-color="#ef5673"/><stop offset="0.609" stop-color="#ee4e63"/><stop offset="0.63" stop-color="#ed4655"/><stop offset="0.652" stop-color="#ec404a"/><stop offset="0.674" stop-color="#ec3b3f"/><stop offset="0.696" stop-color="#eb3737"/><stop offset="0.717" stop-color="#ea332f"/><stop offset="0.739" stop-color="#ea3128"/><stop offset="0.761" stop-color="#e93023"/><stop offset="0.783" stop-color="#e9301f"/><stop offset="0.804" stop-color="#e9301c"/><stop offset="0.826" stop-color="#e9301c"/><stop offset="0.848" stop-color="#e9311c"/><stop offset="0.87" stop-color="#ea321c"/><stop offset="0.891" stop-color="#ea321c"/><stop offset="0.913" stop-color="#ea331c"/><stop offset="0.935" stop-color="#ea331c"/><stop offset="0.957" stop-color="#ea331c"/><stop offset="0.978" stop-color="#ea331c"/><stop offset="1" stop-color="#ea331c"/></linearGradient><linearGradient id="g97" gradientUnits="userSpaceOnUse" x1="816" x2="1088"><stop offset="0" stop-color="#00aac1"/><stop offset="0.0217" stop-color="#00aac2"/><stop offset="0.0435" stop-color="#00aac3"/><stop offset="0.0652" stop-color="#00a9c5"/><stop offset="0.087" stop-color="#00a9c6"/><stop offset="0.109" stop-color="#00a9c8"/><stop offset="0.13" stop-color="#00a9ca"/><stop offset="0.152" stop-color="#00a9cd"/><stop offset="0.174" stop-color="#00a9d0"/><stop offset="0.196" stop-color="#00a8d3"/><stop offset="0.217" stop-color="#00a8d7"/><stop offset="0.239" stop-color="#0faadb"/><stop offset="0.261" stop-color="#39b5e3"/><stop offset="0.283" stop-color="#6dc3eb"/><stop offset="0.304" stop-color="#a0cfec"/><stop offset="0.326" stop-color="#c7dcef"/><stop offset="0.348" stop-color="#c8cce5"/><stop offset="0.37" stop-color="#d4b9dd"/><stop offset="0.391" stop-color="#e7abd5"/><stop offset="0.413" stop-color="#f4a3d0"/><stop offset="0.435" stop-color="#f698c9"/><stop offset="0.457" stop-color="#f58dc0"/><stop offset="0.478" stop-color="#f482b6"/><stop offset="0.5" stop-color="#f377aa"/><stop offset="0.522" stop-color="#f26d9e"/><stop offset="0.543" stop-color="#f16392"/><stop offset="0.565" stop-color="#f05985"/><stop offset="0.587" stop-color="#ef5175"/><stop offset="0.609" stop-color="#ee4966"/><stop offset="0.63" stop-color="#ed4259"/><stop offset="0.652" stop-color="#ed3d4d"/><stop offset="0.674" stop-color="#ec3843"/><stop offset="0.696" stop-color="#eb343a"/><stop offset="0.717" stop-color="#eb3233"/><stop offset="0.739" stop-color="#ea302d"/><stop offset="0.761" stop-color="#ea2f29"/><stop offset="0.783" stop-color="#ea2f25"/><stop offset="0.804" stop-color="#e92f22"/><stop offset="0.826" stop-color="#e9301f"/><stop offset="0.848" stop-color="#e9301d"/><stop offset="0.87" stop-color="#e9301c"/><stop offset="0.891" stop-color="#e9311c"/><stop offset="0.913" stop-color="#e9321c"/><stop offset="0.935" stop-color="#ea321c"/><stop offset="0.957" stop-color="#ea331c"/><stop offset="0.978" stop-color="#ea331c"/><stop offset="1" stop-color="#ea331c"/></linearGradient><linearGradient id="g98" gradientUnits="userSpaceOnUse" x1="816" x2="1090"><stop offset="0" stop-color="#00aac3"/><stop offset="0.0217" stop-color="#00a9c4"/><stop offset="0.0435" stop-color="#00a9c6"/><stop offset="0.0652" stop-color="#00a9c8"/><stop offset="0.087" stop-color="#00a9ca"/><stop offset="0.109" stop-color="#00a9cc"/><stop offset="0.13" stop-color="#00a9ce"/><stop offset="0.152" stop-color="#00a8d1"/><stop offset="0.174" stop-color="#00a8d4"/><stop offset="0.196" stop-color="#00a7d7"/><stop offset="0.217" stop-color="#00a4d9"/><stop offset="0.239" stop-color="#16a8de"/><stop offset="0.261" stop-color="#42b4e6"/><stop offset="0.283" stop-color="#77bfe7"/><stop offset="0.304" stop-color="#a8ceeb"/><stop offset="0.326" stop-color="#c2d3ea"/><stop offset="0.348" stop-color="#c0bddd"/><stop offset="0.37" stop-color="#d3acd7"/><stop offset="0.391" stop-color="#e8a3d1"/><stop offset="0.413" stop-color="#f39acb"/><stop offset="0.435" stop-color="#f58fc5"/><stop offset="0.457" stop-color="#f485bc"/><stop offset="0.478" stop-color="#f37ab3"/><stop offset="0.5" stop-color="#f370a8"/><stop offset="0.522" stop-color="#f2669c"/><stop offset="0.543" stop-color="#f15d90"/><stop offset="0.565" stop-color="#f05485"/><stop offset="0.587" stop-color="#ef4c78"/><stop offset="0.609" stop-color="#ee456a"/><stop offset="0.63" stop-color="#ed3f5d"/><stop offset="0.652" stop-color="#ed3a51"/><stop offset="0.674" stop-color="#ec3546"/><stop offset="0.696" stop-color="#eb323e"/><stop offset="0.717" stop-color="#eb3038"/><stop offset="0.739" stop-color="#ea2f32"/><stop offset="0.761" stop-color="#ea2e2e"/><stop offset="0.783" stop-color="#ea2e2a"/><stop offset="0.804" stop-color="#ea2f27"/><stop offset="0.826" stop-color="#e92f24"/><stop offset="0.848" stop-color="#e92f21"/><stop offset="0.87" stop-color="#e9301f"/><stop offset="0.891" stop-color="#e9301d"/><stop offset="0.913" stop-color="#e9301c"/><stop offset="0.935" stop-color="#e9311c"/><stop offset="0.957" stop-color="#e9321c"/><stop offset="0.978" stop-color="#ea321c"/><stop offset="1" stop-color="#ea321c"/></linearGradient><linearGradient id="g99" gradientUnits="userSpaceOnUse" x1="817" x2="1093"><stop offset="0" stop-color="#00a9c6"/><stop offset="0.0217" stop-color="#00a9c8"/><stop offset="0.0435" stop-color="#00a9c9"/><stop offset="0.0652" stop-color="#00a9cb"/><stop offset="0.087" stop-color="#00a9cd"/><stop offset="0.109" stop-color="#00a9d0"/><stop offset="0.13" stop-color="#00a8d2"/><stop offset="0.152" stop-color="#00a8d6"/><stop offset="0.174" stop-color="#00a6d8"/><stop offset="0.196" stop-color="#00a4d9"/><stop offset="0.217" stop-color="#04a1db"/><stop offset="0.239" stop-color="#23a8e2"/><stop offset="0.261" stop-color="#54b2e3"/><stop offset="0.283" stop-color="#86bfe5"/><stop offset="0.304" stop-color="#b5d0ea"/><stop offset="0.326" stop-color="#bcc4e1"/><stop offset="0.348" stop-color="#c1add6"/><stop offset="0.37" stop-color="#d59ccf"/><stop offset="0.391" stop-color="#eb9acb"/><stop offset="0.413" stop-color="#f390c6"/><stop offset="0.435" stop-color="#f485bf"/><stop offset="0.457" stop-color="#f47cb7"/><stop offset="0.478" stop-color="#f371ae"/><stop offset="0.5" stop-color="#f268a3"/><stop offset="0.522" stop-color="#f15f98"/><stop offset="0.543" stop-color="#f0568d"/><stop offset="0.565" stop-color="#ef4e83"/><stop offset="0.587" stop-color="#ef4678"/><stop offset="0.609" stop-color="#ee406b"/><stop offset="0.63" stop-color="#ed3b5f"/><stop offset="0.652" stop-color="#ec3654"/><stop offset="0.674" stop-color="#ec334a"/><stop offset="0.696" stop-color="#eb3041"/><stop offset="0.717" stop-color="#eb2e3b"/><stop offset="0.739" stop-color="#eb2d36"/><stop offset="0.761" stop-color="#ea2d32"/><stop offset="0.783" stop-color="#ea2e2e"/><stop offset="0.804" stop-color="#ea2e2b"/><stop offset="0.826" stop-color="#ea2f28"/><stop offset="0.848" stop-color="#ea2f26"/><stop offset="0.87" stop-color="#e92f23"/><stop offset="0.891" stop-color="#e92f21"/><stop offset="0.913" stop-color="#e9301e"/><stop offset="0.935" stop-color="#e9301c"/><stop offset="0.957" stop-color="#e9301c"/><stop offset="0.978" stop-color="#e9311c"/><stop offset="1" stop-color="#e9321c"/></linearGradient><linearGradient id="g100" gradientUnits="userSpaceOnUse" x1="817" x2="1094"><stop offset="0" stop-color="#00a9c9"/><stop offset="0.0213" stop-color="#00a9ca"/><stop offset="0.0426" stop-color="#00a9cc"/><stop offset="0.0638" stop-color="#00a9ce"/><stop offset="0.0851" stop-color="#00a9d0"/><stop offset="0.106" stop-color="#00a8d3"/><stop offset="0.128" stop-color="#00a8d6"/><stop offset="0.149" stop-color="#00a7d8"/><stop offset="0.17" stop-color="#00a4d9"/><stop offset="0.191" stop-color="#00a1da"/><stop offset="0.213" stop-color="#039edc"/><stop offset="0.234" stop-color="#1fa3e1"/><stop offset="0.255" stop-color="#4caadf"/><stop offset="0.277" stop-color="#7eb9e2"/><stop offset="0.298" stop-color="#adc9e6"/><stop offset="0.319" stop-color="#b6bfde"/><stop offset="0.34" stop-color="#b1a7d2"/><stop offset="0.362" stop-color="#cc96cd"/><stop offset="0.383" stop-color="#e494c9"/><stop offset="0.404" stop-color="#f08dc4"/><stop offset="0.426" stop-color="#f481bf"/><stop offset="0.447" stop-color="#f379b8"/><stop offset="0.468" stop-color="#f370b0"/><stop offset="0.489" stop-color="#f266a7"/><stop offset="0.511" stop-color="#f15e9d"/><stop offset="0.532" stop-color="#f05693"/><stop offset="0.553" stop-color="#ef4e89"/><stop offset="0.574" stop-color="#ef477f"/><stop offset="0.596" stop-color="#ee4076"/><stop offset="0.617" stop-color="#ed3b6b"/><stop offset="0.638" stop-color="#ed3660"/><stop offset="0.66" stop-color="#ec3355"/><stop offset="0.681" stop-color="#ec304c"/><stop offset="0.702" stop-color="#eb2e44"/><stop offset="0.723" stop-color="#eb2d3e"/><stop offset="0.745" stop-color="#eb2d39"/><stop offset="0.766" stop-color="#eb2d36"/><stop offset="0.787" stop-color="#ea2d32"/><stop offset="0.809" stop-color="#ea2e2f"/><stop offset="0.83" stop-color="#ea2e2c"/><stop offset="0.851" stop-color="#ea2e2a"/><stop offset="0.872" stop-color="#ea2f27"/><stop offset="0.894" stop-color="#ea2f25"/><stop offset="0.915" stop-color="#e92f23"/><stop offset="0.936" stop-color="#e92f20"/><stop offset="0.957" stop-color="#e9301e"/><stop offset="0.979" stop-color="#e9301d"/><stop offset="1" stop-color="#e9301c"/></linearGradient><linearGradient id="g101" gradientUnits="userSpaceOnUse" x1="818" x2="1091"><stop offset="0" stop-color="#00a9cc"/><stop offset="0.0217" stop-color="#00a9cd"/><stop offset="0.0435" stop-color="#00a9cf"/><stop offset="0.0652" stop-color="#00a8d2"/><stop offset="0.087" stop-color="#00a8d4"/><stop offset="0.109" stop-color="#00a8d7"/><stop offset="0.13" stop-color="#00a6d8"/><stop offset="0.152" stop-color="#00a4d9"/><stop offset="0.174" stop-color="#00a1da"/><stop offset="0.196" stop-color="#009ddc"/><stop offset="0.217" stop-color="#0a9bdf"/><stop offset="0.239" stop-color="#2d9fdc"/><stop offset="0.261" stop-color="#5caadd"/><stop offset="0.283" stop-color="#8ebbe1"/><stop offset="0.304" stop-color="#aec1e1"/><stop offset="0.326" stop-color="#aeaad3"/><stop offset="0.348" stop-color="#bd97cc"/><stop offset="0.37" stop-color="#d28ec8"/><stop offset="0.391" stop-color="#e78cc4"/><stop offset="0.413" stop-color="#f083bf"/><stop offset="0.435" stop-color="#f378ba"/><stop offset="0.457" stop-color="#f270b3"/><stop offset="0.478" stop-color="#f268ab"/><stop offset="0.5" stop-color="#f15ea3"/><stop offset="0.522" stop-color="#f05799"/><stop offset="0.543" stop-color="#f04f90"/><stop offset="0.565" stop-color="#ef4886"/><stop offset="0.587" stop-color="#ee427d"/><stop offset="0.609" stop-color="#ee3c75"/><stop offset="0.63" stop-color="#ed376c"/><stop offset="0.652" stop-color="#ed3361"/><stop offset="0.674" stop-color="#ec3058"/><stop offset="0.696" stop-color="#ec2e4f"/><stop offset="0.717" stop-color="#eb2c48"/><stop offset="0.739" stop-color="#eb2c42"/><stop offset="0.761" stop-color="#eb2c3d"/><stop offset="0.783" stop-color="#eb2d39"/><stop offset="0.804" stop-color="#eb2d36"/><stop offset="0.826" stop-color="#ea2d33"/><stop offset="0.848" stop-color="#ea2e30"/><stop offset="0.87" stop-color="#ea2e2d"/><stop offset="0.891" stop-color="#ea2e2b"/><stop offset="0.913" stop-color="#ea2f28"/><stop offset="0.935" stop-color="#ea2f26"/><stop offset="0.957" stop-color="#e92f24"/><stop offset="0.978" stop-color="#e92f22"/><stop offset="1" stop-color="#e93020"/></linearGradient><linearGradient id="g102" gradientUnits="userSpaceOnUse" x1="818" x2="1086"><stop offset="0" stop-color="#00a9ce"/><stop offset="0.0222" stop-color="#00a9d0"/><stop offset="0.0444" stop-color="#00a8d3"/><stop offset="0.0667" stop-color="#00a8d5"/><stop offset="0.0889" stop-color="#00a8d7"/><stop offset="0.111" stop-color="#00a6d8"/><stop offset="0.133" stop-color="#00a4d9"/><stop offset="0.156" stop-color="#00a1da"/><stop offset="0.178" stop-color="#009edb"/><stop offset="0.2" stop-color="#0099dd"/><stop offset="0.222" stop-color="#0d96db"/><stop offset="0.244" stop-color="#319bd8"/><stop offset="0.267" stop-color="#61a8db"/><stop offset="0.289" stop-color="#92b8de"/><stop offset="0.311" stop-color="#a9b6da"/><stop offset="0.333" stop-color="#a39ecd"/><stop offset="0.356" stop-color="#ba8bc7"/><stop offset="0.378" stop-color="#d288c5"/><stop offset="0.4" stop-color="#e685c1"/><stop offset="0.422" stop-color="#ef7dbc"/><stop offset="0.444" stop-color="#f272b7"/><stop offset="0.467" stop-color="#f26ab0"/><stop offset="0.489" stop-color="#f162a9"/><stop offset="0.511" stop-color="#f159a1"/><stop offset="0.533" stop-color="#f05298"/><stop offset="0.556" stop-color="#ef4b8f"/><stop offset="0.578" stop-color="#ef4486"/><stop offset="0.6" stop-color="#ee3e7e"/><stop offset="0.622" stop-color="#ee3976"/><stop offset="0.644" stop-color="#ed356f"/><stop offset="0.667" stop-color="#ed3166"/><stop offset="0.689" stop-color="#ec2e5d"/><stop offset="0.711" stop-color="#ec2c54"/><stop offset="0.733" stop-color="#eb2b4d"/><stop offset="0.756" stop-color="#eb2b47"/><stop offset="0.778" stop-color="#eb2c42"/><stop offset="0.8" stop-color="#eb2c3d"/><stop offset="0.822" stop-color="#eb2c3a"/><stop offset="0.844" stop-color="#eb2d37"/><stop offset="0.867" stop-color="#ea2d34"/><stop offset="0.889" stop-color="#ea2d31"/><stop offset="0.911" stop-color="#ea2e2f"/><stop offset="0.933" stop-color="#ea2e2c"/><stop offset="0.956" stop-color="#ea2e2a"/><stop offset="0.978" stop-color="#ea2f28"/><stop offset="1" stop-color="#ea2f26"/></linearGradient><linearGradient id="g103" gradientUnits="userSpaceOnUse" x1="819" x2="1081"><stop offset="0" stop-color="#00a8d1"/><stop offset="0.0227" stop-color="#00a8d4"/><stop offset="0.0455" stop-color="#00a8d6"/><stop offset="0.0682" stop-color="#00a7d7"/><stop offset="0.0909" stop-color="#00a5d8"/><stop offset="0.114" stop-color="#00a3d9"/><stop offset="0.136" stop-color="#00a1da"/><stop offset="0.159" stop-color="#009edb"/><stop offset="0.182" stop-color="#009add"/><stop offset="0.205" stop-color="#0093db"/><stop offset="0.227" stop-color="#1490d6"/><stop offset="0.25" stop-color="#3b98d5"/><stop offset="0.273" stop-color="#6da8d9"/><stop offset="0.295" stop-color="#99b5dc"/><stop offset="0.318" stop-color="#a1a7d2"/><stop offset="0.341" stop-color="#9c8fc6"/><stop offset="0.364" stop-color="#ba7ec1"/><stop offset="0.386" stop-color="#d582c1"/><stop offset="0.409" stop-color="#e77ebd"/><stop offset="0.432" stop-color="#ee75b8"/><stop offset="0.455" stop-color="#f26bb3"/><stop offset="0.477" stop-color="#f164ad"/><stop offset="0.5" stop-color="#f15ca6"/><stop offset="0.523" stop-color="#f0549f"/><stop offset="0.545" stop-color="#f04c97"/><stop offset="0.568" stop-color="#ef468e"/><stop offset="0.591" stop-color="#ee4086"/><stop offset="0.614" stop-color="#ee3b7e"/><stop offset="0.636" stop-color="#ed3676"/><stop offset="0.659" stop-color="#ed326f"/><stop offset="0.682" stop-color="#ed2f69"/><stop offset="0.705" stop-color="#ec2d61"/><stop offset="0.727" stop-color="#ec2b59"/><stop offset="0.75" stop-color="#ec2a52"/><stop offset="0.773" stop-color="#eb2b4c"/><stop offset="0.795" stop-color="#eb2b47"/><stop offset="0.818" stop-color="#eb2c42"/><stop offset="0.841" stop-color="#eb2c3e"/><stop offset="0.864" stop-color="#eb2c3b"/><stop offset="0.886" stop-color="#eb2d38"/><stop offset="0.909" stop-color="#ea2d35"/><stop offset="0.932" stop-color="#ea2d32"/><stop offset="0.955" stop-color="#ea2e30"/><stop offset="0.977" stop-color="#ea2e2e"/><stop offset="1" stop-color="#ea2e2b"/></linearGradient><linearGradient id="g104" gradientUnits="userSpaceOnUse" x1="820" x2="1076"><stop offset="0" stop-color="#00a8d5"/><stop offset="0.0233" stop-color="#00a8d7"/><stop offset="0.0465" stop-color="#00a7d8"/><stop offset="0.0698" stop-color="#00a5d8"/><stop offset="0.093" stop-color="#00a3d9"/><stop offset="0.116" stop-color="#00a1da"/><stop offset="0.14" stop-color="#009edb"/><stop offset="0.163" stop-color="#009bdd"/><stop offset="0.186" stop-color="#0095dc"/><stop offset="0.209" stop-color="#028cd5"/><stop offset="0.233" stop-color="#1c8dd2"/><stop offset="0.256" stop-color="#4798d3"/><stop offset="0.279" stop-color="#77a6d6"/><stop offset="0.302" stop-color="#99acd6"/><stop offset="0.326" stop-color="#9995c8"/><stop offset="0.349" stop-color="#a782c1"/><stop offset="0.372" stop-color="#be7ac0"/><stop offset="0.395" stop-color="#d87dbe"/><stop offset="0.419" stop-color="#e877b9"/><stop offset="0.442" stop-color="#ee6fb5"/><stop offset="0.465" stop-color="#f164b0"/><stop offset="0.488" stop-color="#f15daa"/><stop offset="0.512" stop-color="#f056a3"/><stop offset="0.535" stop-color="#f04e9c"/><stop offset="0.558" stop-color="#ef4795"/><stop offset="0.581" stop-color="#ef428d"/><stop offset="0.605" stop-color="#ee3c85"/><stop offset="0.628" stop-color="#ee387d"/><stop offset="0.651" stop-color="#ed3376"/><stop offset="0.674" stop-color="#ed3070"/><stop offset="0.698" stop-color="#ec2d6a"/><stop offset="0.721" stop-color="#ec2b64"/><stop offset="0.744" stop-color="#ec2a5d"/><stop offset="0.767" stop-color="#ec2a57"/><stop offset="0.791" stop-color="#eb2a51"/><stop offset="0.814" stop-color="#eb2b4c"/><stop offset="0.837" stop-color="#eb2b47"/><stop offset="0.86" stop-color="#eb2b43"/><stop offset="0.884" stop-color="#eb2c3f"/><stop offset="0.907" stop-color="#eb2c3b"/><stop offset="0.93" stop-color="#eb2d39"/><stop offset="0.953" stop-color="#eb2d36"/><stop offset="0.977" stop-color="#ea2d33"/><stop offset="1" stop-color="#ea2e31"/></linearGradient><linearGradient id="g105" gradientUnits="userSpaceOnUse" x1="820" x2="1071"><stop offset="0" stop-color="#00a8d7"/><stop offset="0.0238" stop-color="#00a6d8"/><stop offset="0.0476" stop-color="#00a5d8"/><stop offset="0.0714" stop-color="#00a3d9"/><stop offset="0.0952" stop-color="#00a1da"/><stop offset="0.119" stop-color="#009fdb"/><stop offset="0.143" stop-color="#009cdc"/><stop offset="0.167" stop-color="#0097de"/><stop offset="0.19" stop-color="#0090d8"/><stop offset="0.214" stop-color="#0487d2"/><stop offset="0.238" stop-color="#1f89cf"/><stop offset="0.262" stop-color="#4c95d1"/><stop offset="0.286" stop-color="#7aa2d3"/><stop offset="0.31" stop-color="#93a1d0"/><stop offset="0.333" stop-color="#9089c2"/><stop offset="0.357" stop-color="#a877bc"/><stop offset="0.381" stop-color="#bf75bd"/><stop offset="0.405" stop-color="#d777bb"/><stop offset="0.429" stop-color="#e772b6"/><stop offset="0.452" stop-color="#ed69b2"/><stop offset="0.476" stop-color="#f05fad"/><stop offset="0.5" stop-color="#f058a7"/><stop offset="0.524" stop-color="#f051a1"/><stop offset="0.548" stop-color="#ef4a9b"/><stop offset="0.571" stop-color="#ef4394"/><stop offset="0.595" stop-color="#ee3e8c"/><stop offset="0.619" stop-color="#ee3985"/><stop offset="0.643" stop-color="#ed357e"/><stop offset="0.667" stop-color="#ed3177"/><stop offset="0.69" stop-color="#ed2e71"/><stop offset="0.714" stop-color="#ec2b6c"/><stop offset="0.738" stop-color="#ec2a67"/><stop offset="0.762" stop-color="#ec2961"/><stop offset="0.786" stop-color="#ec295b"/><stop offset="0.81" stop-color="#ec2a56"/><stop offset="0.833" stop-color="#eb2a51"/><stop offset="0.857" stop-color="#eb2b4c"/><stop offset="0.881" stop-color="#eb2b47"/><stop offset="0.905" stop-color="#eb2b43"/><stop offset="0.929" stop-color="#eb2c3f"/><stop offset="0.952" stop-color="#eb2c3c"/><stop offset="0.976" stop-color="#eb2d39"/><stop offset="1" stop-color="#eb2d37"/></linearGradient><linearGradient id="g106" gradientUnits="userSpaceOnUse" x1="821" x2="1066"><stop offset="0" stop-color="#00a6d8"/><stop offset="0.0244" stop-color="#00a5d8"/><stop offset="0.0488" stop-color="#00a3d9"/><stop offset="0.0732" stop-color="#00a1da"/><stop offset="0.0976" stop-color="#009fdb"/><stop offset="0.122" stop-color="#009cdc"/><stop offset="0.146" stop-color="#0098de"/><stop offset="0.171" stop-color="#0092da"/><stop offset="0.195" stop-color="#0088d3"/><stop offset="0.22" stop-color="#0882cd"/><stop offset="0.244" stop-color="#2987cc"/><stop offset="0.268" stop-color="#5693ce"/><stop offset="0.293" stop-color="#819ed0"/><stop offset="0.317" stop-color="#8c91c7"/><stop offset="0.341" stop-color="#877bbc"/><stop offset="0.366" stop-color="#a86bb7"/><stop offset="0.39" stop-color="#c370ba"/><stop offset="0.415" stop-color="#d971b8"/><stop offset="0.439" stop-color="#e86cb3"/><stop offset="0.463" stop-color="#ec63af"/><stop offset="0.488" stop-color="#f059aa"/><stop offset="0.512" stop-color="#f053a4"/><stop offset="0.537" stop-color="#ef4c9e"/><stop offset="0.561" stop-color="#ef4698"/><stop offset="0.585" stop-color="#ee3f93"/><stop offset="0.61" stop-color="#ee3a8c"/><stop offset="0.634" stop-color="#ee3684"/><stop offset="0.659" stop-color="#ed327e"/><stop offset="0.683" stop-color="#ed2f77"/><stop offset="0.707" stop-color="#ec2c72"/><stop offset="0.732" stop-color="#ec2a6d"/><stop offset="0.756" stop-color="#ec2968"/><stop offset="0.78" stop-color="#ec2865"/><stop offset="0.805" stop-color="#ec295f"/><stop offset="0.829" stop-color="#ec295a"/><stop offset="0.854" stop-color="#ec2a55"/><stop offset="0.878" stop-color="#eb2a50"/><stop offset="0.902" stop-color="#eb2b4c"/><stop offset="0.927" stop-color="#eb2b47"/><stop offset="0.951" stop-color="#eb2b43"/><stop offset="0.976" stop-color="#eb2c40"/><stop offset="1" stop-color="#eb2c3d"/></linearGradient><linearGradient id="g107" gradientUnits="userSpaceOnUse" x1="822" x2="1061"><stop offset="0" stop-color="#00a4d9"/><stop offset="0.025" stop-color="#00a3d9"/><stop offset="0.05" stop-color="#00a1da"/><stop offset="0.075" stop-color="#009fdb"/><stop offset="0.1" stop-color="#009cdc"/><stop offset="0.125" stop-color="#0099de"/><stop offset="0.15" stop-color="#0093db"/><stop offset="0.175" stop-color="#008bd5"/><stop offset="0.2" stop-color="#0082cf"/><stop offset="0.225" stop-color="#0e7dca"/><stop offset="0.25" stop-color="#3486ca"/><stop offset="0.275" stop-color="#5f90cb"/><stop offset="0.3" stop-color="#8295ca"/><stop offset="0.325" stop-color="#8580bd"/><stop offset="0.35" stop-color="#9270b8"/><stop offset="0.375" stop-color="#ad68b7"/><stop offset="0.4" stop-color="#c66cb7"/><stop offset="0.425" stop-color="#da6bb4"/><stop offset="0.45" stop-color="#e866b0"/><stop offset="0.475" stop-color="#ec5dac"/><stop offset="0.5" stop-color="#ef54a7"/><stop offset="0.525" stop-color="#ef4da2"/><stop offset="0.55" stop-color="#ef489c"/><stop offset="0.575" stop-color="#ee4196"/><stop offset="0.6" stop-color="#ee3b91"/><stop offset="0.625" stop-color="#ee368b"/><stop offset="0.65" stop-color="#ed3384"/><stop offset="0.675" stop-color="#ed2f7e"/><stop offset="0.7" stop-color="#ed2c78"/><stop offset="0.725" stop-color="#ec2a72"/><stop offset="0.75" stop-color="#ec296e"/><stop offset="0.775" stop-color="#ec286a"/><stop offset="0.8" stop-color="#ec2866"/><stop offset="0.825" stop-color="#ec2863"/><stop offset="0.85" stop-color="#ec295e"/><stop offset="0.875" stop-color="#ec2959"/><stop offset="0.9" stop-color="#ec2a54"/><stop offset="0.925" stop-color="#eb2a50"/><stop offset="0.95" stop-color="#eb2b4b"/><stop offset="0.975" stop-color="#eb2b47"/><stop offset="1" stop-color="#eb2b44"/></linearGradient><linearGradient id="g108" gradientUnits="userSpaceOnUse" x1="822" x2="1056"><stop offset="0" stop-color="#00a3d9"/><stop offset="0.0256" stop-color="#00a1da"/><stop offset="0.0513" stop-color="#009fdb"/><stop offset="0.0769" stop-color="#009ddc"/><stop offset="0.103" stop-color="#009add"/><stop offset="0.128" stop-color="#0096dc"/><stop offset="0.154" stop-color="#008fd8"/><stop offset="0.179" stop-color="#0086d2"/><stop offset="0.205" stop-color="#007ccb"/><stop offset="0.231" stop-color="#127bc7"/><stop offset="0.256" stop-color="#3882c7"/><stop offset="0.282" stop-color="#628cc8"/><stop offset="0.308" stop-color="#7c8ac4"/><stop offset="0.333" stop-color="#7c75b8"/><stop offset="0.359" stop-color="#9466b3"/><stop offset="0.385" stop-color="#ae64b5"/><stop offset="0.41" stop-color="#c768b5"/><stop offset="0.436" stop-color="#da66b2"/><stop offset="0.462" stop-color="#e861ad"/><stop offset="0.487" stop-color="#eb58a9"/><stop offset="0.513" stop-color="#ee4fa5"/><stop offset="0.538" stop-color="#ef49a0"/><stop offset="0.564" stop-color="#ef449a"/><stop offset="0.59" stop-color="#ee3e95"/><stop offset="0.615" stop-color="#ee3890"/><stop offset="0.641" stop-color="#ed338a"/><stop offset="0.667" stop-color="#ed3084"/><stop offset="0.692" stop-color="#ed2d7e"/><stop offset="0.718" stop-color="#ec2b78"/><stop offset="0.744" stop-color="#ec2973"/><stop offset="0.769" stop-color="#ec286f"/><stop offset="0.795" stop-color="#ec276b"/><stop offset="0.821" stop-color="#ec2768"/><stop offset="0.846" stop-color="#ec2865"/><stop offset="0.872" stop-color="#ec2862"/><stop offset="0.897" stop-color="#ec295d"/><stop offset="0.923" stop-color="#ec2958"/><stop offset="0.949" stop-color="#ec2a53"/><stop offset="0.974" stop-color="#eb2a4f"/><stop offset="1" stop-color="#eb2b4b"/></linearGradient><linearGradient id="g109" gradientUnits="userSpaceOnUse" x1="823" x2="1051"><stop offset="0" stop-color="#00a1da"/><stop offset="0.0263" stop-color="#009fdb"/><stop offset="0.0526" stop-color="#009ddc"/><stop offset="0.0789" stop-color="#009add"/><stop offset="0.105" stop-color="#0097dd"/><stop offset="0.132" stop-color="#0091d9"/><stop offset="0.158" stop-color="#0089d4"/><stop offset="0.184" stop-color="#0081ce"/><stop offset="0.211" stop-color="#0277c7"/><stop offset="0.237" stop-color="#1b78c4"/><stop offset="0.263" stop-color="#417fc3"/><stop offset="0.289" stop-color="#6987c3"/><stop offset="0.316" stop-color="#777bbb"/><stop offset="0.342" stop-color="#7469b2"/><stop offset="0.368" stop-color="#995caf"/><stop offset="0.395" stop-color="#b361b4"/><stop offset="0.421" stop-color="#cb64b3"/><stop offset="0.447" stop-color="#db61af"/><stop offset="0.474" stop-color="#e75caa"/><stop offset="0.5" stop-color="#eb53a7"/><stop offset="0.526" stop-color="#ee4aa3"/><stop offset="0.553" stop-color="#ee459e"/><stop offset="0.579" stop-color="#ee4098"/><stop offset="0.605" stop-color="#ee3a93"/><stop offset="0.632" stop-color="#ed358e"/><stop offset="0.658" stop-color="#ed308a"/><stop offset="0.684" stop-color="#ed2d84"/><stop offset="0.711" stop-color="#ed2b7e"/><stop offset="0.737" stop-color="#ec2979"/><stop offset="0.763" stop-color="#ec2874"/><stop offset="0.789" stop-color="#ec2770"/><stop offset="0.816" stop-color="#ec276d"/><stop offset="0.842" stop-color="#ec276a"/><stop offset="0.868" stop-color="#ec2767"/><stop offset="0.895" stop-color="#ec2864"/><stop offset="0.921" stop-color="#ec2860"/><stop offset="0.947" stop-color="#ec295b"/><stop offset="0.974" stop-color="#ec2957"/><stop offset="1" stop-color="#ec2a53"/></linearGradient><linearGradient id="g110" gradientUnits="userSpaceOnUse" x1="824" x2="1046"><stop offset="0" stop-color="#009fdb"/><stop offset="0.027" stop-color="#009ddc"/><stop offset="0.0541" stop-color="#009bdd"/><stop offset="0.0811" stop-color="#0098de"/><stop offset="0.108" stop-color="#0092da"/><stop offset="0.135" stop-color="#008cd6"/><stop offset="0.162" stop-color="#0084d0"/><stop offset="0.189" stop-color="#007ac9"/><stop offset="0.216" stop-color="#0873c4"/><stop offset="0.243" stop-color="#2375c1"/><stop offset="0.27" stop-color="#497bc0"/><stop offset="0.297" stop-color="#6a7ebe"/><stop offset="0.324" stop-color="#726cb3"/><stop offset="0.351" stop-color="#7e60b0"/><stop offset="0.378" stop-color="#9d59ae"/><stop offset="0.405" stop-color="#b75eb2"/><stop offset="0.432" stop-color="#cd60b0"/><stop offset="0.459" stop-color="#dc5cac"/><stop offset="0.486" stop-color="#e757a8"/><stop offset="0.514" stop-color="#eb4ea4"/><stop offset="0.541" stop-color="#ee46a0"/><stop offset="0.568" stop-color="#ee419c"/><stop offset="0.595" stop-color="#ee3c97"/><stop offset="0.622" stop-color="#ee3792"/><stop offset="0.649" stop-color="#ed328d"/><stop offset="0.676" stop-color="#ed2e89"/><stop offset="0.703" stop-color="#ed2b83"/><stop offset="0.73" stop-color="#ec297e"/><stop offset="0.757" stop-color="#ec2879"/><stop offset="0.784" stop-color="#ec2775"/><stop offset="0.811" stop-color="#ec2671"/><stop offset="0.838" stop-color="#ec266e"/><stop offset="0.865" stop-color="#ec276b"/><stop offset="0.892" stop-color="#ec2769"/><stop offset="0.919" stop-color="#ec2866"/><stop offset="0.946" stop-color="#ec2863"/><stop offset="0.973" stop-color="#ec295f"/><stop offset="1" stop-color="#ec295a"/></linearGradient><linearGradient id="g111" gradientUnits="userSpaceOnUse" x1="824" x2="1041"><stop offset="0" stop-color="#009ddc"/><stop offset="0.027" stop-color="#009bdd"/><stop offset="0.0541" stop-color="#0099de"/><stop offset="0.0811" stop-color="#0095dc"/><stop offset="0.108" stop-color="#0090d8"/><stop offset="0.135" stop-color="#0089d4"/><stop offset="0.162" stop-color="#0081ce"/><stop offset="0.189" stop-color="#0078c8"/><stop offset="0.216" stop-color="#0870c2"/><stop offset="0.243" stop-color="#1f70be"/><stop offset="0.27" stop-color="#4174bc"/><stop offset="0.297" stop-color="#6277bb"/><stop offset="0.324" stop-color="#6c66b0"/><stop offset="0.351" stop-color="#6b5aab"/><stop offset="0.378" stop-color="#9653ab"/><stop offset="0.405" stop-color="#af5ab0"/><stop offset="0.432" stop-color="#c55caf"/><stop offset="0.459" stop-color="#d65aac"/><stop offset="0.486" stop-color="#e356a8"/><stop offset="0.514" stop-color="#e84fa4"/><stop offset="0.541" stop-color="#eb47a0"/><stop offset="0.568" stop-color="#ee3f9d"/><stop offset="0.595" stop-color="#ee3b98"/><stop offset="0.622" stop-color="#ed3794"/><stop offset="0.649" stop-color="#ed338f"/><stop offset="0.676" stop-color="#ed2f8b"/><stop offset="0.703" stop-color="#ed2b87"/><stop offset="0.73" stop-color="#ec2982"/><stop offset="0.757" stop-color="#ec277d"/><stop offset="0.784" stop-color="#ec2679"/><stop offset="0.811" stop-color="#ec2675"/><stop offset="0.838" stop-color="#ec2672"/><stop offset="0.865" stop-color="#ec266f"/><stop offset="0.892" stop-color="#ec276c"/><stop offset="0.919" stop-color="#ec276a"/><stop offset="0.946" stop-color="#ec2767"/><stop offset="0.973" stop-color="#ec2865"/><stop offset="1" stop-color="#ec2862"/></linearGradient><linearGradient id="g112" gradientUnits="userSpaceOnUse" x1="825" x2="1036"><stop offset="0" stop-color="#009bdc"/><stop offset="0.0278" stop-color="#0099dd"/><stop offset="0.0556" stop-color="#0096dc"/><stop offset="0.0833" stop-color="#0091d9"/><stop offset="0.111" stop-color="#008bd5"/><stop offset="0.139" stop-color="#0084d0"/><stop offset="0.167" stop-color="#007bca"/><stop offset="0.194" stop-color="#0473c4"/><stop offset="0.222" stop-color="#0d6cbe"/><stop offset="0.25" stop-color="#276cba"/><stop offset="0.278" stop-color="#486fb8"/><stop offset="0.306" stop-color="#5f6cb4"/><stop offset="0.333" stop-color="#655cab"/><stop offset="0.361" stop-color="#7c53aa"/><stop offset="0.389" stop-color="#9b52ab"/><stop offset="0.417" stop-color="#b257ae"/><stop offset="0.444" stop-color="#c859ad"/><stop offset="0.472" stop-color="#d756a9"/><stop offset="0.5" stop-color="#e452a5"/><stop offset="0.528" stop-color="#e84ba2"/><stop offset="0.556" stop-color="#eb439f"/><stop offset="0.583" stop-color="#ee3c9b"/><stop offset="0.611" stop-color="#ed3897"/><stop offset="0.639" stop-color="#ed3492"/><stop offset="0.667" stop-color="#ed308e"/><stop offset="0.694" stop-color="#ed2d8a"/><stop offset="0.722" stop-color="#ec2987"/><stop offset="0.75" stop-color="#ec2782"/><stop offset="0.778" stop-color="#ec267e"/><stop offset="0.806" stop-color="#ec257a"/><stop offset="0.833" stop-color="#ec2576"/><stop offset="0.861" stop-color="#ec2573"/><stop offset="0.889" stop-color="#ec2670"/><stop offset="0.917" stop-color="#ec266e"/><stop offset="0.944" stop-color="#ec276b"/><stop offset="0.972" stop-color="#ec2769"/><stop offset="1" stop-color="#ec2867"/></linearGradient><linearGradient id="g113" gradientUnits="userSpaceOnUse" x1="826" x2="1031"><stop offset="0" stop-color="#0099dd"/><stop offset="0.0286" stop-color="#0096dd"/><stop offset="0.0571" stop-color="#0092da"/><stop offset="0.0857" stop-color="#008dd6"/><stop offset="0.114" stop-color="#0086d2"/><stop offset="0.143" stop-color="#007fcd"/><stop offset="0.171" stop-color="#0176c7"/><stop offset="0.2" stop-color="#076fc1"/><stop offset="0.229" stop-color="#1368ba"/><stop offset="0.257" stop-color="#2e67b6"/><stop offset="0.286" stop-color="#4e69b4"/><stop offset="0.314" stop-color="#5e5eac"/><stop offset="0.343" stop-color="#5f53a7"/><stop offset="0.371" stop-color="#854ba6"/><stop offset="0.4" stop-color="#a050ab"/><stop offset="0.429" stop-color="#b654ad"/><stop offset="0.457" stop-color="#cb56ab"/><stop offset="0.486" stop-color="#d852a7"/><stop offset="0.514" stop-color="#e54ea3"/><stop offset="0.543" stop-color="#e847a0"/><stop offset="0.571" stop-color="#eb409d"/><stop offset="0.6" stop-color="#ed3999"/><stop offset="0.629" stop-color="#ed3595"/><stop offset="0.657" stop-color="#ed3291"/><stop offset="0.686" stop-color="#ed2e8d"/><stop offset="0.714" stop-color="#ed2b8a"/><stop offset="0.743" stop-color="#ec2886"/><stop offset="0.771" stop-color="#ec2683"/><stop offset="0.8" stop-color="#ec257f"/><stop offset="0.829" stop-color="#ec257b"/><stop offset="0.857" stop-color="#ec2577"/><stop offset="0.886" stop-color="#ec2575"/><stop offset="0.914" stop-color="#ec2672"/><stop offset="0.943" stop-color="#ec266f"/><stop offset="0.971" stop-color="#ec276d"/><stop offset="1" stop-color="#ec276a"/></linearGradient><linearGradient id="g114" gradientUnits="userSpaceOnUse" x1="826" x2="1026"><stop offset="0" stop-color="#0098de"/><stop offset="0.0294" stop-color="#0094db"/><stop offset="0.0588" stop-color="#008fd8"/><stop offset="0.0882" stop-color="#0089d4"/><stop offset="0.118" stop-color="#0083cf"/><stop offset="0.147" stop-color="#007aca"/><stop offset="0.176" stop-color="#0473c4"/><stop offset="0.206" stop-color="#0a6bbe"/><stop offset="0.235" stop-color="#1663b7"/><stop offset="0.265" stop-color="#3162b3"/><stop offset="0.294" stop-color="#4d62b0"/><stop offset="0.324" stop-color="#5a53a6"/><stop offset="0.353" stop-color="#5c4ca4"/><stop offset="0.382" stop-color="#8a48a5"/><stop offset="0.412" stop-color="#a24eab"/><stop offset="0.441" stop-color="#b851ab"/><stop offset="0.471" stop-color="#cb53a9"/><stop offset="0.5" stop-color="#d84fa6"/><stop offset="0.529" stop-color="#e44ba2"/><stop offset="0.559" stop-color="#e7449f"/><stop offset="0.588" stop-color="#ea3d9b"/><stop offset="0.618" stop-color="#ed3698"/><stop offset="0.647" stop-color="#ed3394"/><stop offset="0.676" stop-color="#ed3090"/><stop offset="0.706" stop-color="#ed2d8d"/><stop offset="0.735" stop-color="#ec2a89"/><stop offset="0.765" stop-color="#ec2786"/><stop offset="0.794" stop-color="#ec2583"/><stop offset="0.824" stop-color="#ec247f"/><stop offset="0.853" stop-color="#ec247c"/><stop offset="0.882" stop-color="#ec2579"/><stop offset="0.912" stop-color="#ec2576"/><stop offset="0.941" stop-color="#ec2573"/><stop offset="0.971" stop-color="#ec2670"/><stop offset="1" stop-color="#ec266e"/></linearGradient><linearGradient id="g115" gradientUnits="userSpaceOnUse" x1="827" x2="1021"><stop offset="0" stop-color="#0095dc"/><stop offset="0.0303" stop-color="#0090d9"/><stop offset="0.0606" stop-color="#008bd5"/><stop offset="0.0909" stop-color="#0085d1"/><stop offset="0.121" stop-color="#007ecc"/><stop offset="0.152" stop-color="#0276c6"/><stop offset="0.182" stop-color="#076fc1"/><stop offset="0.212" stop-color="#0e66ba"/><stop offset="0.242" stop-color="#1d5fb3"/><stop offset="0.273" stop-color="#375cae"/><stop offset="0.303" stop-color="#4c58aa"/><stop offset="0.333" stop-color="#554ca3"/><stop offset="0.364" stop-color="#6d48a4"/><stop offset="0.394" stop-color="#8f47a5"/><stop offset="0.424" stop-color="#a64dab"/><stop offset="0.455" stop-color="#bb4fa9"/><stop offset="0.485" stop-color="#cd50a7"/><stop offset="0.515" stop-color="#da4ca4"/><stop offset="0.545" stop-color="#e448a0"/><stop offset="0.576" stop-color="#e7419d"/><stop offset="0.606" stop-color="#ea3a9a"/><stop offset="0.636" stop-color="#ed3497"/><stop offset="0.667" stop-color="#ed3193"/><stop offset="0.697" stop-color="#ed2e90"/><stop offset="0.727" stop-color="#ec2b8c"/><stop offset="0.758" stop-color="#ec2889"/><stop offset="0.788" stop-color="#ec2686"/><stop offset="0.818" stop-color="#ec2483"/><stop offset="0.848" stop-color="#ec2480"/><stop offset="0.879" stop-color="#ec247d"/><stop offset="0.909" stop-color="#ec247a"/><stop offset="0.939" stop-color="#ec2577"/><stop offset="0.97" stop-color="#ec2574"/><stop offset="1" stop-color="#ec2672"/></linearGradient><linearGradient id="g116" gradientUnits="userSpaceOnUse" x1="827" x2="1016"><stop offset="0" stop-color="#0092da"/><stop offset="0.0312" stop-color="#008dd7"/><stop offset="0.0625" stop-color="#0088d3"/><stop offset="0.0938" stop-color="#0082cf"/><stop offset="0.125" stop-color="#007ac9"/><stop offset="0.156" stop-color="#0473c4"/><stop offset="0.188" stop-color="#0a6cbe"/><stop offset="0.219" stop-color="#1162b7"/><stop offset="0.25" stop-color="#205ab0"/><stop offset="0.281" stop-color="#3956aa"/><stop offset="0.312" stop-color="#4c4ea4"/><stop offset="0.344" stop-color="#5146a0"/><stop offset="0.375" stop-color="#7343a2"/><stop offset="0.406" stop-color="#9246a5"/><stop offset="0.438" stop-color="#a84ba9"/><stop offset="0.469" stop-color="#bc4da8"/><stop offset="0.5" stop-color="#cd4da6"/><stop offset="0.531" stop-color="#da49a2"/><stop offset="0.562" stop-color="#e4459f"/><stop offset="0.594" stop-color="#e73f9c"/><stop offset="0.625" stop-color="#ea3899"/><stop offset="0.656" stop-color="#ec3296"/><stop offset="0.688" stop-color="#ed2f93"/><stop offset="0.719" stop-color="#ec2c8f"/><stop offset="0.75" stop-color="#ec2a8c"/><stop offset="0.781" stop-color="#ec2889"/><stop offset="0.812" stop-color="#ec2686"/><stop offset="0.844" stop-color="#ec2484"/><stop offset="0.875" stop-color="#ec2381"/><stop offset="0.906" stop-color="#ec247e"/><stop offset="0.938" stop-color="#ec247b"/><stop offset="0.969" stop-color="#ec2578"/><stop offset="1" stop-color="#ec2575"/></linearGradient><linearGradient id="g117" gradientUnits="userSpaceOnUse" x1="828" x2="1011"><stop offset="0" stop-color="#008fd8"/><stop offset="0.0323" stop-color="#008ad4"/><stop offset="0.0645" stop-color="#0084d0"/><stop offset="0.0968" stop-color="#007dcb"/><stop offset="0.129" stop-color="#0276c6"/><stop offset="0.161" stop-color="#0770c1"/><stop offset="0.194" stop-color="#0d67bb"/><stop offset="0.226" stop-color="#165db3"/><stop offset="0.258" stop-color="#2655ab"/><stop offset="0.29" stop-color="#3c51a7"/><stop offset="0.323" stop-color="#4c449e"/><stop offset="0.355" stop-color="#50419e"/><stop offset="0.387" stop-color="#7d40a1"/><stop offset="0.419" stop-color="#9746a6"/><stop offset="0.452" stop-color="#ac4aa8"/><stop offset="0.484" stop-color="#bf4ba7"/><stop offset="0.516" stop-color="#cf4aa4"/><stop offset="0.548" stop-color="#db47a1"/><stop offset="0.581" stop-color="#e4429d"/><stop offset="0.613" stop-color="#e73c9b"/><stop offset="0.645" stop-color="#ea3698"/><stop offset="0.677" stop-color="#ec3095"/><stop offset="0.71" stop-color="#ec2d92"/><stop offset="0.742" stop-color="#ec2b8f"/><stop offset="0.774" stop-color="#ec298c"/><stop offset="0.806" stop-color="#ec2789"/><stop offset="0.839" stop-color="#ec2586"/><stop offset="0.871" stop-color="#ec2484"/><stop offset="0.903" stop-color="#ec2382"/><stop offset="0.935" stop-color="#ec247f"/><stop offset="0.968" stop-color="#ec247c"/><stop offset="1" stop-color="#ec2579"/></linearGradient><linearGradient id="g118" gradientUnits="userSpaceOnUse" x1="829" x2="1006"><stop offset="0" stop-color="#008bd5"/><stop offset="0.0333" stop-color="#0086d2"/><stop offset="0.0667" stop-color="#0080cd"/><stop offset="0.1" stop-color="#0078c8"/><stop offset="0.133" stop-color="#0472c4"/><stop offset="0.167" stop-color="#0a6bbe"/><stop offset="0.2" stop-color="#1163b7"/><stop offset="0.233" stop-color="#1b58af"/><stop offset="0.267" stop-color="#2d4ea7"/><stop offset="0.3" stop-color="#3e48a2"/><stop offset="0.333" stop-color="#493f9c"/><stop offset="0.367" stop-color="#593e9e"/><stop offset="0.4" stop-color="#8640a1"/><stop offset="0.433" stop-color="#9c45a6"/><stop offset="0.467" stop-color="#b048a7"/><stop offset="0.5" stop-color="#c24aa6"/><stop offset="0.533" stop-color="#d048a3"/><stop offset="0.567" stop-color="#dc449f"/><stop offset="0.6" stop-color="#e4409c"/><stop offset="0.633" stop-color="#e73a99"/><stop offset="0.667" stop-color="#e93497"/><stop offset="0.7" stop-color="#ec2f94"/><stop offset="0.733" stop-color="#ec2c91"/><stop offset="0.767" stop-color="#ec2a8e"/><stop offset="0.8" stop-color="#ec288b"/><stop offset="0.833" stop-color="#ec2689"/><stop offset="0.867" stop-color="#ec2586"/><stop offset="0.9" stop-color="#ec2484"/><stop offset="0.933" stop-color="#ec2382"/><stop offset="0.967" stop-color="#ec237f"/><stop offset="1" stop-color="#ec247d"/></linearGradient><linearGradient id="g119" gradientUnits="userSpaceOnUse" x1="830" x2="1001"><stop offset="0" stop-color="#0088d3"/><stop offset="0.0345" stop-color="#0082cf"/><stop offset="0.069" stop-color="#007bca"/><stop offset="0.103" stop-color="#0275c6"/><stop offset="0.138" stop-color="#076fc1"/><stop offset="0.172" stop-color="#0d67bb"/><stop offset="0.207" stop-color="#155eb3"/><stop offset="0.241" stop-color="#2053ab"/><stop offset="0.276" stop-color="#304aa4"/><stop offset="0.31" stop-color="#413e9b"/><stop offset="0.345" stop-color="#483c9b"/><stop offset="0.379" stop-color="#6c3d9f"/><stop offset="0.414" stop-color="#8c40a2"/><stop offset="0.448" stop-color="#a045a7"/><stop offset="0.483" stop-color="#b347a6"/><stop offset="0.517" stop-color="#c549a5"/><stop offset="0.552" stop-color="#d246a1"/><stop offset="0.586" stop-color="#dd429e"/><stop offset="0.621" stop-color="#e43e9b"/><stop offset="0.655" stop-color="#e73899"/><stop offset="0.69" stop-color="#e93396"/><stop offset="0.724" stop-color="#ec2d94"/><stop offset="0.759" stop-color="#ec2b91"/><stop offset="0.793" stop-color="#ec298e"/><stop offset="0.828" stop-color="#ec278b"/><stop offset="0.862" stop-color="#ec2689"/><stop offset="0.897" stop-color="#ec2587"/><stop offset="0.931" stop-color="#ec2485"/><stop offset="0.966" stop-color="#ec2383"/><stop offset="1" stop-color="#ec2380"/></linearGradient><linearGradient id="g120" gradientUnits="userSpaceOnUse" x1="830" x2="996"><stop offset="0" stop-color="#0085d1"/><stop offset="0.0357" stop-color="#007fcd"/><stop offset="0.0714" stop-color="#0078c8"/><stop offset="0.107" stop-color="#0473c4"/><stop offset="0.143" stop-color="#0a6cbe"/><stop offset="0.179" stop-color="#1064b8"/><stop offset="0.214" stop-color="#195ab1"/><stop offset="0.25" stop-color="#254ea8"/><stop offset="0.286" stop-color="#3145a1"/><stop offset="0.321" stop-color="#413999"/><stop offset="0.357" stop-color="#48399a"/><stop offset="0.393" stop-color="#733b9e"/><stop offset="0.429" stop-color="#8f40a2"/><stop offset="0.464" stop-color="#a244a6"/><stop offset="0.5" stop-color="#b546a5"/><stop offset="0.536" stop-color="#c647a4"/><stop offset="0.571" stop-color="#d244a0"/><stop offset="0.607" stop-color="#dd419d"/><stop offset="0.643" stop-color="#e43c9a"/><stop offset="0.679" stop-color="#e73798"/><stop offset="0.714" stop-color="#e93296"/><stop offset="0.75" stop-color="#ec2d93"/><stop offset="0.786" stop-color="#ec2a91"/><stop offset="0.821" stop-color="#ec298e"/><stop offset="0.857" stop-color="#ec278b"/><stop offset="0.893" stop-color="#ec2689"/><stop offset="0.929" stop-color="#ec2587"/><stop offset="0.964" stop-color="#ec2485"/><stop offset="1" stop-color="#ec2483"/></linearGradient><linearGradient id="g121" gradientUnits="userSpaceOnUse" x1="831" x2="991"><stop offset="0" stop-color="#0081ce"/><stop offset="0.037" stop-color="#007bca"/><stop offset="0.0741" stop-color="#0275c6"/><stop offset="0.111" stop-color="#076fc1"/><stop offset="0.148" stop-color="#0d68bb"/><stop offset="0.185" stop-color="#145fb4"/><stop offset="0.222" stop-color="#1e55ad"/><stop offset="0.259" stop-color="#2a49a4"/><stop offset="0.296" stop-color="#363e9d"/><stop offset="0.333" stop-color="#413798"/><stop offset="0.37" stop-color="#4c389a"/><stop offset="0.407" stop-color="#7e3b9f"/><stop offset="0.444" stop-color="#9440a3"/><stop offset="0.481" stop-color="#a644a6"/><stop offset="0.519" stop-color="#b845a4"/><stop offset="0.556" stop-color="#c846a3"/><stop offset="0.593" stop-color="#d4439f"/><stop offset="0.63" stop-color="#de3f9c"/><stop offset="0.667" stop-color="#e43b9a"/><stop offset="0.704" stop-color="#e73697"/><stop offset="0.741" stop-color="#e93195"/><stop offset="0.778" stop-color="#eb2c93"/><stop offset="0.815" stop-color="#ec2a90"/><stop offset="0.852" stop-color="#ec288e"/><stop offset="0.889" stop-color="#ec278b"/><stop offset="0.926" stop-color="#ec2689"/><stop offset="0.963" stop-color="#ec2587"/><stop offset="1" stop-color="#ec2485"/></linearGradient><linearGradient id="g122" gradientUnits="userSpaceOnUse" x1="832" x2="986"><stop offset="0" stop-color="#007dcc"/><stop offset="0.0385" stop-color="#0177c7"/><stop offset="0.0769" stop-color="#0572c3"/><stop offset="0.115" stop-color="#0a6cbe"/><stop offset="0.154" stop-color="#1064b8"/><stop offset="0.192" stop-color="#185bb1"/><stop offset="0.231" stop-color="#2350a9"/><stop offset="0.269" stop-color="#2d45a1"/><stop offset="0.308" stop-color="#3b3697"/><stop offset="0.346" stop-color="#423698"/><stop offset="0.385" stop-color="#63399d"/><stop offset="0.423" stop-color="#853c9f"/><stop offset="0.462" stop-color="#9840a4"/><stop offset="0.5" stop-color="#aa43a5"/><stop offset="0.538" stop-color="#bc45a4"/><stop offset="0.577" stop-color="#ca44a2"/><stop offset="0.615" stop-color="#d5419f"/><stop offset="0.654" stop-color="#df3e9c"/><stop offset="0.692" stop-color="#e43a99"/><stop offset="0.731" stop-color="#e73597"/><stop offset="0.769" stop-color="#e93095"/><stop offset="0.808" stop-color="#eb2b93"/><stop offset="0.846" stop-color="#ec2990"/><stop offset="0.885" stop-color="#ec288e"/><stop offset="0.923" stop-color="#ec278c"/><stop offset="0.962" stop-color="#ec268a"/><stop offset="1" stop-color="#ec2588"/></linearGradient><linearGradient id="g123" gradientUnits="userSpaceOnUse" x1="833" x2="980"><stop offset="0" stop-color="#0079c9"/><stop offset="0.04" stop-color="#0374c5"/><stop offset="0.08" stop-color="#076fc1"/><stop offset="0.12" stop-color="#0d68bb"/><stop offset="0.16" stop-color="#1360b5"/><stop offset="0.2" stop-color="#1c57ae"/><stop offset="0.24" stop-color="#284ba5"/><stop offset="0.28" stop-color="#31419e"/><stop offset="0.32" stop-color="#3d3496"/><stop offset="0.36" stop-color="#443598"/><stop offset="0.4" stop-color="#6c399d"/><stop offset="0.44" stop-color="#893ca0"/><stop offset="0.48" stop-color="#9b40a4"/><stop offset="0.52" stop-color="#ad43a4"/><stop offset="0.56" stop-color="#bd44a3"/><stop offset="0.6" stop-color="#cb44a1"/><stop offset="0.64" stop-color="#d5409e"/><stop offset="0.68" stop-color="#df3e9b"/><stop offset="0.72" stop-color="#e43999"/><stop offset="0.76" stop-color="#e63497"/><stop offset="0.8" stop-color="#e93095"/><stop offset="0.84" stop-color="#eb2c93"/><stop offset="0.88" stop-color="#ec2991"/><stop offset="0.92" stop-color="#ec288e"/><stop offset="0.96" stop-color="#ec278c"/><stop offset="1" stop-color="#ec278a"/></linearGradient><linearGradient id="g124" gradientUnits="userSpaceOnUse" x1="834" x2="975"><stop offset="0" stop-color="#0176c7"/><stop offset="0.0417" stop-color="#0571c3"/><stop offset="0.0833" stop-color="#0a6bbe"/><stop offset="0.125" stop-color="#1064b8"/><stop offset="0.167" stop-color="#175cb1"/><stop offset="0.208" stop-color="#2152aa"/><stop offset="0.25" stop-color="#2b47a3"/><stop offset="0.292" stop-color="#363b9a"/><stop offset="0.333" stop-color="#3f3497"/><stop offset="0.375" stop-color="#483698"/><stop offset="0.417" stop-color="#773a9e"/><stop offset="0.458" stop-color="#8e3da1"/><stop offset="0.5" stop-color="#9f41a5"/><stop offset="0.542" stop-color="#b043a4"/><stop offset="0.583" stop-color="#c044a3"/><stop offset="0.625" stop-color="#cc43a0"/><stop offset="0.667" stop-color="#d7409d"/><stop offset="0.708" stop-color="#e03d9b"/><stop offset="0.75" stop-color="#e43898"/><stop offset="0.792" stop-color="#e73496"/><stop offset="0.833" stop-color="#e93095"/><stop offset="0.875" stop-color="#eb2c93"/><stop offset="0.917" stop-color="#ec2991"/><stop offset="0.958" stop-color="#ec288f"/><stop offset="1" stop-color="#ec288c"/></linearGradient><linearGradient id="g125" gradientUnits="userSpaceOnUse" x1="835" x2="970"><stop offset="0" stop-color="#0473c4"/><stop offset="0.0435" stop-color="#086ec0"/><stop offset="0.087" stop-color="#0d68bb"/><stop offset="0.13" stop-color="#1360b5"/><stop offset="0.174" stop-color="#1c57ae"/><stop offset="0.217" stop-color="#264da6"/><stop offset="0.261" stop-color="#2f43a0"/><stop offset="0.304" stop-color="#3c3496"/><stop offset="0.348" stop-color="#413597"/><stop offset="0.391" stop-color="#5f389c"/><stop offset="0.435" stop-color="#813a9e"/><stop offset="0.478" stop-color="#933ea2"/><stop offset="0.522" stop-color="#a341a5"/><stop offset="0.565" stop-color="#b343a4"/><stop offset="0.609" stop-color="#c344a2"/><stop offset="0.652" stop-color="#ce42a0"/><stop offset="0.696" stop-color="#d83f9d"/><stop offset="0.739" stop-color="#e13c9a"/><stop offset="0.783" stop-color="#e43898"/><stop offset="0.826" stop-color="#e73496"/><stop offset="0.87" stop-color="#e93094"/><stop offset="0.913" stop-color="#eb2c93"/><stop offset="0.957" stop-color="#ec2991"/><stop offset="1" stop-color="#ec298f"/></linearGradient><linearGradient id="g126" gradientUnits="userSpaceOnUse" x1="836" x2="965"><stop offset="0" stop-color="#0671c2"/><stop offset="0.0455" stop-color="#0b6bbd"/><stop offset="0.0909" stop-color="#1064b8"/><stop offset="0.136" stop-color="#175cb2"/><stop offset="0.182" stop-color="#2053ab"/><stop offset="0.227" stop-color="#2a49a3"/><stop offset="0.273" stop-color="#333e9d"/><stop offset="0.318" stop-color="#3d3496"/><stop offset="0.364" stop-color="#443597"/><stop offset="0.409" stop-color="#6a399d"/><stop offset="0.455" stop-color="#863b9f"/><stop offset="0.5" stop-color="#973fa3"/><stop offset="0.545" stop-color="#a742a4"/><stop offset="0.591" stop-color="#b743a3"/><stop offset="0.636" stop-color="#c544a2"/><stop offset="0.682" stop-color="#cf419f"/><stop offset="0.727" stop-color="#d93f9d"/><stop offset="0.773" stop-color="#e23c9a"/><stop offset="0.818" stop-color="#e43898"/><stop offset="0.864" stop-color="#e73496"/><stop offset="0.909" stop-color="#e93094"/><stop offset="0.955" stop-color="#eb2c93"/><stop offset="1" stop-color="#ec2a91"/></linearGradient><linearGradient id="g127" gradientUnits="userSpaceOnUse" x1="837" x2="960"><stop offset="0" stop-color="#086ec0"/><stop offset="0.0476" stop-color="#0d67bb"/><stop offset="0.0952" stop-color="#1360b5"/><stop offset="0.143" stop-color="#1b58af"/><stop offset="0.19" stop-color="#254ea7"/><stop offset="0.238" stop-color="#2d45a1"/><stop offset="0.286" stop-color="#383899"/><stop offset="0.333" stop-color="#3f3497"/><stop offset="0.381" stop-color="#483698"/><stop offset="0.429" stop-color="#74399d"/><stop offset="0.476" stop-color="#8b3ca0"/><stop offset="0.524" stop-color="#9b40a4"/><stop offset="0.571" stop-color="#ab42a4"/><stop offset="0.619" stop-color="#ba43a3"/><stop offset="0.667" stop-color="#c744a2"/><stop offset="0.714" stop-color="#d1419f"/><stop offset="0.762" stop-color="#da3e9c"/><stop offset="0.81" stop-color="#e23c9a"/><stop offset="0.857" stop-color="#e53798"/><stop offset="0.905" stop-color="#e73396"/><stop offset="0.952" stop-color="#e93094"/><stop offset="1" stop-color="#eb2c93"/></linearGradient><linearGradient id="g128" gradientUnits="userSpaceOnUse" x1="837" x2="955"><stop offset="0" stop-color="#0a6bbe"/><stop offset="0.05" stop-color="#0f65b9"/><stop offset="0.1" stop-color="#165db3"/><stop offset="0.15" stop-color="#1e55ad"/><stop offset="0.2" stop-color="#284ba5"/><stop offset="0.25" stop-color="#30429f"/><stop offset="0.3" stop-color="#3c3496"/><stop offset="0.35" stop-color="#403597"/><stop offset="0.4" stop-color="#53379a"/><stop offset="0.45" stop-color="#7b3a9e"/><stop offset="0.5" stop-color="#8e3da1"/><stop offset="0.55" stop-color="#9e40a4"/><stop offset="0.6" stop-color="#ad42a4"/><stop offset="0.65" stop-color="#bc43a3"/><stop offset="0.7" stop-color="#c843a1"/><stop offset="0.75" stop-color="#d2419f"/><stop offset="0.8" stop-color="#db3e9c"/><stop offset="0.85" stop-color="#e23b9a"/><stop offset="0.9" stop-color="#e53798"/><stop offset="0.95" stop-color="#e73396"/><stop offset="1" stop-color="#e92f94"/></linearGradient><linearGradient id="g129" gradientUnits="userSpaceOnUse" x1="838" x2="950"><stop offset="0" stop-color="#0d68bb"/><stop offset="0.0526" stop-color="#1261b6"/><stop offset="0.105" stop-color="#195ab0"/><stop offset="0.158" stop-color="#2251a9"/><stop offset="0.211" stop-color="#2b47a3"/><stop offset="0.263" stop-color="#343d9c"/><stop offset="0.316" stop-color="#3d3496"/><stop offset="0.368" stop-color="#433597"/><stop offset="0.421" stop-color="#65399d"/><stop offset="0.474" stop-color="#823b9f"/><stop offset="0.526" stop-color="#923ea2"/><stop offset="0.579" stop-color="#a141a5"/><stop offset="0.632" stop-color="#b042a4"/><stop offset="0.684" stop-color="#be43a3"/><stop offset="0.737" stop-color="#ca43a1"/><stop offset="0.789" stop-color="#d3409e"/><stop offset="0.842" stop-color="#dc3e9c"/><stop offset="0.895" stop-color="#e33b9a"/><stop offset="0.947" stop-color="#e53798"/><stop offset="1" stop-color="#e73396"/></linearGradient><linearGradient id="g130" gradientUnits="userSpaceOnUse" x1="839" x2="945"><stop offset="0" stop-color="#0f65b9"/><stop offset="0.0556" stop-color="#155eb3"/><stop offset="0.111" stop-color="#1d56ad"/><stop offset="0.167" stop-color="#274ca6"/><stop offset="0.222" stop-color="#2e44a0"/><stop offset="0.278" stop-color="#393798"/><stop offset="0.333" stop-color="#3f3497"/><stop offset="0.389" stop-color="#473598"/><stop offset="0.444" stop-color="#6f399d"/><stop offset="0.5" stop-color="#873ca0"/><stop offset="0.556" stop-color="#963fa3"/><stop offset="0.611" stop-color="#a541a5"/><stop offset="0.667" stop-color="#b343a3"/><stop offset="0.722" stop-color="#c144a2"/><stop offset="0.778" stop-color="#cb42a0"/><stop offset="0.833" stop-color="#d4409e"/><stop offset="0.889" stop-color="#dd3e9c"/><stop offset="0.944" stop-color="#e33b99"/><stop offset="1" stop-color="#e53798"/></linearGradient><linearGradient id="g131" gradientUnits="userSpaceOnUse" x1="840" x2="940"><stop offset="0" stop-color="#1261b6"/><stop offset="0.0588" stop-color="#195ab0"/><stop offset="0.118" stop-color="#2152aa"/><stop offset="0.176" stop-color="#2a49a3"/><stop offset="0.235" stop-color="#32409e"/><stop offset="0.294" stop-color="#3d3496"/><stop offset="0.353" stop-color="#413597"/><stop offset="0.412" stop-color="#51379a"/><stop offset="0.471" stop-color="#783a9e"/><stop offset="0.529" stop-color="#8b3ca0"/><stop offset="0.588" stop-color="#9a40a4"/><stop offset="0.647" stop-color="#a842a4"/><stop offset="0.706" stop-color="#b643a3"/><stop offset="0.765" stop-color="#c344a2"/><stop offset="0.824" stop-color="#cd42a0"/><stop offset="0.882" stop-color="#d5409e"/><stop offset="0.941" stop-color="#de3d9b"/><stop offset="1" stop-color="#e33a99"/></linearGradient><linearGradient id="g132" gradientUnits="userSpaceOnUse" x1="841" x2="935"><stop offset="0" stop-color="#155eb3"/><stop offset="0.0625" stop-color="#1c57ae"/><stop offset="0.125" stop-color="#264da7"/><stop offset="0.188" stop-color="#2d45a1"/><stop offset="0.25" stop-color="#363b9a"/><stop offset="0.312" stop-color="#3e3496"/><stop offset="0.375" stop-color="#433597"/><stop offset="0.438" stop-color="#64389c"/><stop offset="0.5" stop-color="#803a9e"/><stop offset="0.562" stop-color="#8f3da1"/><stop offset="0.625" stop-color="#9e40a4"/><stop offset="0.688" stop-color="#ab42a4"/><stop offset="0.75" stop-color="#b943a3"/><stop offset="0.812" stop-color="#c544a2"/><stop offset="0.875" stop-color="#ce42a0"/><stop offset="0.938" stop-color="#d63f9d"/><stop offset="1" stop-color="#de3d9b"/></linearGradient><linearGradient id="g133" gradientUnits="userSpaceOnUse" x1="842" x2="930"><stop offset="0" stop-color="#185bb1"/><stop offset="0.0667" stop-color="#2053ab"/><stop offset="0.133" stop-color="#294aa4"/><stop offset="0.2" stop-color="#30429f"/><stop offset="0.267" stop-color="#3b3597"/><stop offset="0.333" stop-color="#3f3497"/><stop offset="0.4" stop-color="#473598"/><stop offset="0.467" stop-color="#6d399d"/><stop offset="0.533" stop-color="#853b9f"/><stop offset="0.6" stop-color="#933ea2"/><stop offset="0.667" stop-color="#a141a5"/><stop offset="0.733" stop-color="#ae42a4"/><stop offset="0.8" stop-color="#bb43a3"/><stop offset="0.867" stop-color="#c744a2"/><stop offset="0.933" stop-color="#cf419f"/><stop offset="1" stop-color="#d73f9d"/></linearGradient><linearGradient id="g134" gradientUnits="userSpaceOnUse" x1="843" x2="925"><stop offset="0" stop-color="#1c57ae"/><stop offset="0.0714" stop-color="#244fa8"/><stop offset="0.143" stop-color="#2c47a2"/><stop offset="0.214" stop-color="#343d9c"/><stop offset="0.286" stop-color="#3d3496"/><stop offset="0.357" stop-color="#413597"/><stop offset="0.429" stop-color="#4f369a"/><stop offset="0.5" stop-color="#76399d"/><stop offset="0.571" stop-color="#893ca0"/><stop offset="0.643" stop-color="#973fa3"/><stop offset="0.714" stop-color="#a441a5"/><stop offset="0.786" stop-color="#b142a4"/><stop offset="0.857" stop-color="#be43a3"/><stop offset="0.929" stop-color="#c843a1"/><stop offset="1" stop-color="#d1419f"/></linearGradient><linearGradient id="g135" gradientUnits="userSpaceOnUse" x1="844" x2="920"><stop offset="0" stop-color="#1f54ab"/><stop offset="0.0769" stop-color="#284ba5"/><stop offset="0.154" stop-color="#2f43a0"/><stop offset="0.231" stop-color="#383899"/><stop offset="0.308" stop-color="#3e3496"/><stop offset="0.385" stop-color="#433597"/><stop offset="0.462" stop-color="#63389c"/><stop offset="0.538" stop-color="#7e3a9e"/><stop offset="0.615" stop-color="#8d3da1"/><stop offset="0.692" stop-color="#9a40a4"/><stop offset="0.769" stop-color="#a742a4"/><stop offset="0.846" stop-color="#b443a3"/><stop offset="0.923" stop-color="#c044a2"/><stop offset="1" stop-color="#ca43a1"/></linearGradient><linearGradient id="g136" gradientUnits="userSpaceOnUse" x1="846" x2="915"><stop offset="0" stop-color="#254ea7"/><stop offset="0.0833" stop-color="#2c47a2"/><stop offset="0.167" stop-color="#333e9d"/><stop offset="0.25" stop-color="#3d3496"/><stop offset="0.333" stop-color="#403597"/><stop offset="0.417" stop-color="#483698"/><stop offset="0.5" stop-color="#6e399d"/><stop offset="0.583" stop-color="#843b9f"/><stop offset="0.667" stop-color="#913ea2"/><stop offset="0.75" stop-color="#9e41a5"/><stop offset="0.833" stop-color="#aa42a4"/><stop offset="0.917" stop-color="#b643a3"/><stop offset="1" stop-color="#c244a2"/></linearGradient><linearGradient id="g137" gradientUnits="userSpaceOnUse" x1="847" x2="910"><stop offset="0" stop-color="#294aa5"/><stop offset="0.0909" stop-color="#2f44a0"/><stop offset="0.182" stop-color="#37399a"/><stop offset="0.273" stop-color="#3e3496"/><stop offset="0.364" stop-color="#423597"/><stop offset="0.455" stop-color="#57379b"/><stop offset="0.545" stop-color="#75399d"/><stop offset="0.636" stop-color="#883ca0"/><stop offset="0.727" stop-color="#943ea2"/><stop offset="0.818" stop-color="#a141a5"/><stop offset="0.909" stop-color="#ad42a4"/><stop offset="1" stop-color="#b843a3"/></linearGradient><linearGradient id="g138" gradientUnits="userSpaceOnUse" x1="849" x2="905"><stop offset="0" stop-color="#2c46a2"/><stop offset="0.1" stop-color="#333e9d"/><stop offset="0.2" stop-color="#3c3496"/><stop offset="0.3" stop-color="#3f3497"/><stop offset="0.4" stop-color="#453598"/><stop offset="0.5" stop-color="#66399d"/><stop offset="0.6" stop-color="#7e3a9e"/><stop offset="0.7" stop-color="#8c3da1"/><stop offset="0.8" stop-color="#983fa3"/><stop offset="0.9" stop-color="#a341a5"/><stop offset="1" stop-color="#af42a4"/></linearGradient><linearGradient id="g139" gradientUnits="userSpaceOnUse" x1="851" x2="900"><stop offset="0" stop-color="#30429f"/><stop offset="0.111" stop-color="#383899"/><stop offset="0.222" stop-color="#3e3496"/><stop offset="0.333" stop-color="#423597"/><stop offset="0.444" stop-color="#4c3699"/><stop offset="0.556" stop-color="#6f399d"/><stop offset="0.667" stop-color="#833b9f"/><stop offset="0.778" stop-color="#8f3da1"/><stop offset="0.889" stop-color="#9b40a4"/><stop offset="1" stop-color="#a641a5"/></linearGradient><linearGradient id="g140" gradientUnits="userSpaceOnUse" x1="852" x2="895"><stop offset="0" stop-color="#333e9d"/><stop offset="0.125" stop-color="#3c3496"/><stop offset="0.25" stop-color="#3f3497"/><stop offset="0.375" stop-color="#443597"/><stop offset="0.5" stop-color="#5f389c"/><stop offset="0.625" stop-color="#76399d"/><stop offset="0.75" stop-color="#863b9f"/><stop offset="0.875" stop-color="#923ea2"/><stop offset="1" stop-color="#9d40a4"/></linearGradient><linearGradient id="g141" gradientUnits="userSpaceOnUse" x1="854" x2="890"><stop offset="0" stop-color="#393898"/><stop offset="0.167" stop-color="#3e3496"/><stop offset="0.333" stop-color="#423597"/><stop offset="0.5" stop-color="#5c389c"/><stop offset="0.667" stop-color="#75399d"/><stop offset="0.833" stop-color="#873ca0"/><stop offset="1" stop-color="#943ea2"/></linearGradient><linearGradient id="g142" gradientUnits="userSpaceOnUse" x1="856" x2="885"><stop offset="0" stop-color="#3d3496"/><stop offset="0.2" stop-color="#403497"/><stop offset="0.4" stop-color="#463598"/><stop offset="0.6" stop-color="#66399d"/><stop offset="0.8" stop-color="#7d3a9e"/><stop offset="1" stop-color="#8b3ca0"/></linearGradient><linearGradient id="g143" gradientUnits="userSpaceOnUse" x1="859" x2="880"><stop offset="0" stop-color="#3f3497"/><stop offset="0.25" stop-color="#433597"/><stop offset="0.5" stop-color="#51379a"/><stop offset="0.75" stop-color="#6f399d"/><stop offset="1" stop-color="#823a9e"/></linearGradient><linearGradient id="g144" gradientUnits="userSpaceOnUse" x1="861" x2="875"><stop offset="0" stop-color="#413597"/><stop offset="0.333" stop-color="#463598"/><stop offset="0.667" stop-color="#61389c"/><stop offset="1" stop-color="#74399d"/></linearGradient><linearGradient id="g145" gradientUnits="userSpaceOnUse" x1="865" x2="872"><stop offset="0" stop-color="#473598"/><stop offset="0.5" stop-color="#5e389c"/><stop offset="1" stop-color="#6b399d"/></linearGradient>
</defs>
<g clip-path="url(#loc)"><g filter="url(#vb)"><rect x="823" y="121" width="16" height="3.5" fill="url(#g0)"/><rect x="819" y="124" width="28" height="3.5" fill="url(#g1)"/><rect x="816" y="127" width="37" height="3.5" fill="url(#g2)"/><rect x="814" y="130" width="43" height="3.5" fill="url(#g3)"/><rect x="812" y="133" width="49" height="3.5" fill="url(#g4)"/><rect x="810" y="136" width="55" height="3.5" fill="url(#g5)"/><rect x="809" y="139" width="60" height="3.5" fill="url(#g6)"/><rect x="808" y="142" width="65" height="3.5" fill="url(#g7)"/><rect x="807" y="145" width="69" height="3.5" fill="url(#g8)"/><rect x="806" y="148" width="73" height="3.5" fill="url(#g9)"/><rect x="805" y="151" width="77" height="3.5" fill="url(#g10)"/><rect x="805" y="154" width="81" height="3.5" fill="url(#g11)"/><rect x="804" y="157" width="85" height="3.5" fill="url(#g12)"/><rect x="803" y="160" width="89" height="3.5" fill="url(#g13)"/><rect x="802" y="163" width="93" height="3.5" fill="url(#g14)"/><rect x="802" y="166" width="96" height="3.5" fill="url(#g15)"/><rect x="801" y="169" width="99" height="3.5" fill="url(#g16)"/><rect x="801" y="172" width="102" height="3.5" fill="url(#g17)"/><rect x="801" y="175" width="104" height="3.5" fill="url(#g18)"/><rect x="800" y="178" width="108" height="3.5" fill="url(#g19)"/><rect x="800" y="181" width="111" height="3.5" fill="url(#g20)"/><rect x="800" y="184" width="114" height="3.5" fill="url(#g21)"/><rect x="800" y="187" width="115" height="3.5" fill="url(#g22)"/><rect x="799" y="190" width="119" height="3.5" fill="url(#g23)"/><rect x="799" y="193" width="122" height="3.5" fill="url(#g24)"/><rect x="799" y="196" width="124" height="3.5" fill="url(#g25)"/><rect x="799" y="199" width="127" height="3.5" fill="url(#g26)"/><rect x="799" y="202" width="129" height="3.5" fill="url(#g27)"/><rect x="799" y="205" width="131" height="3.5" fill="url(#g28)"/><rect x="799" y="208" width="134" height="3.5" fill="url(#g29)"/><rect x="798" y="211" width="137" height="3.5" fill="url(#g30)"/><rect x="798" y="214" width="140" height="3.5" fill="url(#g31)"/><rect x="798" y="217" width="142" height="3.5" fill="url(#g32)"/><rect x="798" y="220" width="144" height="3.5" fill="url(#g33)"/><rect x="798" y="223" width="146" height="3.5" fill="url(#g34)"/><rect x="798" y="226" width="149" height="3.5" fill="url(#g35)"/><rect x="798" y="229" width="151" height="3.5" fill="url(#g36)"/><rect x="798" y="232" width="153" height="3.5" fill="url(#g37)"/><rect x="798" y="235" width="156" height="3.5" fill="url(#g38)"/><rect x="798" y="238" width="158" height="3.5" fill="url(#g39)"/><rect x="798" y="241" width="160" height="3.5" fill="url(#g40)"/><rect x="798" y="244" width="163" height="3.5" fill="url(#g41)"/><rect x="799" y="247" width="164" height="3.5" fill="url(#g42)"/><rect x="799" y="250" width="166" height="3.5" fill="url(#g43)"/><rect x="799" y="253" width="169" height="3.5" fill="url(#g44)"/><rect x="799" y="256" width="171" height="3.5" fill="url(#g45)"/><rect x="799" y="259" width="173" height="3.5" fill="url(#g46)"/><rect x="799" y="262" width="175" height="3.5" fill="url(#g47)"/><rect x="799" y="265" width="178" height="3.5" fill="url(#g48)"/><rect x="799" y="268" width="180" height="3.5" fill="url(#g49)"/><rect x="800" y="271" width="181" height="3.5" fill="url(#g50)"/><rect x="800" y="274" width="183" height="3.5" fill="url(#g51)"/><rect x="800" y="277" width="186" height="3.5" fill="url(#g52)"/><rect x="800" y="280" width="188" height="3.5" fill="url(#g53)"/><rect x="800" y="283" width="190" height="3.5" fill="url(#g54)"/><rect x="801" y="286" width="191" height="3.5" fill="url(#g55)"/><rect x="801" y="289" width="194" height="3.5" fill="url(#g56)"/><rect x="801" y="292" width="196" height="3.5" fill="url(#g57)"/><rect x="801" y="295" width="198" height="3.5" fill="url(#g58)"/><rect x="802" y="298" width="200" height="3.5" fill="url(#g59)"/><rect x="802" y="301" width="202" height="3.5" fill="url(#g60)"/><rect x="802" y="304" width="204" height="3.5" fill="url(#g61)"/><rect x="802" y="307" width="206" height="3.5" fill="url(#g62)"/><rect x="803" y="310" width="208" height="3.5" fill="url(#g63)"/><rect x="803" y="313" width="210" height="3.5" fill="url(#g64)"/><rect x="803" y="316" width="212" height="3.5" fill="url(#g65)"/><rect x="803" y="319" width="214" height="3.5" fill="url(#g66)"/><rect x="804" y="322" width="216" height="3.5" fill="url(#g67)"/><rect x="804" y="325" width="218" height="3.5" fill="url(#g68)"/><rect x="805" y="328" width="219" height="3.5" fill="url(#g69)"/><rect x="805" y="331" width="222" height="3.5" fill="url(#g70)"/><rect x="805" y="334" width="224" height="3.5" fill="url(#g71)"/><rect x="806" y="337" width="225" height="3.5" fill="url(#g72)"/><rect x="806" y="340" width="228" height="3.5" fill="url(#g73)"/><rect x="806" y="343" width="230" height="3.5" fill="url(#g74)"/><rect x="807" y="346" width="231" height="3.5" fill="url(#g75)"/><rect x="807" y="349" width="233" height="3.5" fill="url(#g76)"/><rect x="808" y="352" width="234" height="3.5" fill="url(#g77)"/><rect x="808" y="355" width="237" height="3.5" fill="url(#g78)"/><rect x="808" y="358" width="239" height="3.5" fill="url(#g79)"/><rect x="808" y="361" width="241" height="3.5" fill="url(#g80)"/><rect x="809" y="364" width="242" height="3.5" fill="url(#g81)"/><rect x="809" y="367" width="245" height="3.5" fill="url(#g82)"/><rect x="809" y="370" width="247" height="3.5" fill="url(#g83)"/><rect x="810" y="373" width="248" height="3.5" fill="url(#g84)"/><rect x="810" y="376" width="251" height="3.5" fill="url(#g85)"/><rect x="811" y="379" width="251" height="3.5" fill="url(#g86)"/><rect x="811" y="382" width="254" height="3.5" fill="url(#g87)"/><rect x="812" y="385" width="255" height="3.5" fill="url(#g88)"/><rect x="812" y="388" width="257" height="3.5" fill="url(#g89)"/><rect x="813" y="391" width="258" height="3.5" fill="url(#g90)"/><rect x="813" y="394" width="261" height="3.5" fill="url(#g91)"/><rect x="814" y="397" width="262" height="3.5" fill="url(#g92)"/><rect x="814" y="400" width="264" height="3.5" fill="url(#g93)"/><rect x="815" y="403" width="266" height="3.5" fill="url(#g94)"/><rect x="815" y="406" width="268" height="3.5" fill="url(#g95)"/><rect x="815" y="409" width="271" height="3.5" fill="url(#g96)"/><rect x="816" y="412" width="272" height="3.5" fill="url(#g97)"/><rect x="816" y="415" width="274" height="3.5" fill="url(#g98)"/><rect x="817" y="418" width="276" height="3.5" fill="url(#g99)"/><rect x="817" y="421" width="277" height="3.5" fill="url(#g100)"/><rect x="818" y="424" width="273" height="3.5" fill="url(#g101)"/><rect x="818" y="427" width="268" height="3.5" fill="url(#g102)"/><rect x="819" y="430" width="262" height="3.5" fill="url(#g103)"/><rect x="820" y="433" width="256" height="3.5" fill="url(#g104)"/><rect x="820" y="436" width="251" height="3.5" fill="url(#g105)"/><rect x="821" y="439" width="245" height="3.5" fill="url(#g106)"/><rect x="822" y="442" width="239" height="3.5" fill="url(#g107)"/><rect x="822" y="445" width="234" height="3.5" fill="url(#g108)"/><rect x="823" y="448" width="228" height="3.5" fill="url(#g109)"/><rect x="824" y="451" width="222" height="3.5" fill="url(#g110)"/><rect x="824" y="454" width="217" height="3.5" fill="url(#g111)"/><rect x="825" y="457" width="211" height="3.5" fill="url(#g112)"/><rect x="826" y="460" width="205" height="3.5" fill="url(#g113)"/><rect x="826" y="463" width="200" height="3.5" fill="url(#g114)"/><rect x="827" y="466" width="194" height="3.5" fill="url(#g115)"/><rect x="827" y="469" width="189" height="3.5" fill="url(#g116)"/><rect x="828" y="472" width="183" height="3.5" fill="url(#g117)"/><rect x="829" y="475" width="177" height="3.5" fill="url(#g118)"/><rect x="830" y="478" width="171" height="3.5" fill="url(#g119)"/><rect x="830" y="481" width="166" height="3.5" fill="url(#g120)"/><rect x="831" y="484" width="160" height="3.5" fill="url(#g121)"/><rect x="832" y="487" width="154" height="3.5" fill="url(#g122)"/><rect x="833" y="490" width="147" height="3.5" fill="url(#g123)"/><rect x="834" y="493" width="141" height="3.5" fill="url(#g124)"/><rect x="835" y="496" width="135" height="3.5" fill="url(#g125)"/><rect x="836" y="499" width="129" height="3.5" fill="url(#g126)"/><rect x="837" y="502" width="123" height="3.5" fill="url(#g127)"/><rect x="837" y="505" width="118" height="3.5" fill="url(#g128)"/><rect x="838" y="508" width="112" height="3.5" fill="url(#g129)"/><rect x="839" y="511" width="106" height="3.5" fill="url(#g130)"/><rect x="840" y="514" width="100" height="3.5" fill="url(#g131)"/><rect x="841" y="517" width="94" height="3.5" fill="url(#g132)"/><rect x="842" y="520" width="88" height="3.5" fill="url(#g133)"/><rect x="843" y="523" width="82" height="3.5" fill="url(#g134)"/><rect x="844" y="526" width="76" height="3.5" fill="url(#g135)"/><rect x="846" y="529" width="69" height="3.5" fill="url(#g136)"/><rect x="847" y="532" width="63" height="3.5" fill="url(#g137)"/><rect x="849" y="535" width="56" height="3.5" fill="url(#g138)"/><rect x="851" y="538" width="49" height="3.5" fill="url(#g139)"/><rect x="852" y="541" width="43" height="3.5" fill="url(#g140)"/><rect x="854" y="544" width="36" height="3.5" fill="url(#g141)"/><rect x="856" y="547" width="29" height="3.5" fill="url(#g142)"/><rect x="859" y="550" width="21" height="3.5" fill="url(#g143)"/><rect x="861" y="553" width="14" height="3.5" fill="url(#g144)"/><rect x="865" y="556" width="7" height="3.5" fill="url(#g145)"/></g></g>
<path d="M800.35 88.00V559.00M799.85 558.50H1153.40M839.52 88.00V559.00M799.85 506.28H1153.40M878.69 88.00V559.00M799.85 454.06H1153.40M917.87 88.00V559.00M799.85 401.83H1153.40M957.04 88.00V559.00M799.85 349.61H1153.40M996.21 88.00V559.00M799.85 297.39H1153.40M1035.38 88.00V559.00M799.85 245.17H1153.40M1074.56 88.00V559.00M799.85 192.94H1153.40M1113.73 88.00V559.00M799.85 140.72H1153.40M1152.90 88.00V559.00M799.85 88.50H1153.40" fill="none" stroke="#fff" stroke-opacity=".36" stroke-width="1.4"/>
<g class="ax"><text x="800.4" y="574.3" text-anchor="middle" textLength="12.3" lengthAdjust="spacingAndGlyphs">0.0</text><text x="794.2" y="562.4" text-anchor="end" textLength="12.3" lengthAdjust="spacingAndGlyphs">0.0</text><text x="839.5" y="574.3" text-anchor="middle" textLength="12.3" lengthAdjust="spacingAndGlyphs">0.1</text><text x="794.2" y="510.2" text-anchor="end" textLength="12.3" lengthAdjust="spacingAndGlyphs">0.1</text><text x="878.7" y="574.3" text-anchor="middle" textLength="12.3" lengthAdjust="spacingAndGlyphs">0.2</text><text x="794.2" y="458.0" text-anchor="end" textLength="12.3" lengthAdjust="spacingAndGlyphs">0.2</text><text x="917.9" y="574.3" text-anchor="middle" textLength="12.3" lengthAdjust="spacingAndGlyphs">0.3</text><text x="794.2" y="405.7" text-anchor="end" textLength="12.3" lengthAdjust="spacingAndGlyphs">0.3</text><text x="957.0" y="574.3" text-anchor="middle" textLength="12.3" lengthAdjust="spacingAndGlyphs">0.4</text><text x="794.2" y="353.5" text-anchor="end" textLength="12.3" lengthAdjust="spacingAndGlyphs">0.4</text><text x="996.2" y="574.3" text-anchor="middle" textLength="12.3" lengthAdjust="spacingAndGlyphs">0.5</text><text x="794.2" y="301.3" text-anchor="end" textLength="12.3" lengthAdjust="spacingAndGlyphs">0.5</text><text x="1035.4" y="574.3" text-anchor="middle" textLength="12.3" lengthAdjust="spacingAndGlyphs">0.6</text><text x="794.2" y="249.1" text-anchor="end" textLength="12.3" lengthAdjust="spacingAndGlyphs">0.6</text><text x="1074.6" y="574.3" text-anchor="middle" textLength="12.3" lengthAdjust="spacingAndGlyphs">0.7</text><text x="794.2" y="196.8" text-anchor="end" textLength="12.3" lengthAdjust="spacingAndGlyphs">0.7</text><text x="1113.7" y="574.3" text-anchor="middle" textLength="12.3" lengthAdjust="spacingAndGlyphs">0.8</text><text x="794.2" y="144.6" text-anchor="end" textLength="12.3" lengthAdjust="spacingAndGlyphs">0.8</text><text x="1152.9" y="574.3" text-anchor="middle" textLength="12.3" lengthAdjust="spacingAndGlyphs">0.9</text><text x="794.2" y="92.4" text-anchor="end" textLength="12.3" lengthAdjust="spacingAndGlyphs">0.9</text><text x="792" y="70.2" text-anchor="middle" textLength="5" lengthAdjust="spacingAndGlyphs">y</text><text x="1172" y="562" text-anchor="middle" textLength="5.2" lengthAdjust="spacingAndGlyphs">x</text></g>
<path d="M827.8 116.2L827.8 122.8M892.6 156.8L889.3 162.2M948.6 226.6L945.6 230.8M1004.5 298.3L1001.0 303.2M1050.5 359.0L1046.6 363.0M1075.6 392.5L1073.3 397.0M1094.2 416.6L1090.5 421.0M798.0 276.7L802.8 274.8M814.3 405.8L817.7 402.9M831.0 489.8L835.6 487.5M843.7 530.6L848.7 526.3M852.6 546.5L856.0 542.6M866.4 560.2L869.4 555.9" stroke="#0f5aa4" stroke-width="1.1" fill="none"/>
<g class="wl"><text x="827.2" y="112.4" text-anchor="middle" textLength="16.2" lengthAdjust="spacingAndGlyphs">520</text><text x="899.8" y="155.0" text-anchor="middle" textLength="16.2" lengthAdjust="spacingAndGlyphs">540</text><text x="947.8" y="222.8" text-anchor="middle" textLength="16.2" lengthAdjust="spacingAndGlyphs">560</text><text x="1011.7" y="296.2" text-anchor="middle" textLength="16.2" lengthAdjust="spacingAndGlyphs">580</text><text x="1063.4" y="360.6" text-anchor="middle" textLength="16.2" lengthAdjust="spacingAndGlyphs">600</text><text x="1086.4" y="391.7" text-anchor="middle" textLength="16.2" lengthAdjust="spacingAndGlyphs">620</text><text x="1104.1" y="414.2" text-anchor="middle" textLength="16.2" lengthAdjust="spacingAndGlyphs">700</text><text x="789.7" y="281.6" text-anchor="middle" textLength="16.2" lengthAdjust="spacingAndGlyphs">500</text><text x="810.4" y="416.6" text-anchor="middle" textLength="16.2" lengthAdjust="spacingAndGlyphs">490</text><text x="818.7" y="497.3" text-anchor="middle" textLength="16.2" lengthAdjust="spacingAndGlyphs">480</text><text x="830.2" y="537.0" text-anchor="middle" textLength="16.2" lengthAdjust="spacingAndGlyphs">470</text><text x="848.7" y="557.4" text-anchor="middle" textLength="16.2" lengthAdjust="spacingAndGlyphs">460</text><text x="860.3" y="570.8" text-anchor="middle" textLength="16.2" lengthAdjust="spacingAndGlyphs">380</text></g>
<g fill="none" stroke="#e61a14" stroke-width="1.25"><circle cx="923.4" cy="389" r="4.7"/><path d="M918.7 389H928.1M923.4 384.3V393.7"/></g>
</svg>
<svg class="ic" style="left:1951px;top:42px" width="13" height="13" viewBox="0 0 13 13"><rect width="13" height="13" fill="#fff"/><g fill="none" stroke="#111" stroke-width="1.3"><circle cx="6.8" cy="6.6" r="4.7"/><path d="M2.1 6.6H11.5M6.8 1.9V11.3"/></g></svg>
<div class="lg" style="left:1971px;top:41.4px">Target</div>
<svg class="ic" style="left:1951px;top:75px" width="13" height="13" viewBox="0 0 13 13"><rect width="13" height="13" fill="#fff"/><g fill="none" stroke="#f01818" stroke-width="1.3"><circle cx="6.8" cy="6.6" r="4.7"/><path d="M2.1 6.6H11.5M6.8 1.9V11.3"/></g></svg>
<div class="lg" style="left:1971px;top:74px;letter-spacing:-.47px">Achieved</div>
<div class="rd" style="left:1954px;top:103px"><b></b></div><div class="lg" style="left:1982.4px;top:105px">xy</div>
<div class="rd off" style="left:1954px;top:133.2px"></div><div class="lg" style="left:1982.6px;top:135px">u'v'</div>
<div class="sep"></div>
<div class="t b" style="left:1030.3px;top:611px;letter-spacing:.5px">Target</div>
<div class="t b" style="left:1211px;top:611px;letter-spacing:.06px">Achieved</div>
<div class="t b" style="left:682.5px;top:641px;letter-spacing:.3px">White Point:</div>
<div class="t" style="left:1030.3px;top:641px;letter-spacing:-.21px">CCT: CIE Illuminant D65K</div>
<div class="t" style="left:1211px;top:641px;letter-spacing:-.4px">CCT: 6543K</div>
<div class="t" style="left:1030.3px;top:667px;letter-spacing:.09px">x: 0.313, y: 0.329</div>
<div class="t" style="left:1211px;top:667px;letter-spacing:.06px">x: 0.312, y: 0.329</div>
<div class="t b" style="left:682px;top:693px;letter-spacing:.15px">Black Luminance:</div>
<div class="t" style="left:1030.3px;top:693px;letter-spacing:-.28px">Native</div>
<div class="t" style="left:1211px;top:693px;letter-spacing:.09px">0.084 cd/m²</div>
<div class="t b" style="left:682px;top:719px;letter-spacing:.14px">Luminance:</div>
<div class="t" style="left:1030.3px;top:719px;letter-spacing:.08px">120 cd/m²</div>
<div class="t" style="left:1211px;top:719px;letter-spacing:.08px">121 cd/m²</div>
<div class="t b" style="left:682px;top:745px;letter-spacing:.25px">Contrast Ratio:</div>
<div class="t" style="left:1030.3px;top:745px;letter-spacing:-.28px">Native</div>
<div class="t" style="left:1211px;top:745px;letter-spacing:-.27px">1434.37:1</div>
<div class="ftr"></div>
</body>
</html>
